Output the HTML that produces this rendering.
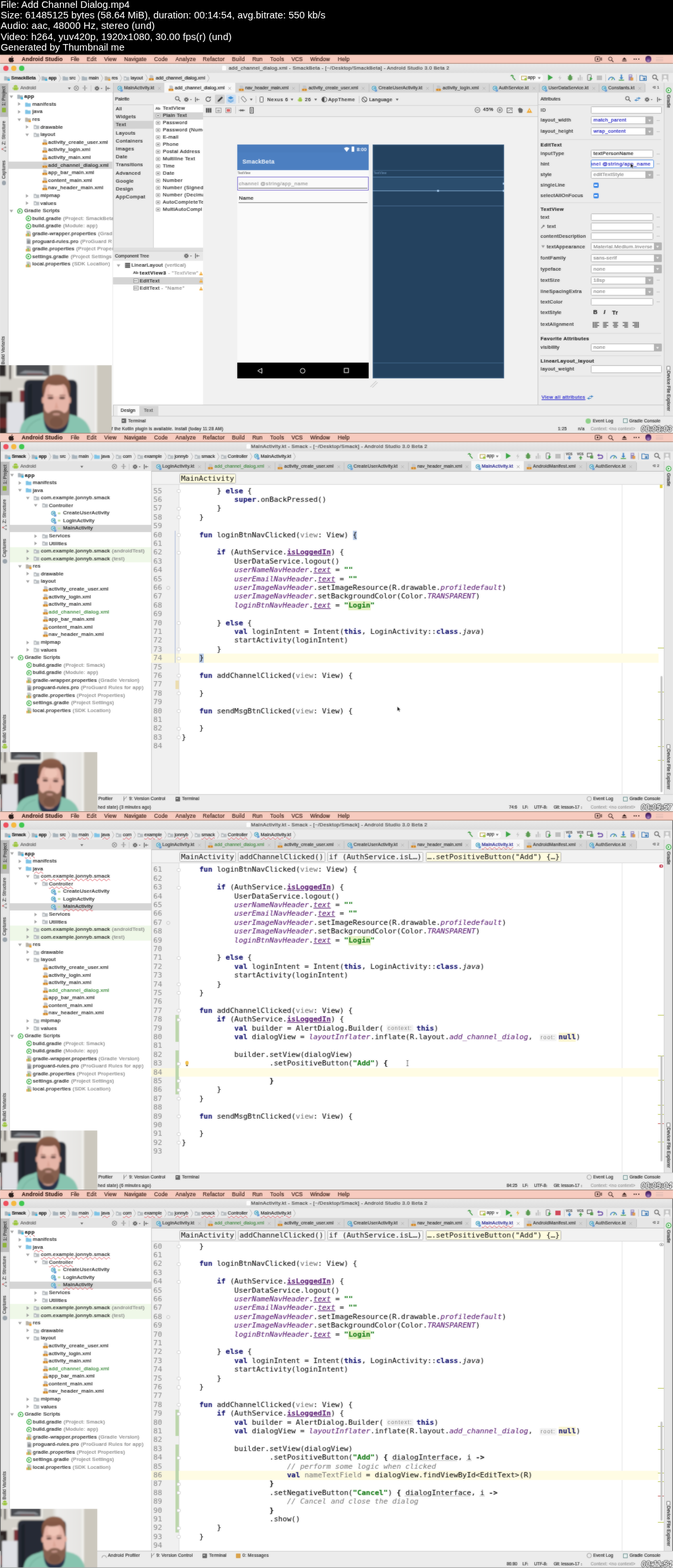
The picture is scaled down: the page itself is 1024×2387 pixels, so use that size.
<!DOCTYPE html>
<html lang="en"><head><meta charset="utf-8"><title>Add Channel Dialog.mp4 - thumbnails</title>
<style>
html,body{margin:0;padding:0;background:#000;}
#root{position:relative;width:1024px;height:2387px;overflow:hidden;background:#000;font-family:"Liberation Sans",sans-serif;}
#root div,#root span,#root svg{position:absolute;}
.t{white-space:pre;line-height:1.24;color:#262626;-webkit-text-stroke:0.22px;}
.hd,.hint{-webkit-text-stroke:0;}
.m{-webkit-text-stroke:0.1px;}
.m{font-family:"DejaVu Sans Mono","Liberation Mono",monospace;}
.c{font-size:11.09px;line-height:14px;height:14px;color:#101010;}
.ln{font-size:11.16px;line-height:14px;height:14px;color:#929292;}
.hint{font-size:8.2px;line-height:11px;height:11px;color:#7a7a7a;background:#f3f3f3;border-radius:2px;text-align:center;}
.ts{font-size:13px;line-height:13px;color:#fff;font-style:italic;letter-spacing:0.05px;-webkit-text-stroke:0;text-shadow:-0.7px -0.7px 0 #000,0.7px -0.7px 0 #000,-0.7px 0.7px 0 #000,0.7px 0.7px 0 #000,0 0.8px 0 #000,0 -0.8px 0 #000,0.8px 0 0 #000,-0.8px 0 0 #000;}
.hd{color:#fff;}
.fb{filter:url(#soft);}
.hdw{filter:blur(0.3px);}
</style></head>
<body><svg width="0" height="0" style="position:absolute"><defs><filter id="soft" x="0" y="0" width="100%" height="100%" color-interpolation-filters="sRGB"><feGaussianBlur in="SourceGraphic" stdDeviation="0.9" result="b"/><feComposite in="b" in2="SourceGraphic" operator="arithmetic" k1="0" k2="0.32" k3="0.68" k4="0"/></filter></defs></svg><div id="root">
<div class="hdw" style="left:0;top:0;width:1024px;height:83px;"><span class="t hd" style="left:1px;top:-2.08px;font-size:14.8px;color:#fff;letter-spacing:0.02px;">File: Add Channel Dialog.mp4</span><span class="t hd" style="left:1px;top:14.2px;font-size:14.8px;color:#fff;letter-spacing:0.03px;">Size: 61485125 bytes (58.64 MiB), duration: 00:14:54, avg.bitrate: 550 kb/s</span><span class="t hd" style="left:1px;top:30.48px;font-size:14.8px;color:#fff;letter-spacing:0.15px;">Audio: aac, 48000 Hz, stereo (und)</span><span class="t hd" style="left:1px;top:46.76px;font-size:14.8px;color:#fff;letter-spacing:0.09px;">Video: h264, yuv420p, 1920x1080, 30.00 fps(r) (und)</span><span class="t hd" style="left:1px;top:63.04px;font-size:14.8px;color:#fff;letter-spacing:0.05px;">Generated by Thumbnail me</span></div>
<div style="left:0;top:83px;width:1024px;height:576px;overflow:hidden;"><div class="fb" style="left:0;top:-83px;width:1024px;height:659px;"><div style="left:-6px;top:77px;width:1036px;height:588px;background:#ececec;"></div><div style="left:0px;top:83px;width:1024px;height:576px;background:#ececec;"></div><div style="left:0px;top:83px;width:1024px;height:14px;background:#f7cbbf;"></div><div style="left:0px;top:96.2px;width:1024px;height:1.1px;background:#a8806f;"></div><div style="left:0px;top:83px;width:1024px;height:0.8px;background:#8f7466;"></div><svg style="position:absolute;left:13px;top:84.6px" width="9" height="10" viewBox="0 0 18 20"><path fill="#2a1d1a" d="M12.2 0.3c0.1 1.2-0.4 2.3-1.1 3.1-0.8 0.9-1.9 1.5-3 1.4-0.1-1.1 0.4-2.3 1.1-3C10 0.9 11.200 0.400 12.2 0.3zM16 6.8c-1.300 0.800-2 2-2 3.400 0 1.700 1 3.100 2.500 3.700-0.400 1.200-1 2.300-1.700 3.300-0.900 1.300-1.800 2.500-3.200 2.500-1.300 0-1.700-0.800-3.300-0.800-1.500 0-2 0.800-3.300 0.800-1.300 0-2.300-1.200-3.200-2.500C0.100 14.600-0.600 10.800 0.900 8.300c1-1.700 2.600-2.700 4.300-2.700 1.400 0 2.500 0.900 3.400 0.900 0.900 0 2.200-1 3.900-0.900 1.300 0.100 2.600 0.600 3.500 1.200z"/></svg><span class="t" style="left:33px;top:85.05px;font-size:8.3px;color:#3a2019;font-weight:bold;letter-spacing:0.18px;">Android Studio</span><span class="t" style="left:107.5px;top:85.05px;font-size:8.3px;color:#3a2019;letter-spacing:-0.09px;">File</span><span class="t" style="left:132px;top:85.05px;font-size:8.3px;color:#3a2019;letter-spacing:0.17px;">Edit</span><span class="t" style="left:158.5px;top:85.05px;font-size:8.3px;color:#3a2019;letter-spacing:0.29px;">View</span><span class="t" style="left:189px;top:85.05px;font-size:8.3px;color:#3a2019;letter-spacing:0.16px;">Navigate</span><span class="t" style="left:234.5px;top:85.05px;font-size:8.3px;color:#3a2019;letter-spacing:0.29px;">Code</span><span class="t" style="left:267px;top:85.05px;font-size:8.3px;color:#3a2019;letter-spacing:0.21px;">Analyze</span><span class="t" style="left:308.5px;top:85.05px;font-size:8.3px;color:#3a2019;letter-spacing:0.27px;">Refactor</span><span class="t" style="left:353px;top:85.05px;font-size:8.3px;color:#3a2019;letter-spacing:0.21px;">Build</span><span class="t" style="left:384px;top:85.05px;font-size:8.3px;color:#3a2019;letter-spacing:0.09px;">Run</span><span class="t" style="left:411px;top:85.05px;font-size:8.3px;color:#3a2019;letter-spacing:0.42px;">Tools</span><span class="t" style="left:443.5px;top:85.05px;font-size:8.3px;color:#3a2019;letter-spacing:-0.02px;">VCS</span><span class="t" style="left:472px;top:85.05px;font-size:8.3px;color:#3a2019;letter-spacing:0.08px;">Window</span><span class="t" style="left:514px;top:85.05px;font-size:8.3px;color:#3a2019;letter-spacing:0.23px;">Help</span><svg style="position:absolute;left:904.5px;top:86px" width="11" height="8" viewBox="0 0 11 8"><rect x="0.5" y="0.6" width="7.4" height="6.600" rx="0.8" fill="none" stroke="#3a2420" stroke-width="0.9"/><circle cx="4.2" cy="3.900" r="1.4" fill="#3a2420"/><path d="M8.2 3.900L10.5 1.800V6Z" fill="none" stroke="#3a2420" stroke-width="0.8"/></svg><svg style="position:absolute;left:925px;top:85.7px" width="9" height="9" viewBox="0 0 9 9"><circle cx="3.600" cy="3.600" r="2.700" fill="none" stroke="#3a2420" stroke-width="1"/><path d="M5.600 5.600L8.400 8.400" stroke="#3a2420" stroke-width="1.2"/></svg><svg style="position:absolute;left:945.5px;top:86px" width="8" height="8" viewBox="0 0 8 8"><path d="M4 1.200L7.400 5H0.600Z M0.600 6H7.400V7.200H0.600Z" fill="#3a2420"/></svg><div style="left:963.6px;top:89.1px;width:2px;height:2px;background:#3a2420;border-radius:50%;"></div><div style="left:967.1px;top:89.1px;width:2px;height:2px;background:#3a2420;border-radius:50%;"></div><div style="left:970.6px;top:89.1px;width:2px;height:2px;background:#3a2420;border-radius:50%;"></div><div style="left:981.8px;top:85.4px;width:9.2px;height:9.2px;background:radial-gradient(circle at 50% 75%,#a78cc0 0,#5c2f7c 45%,#24102f 100%);border-radius:50%;"></div><div style="left:998px;top:87px;width:11px;height:1px;background:#dcbab2;"></div><div style="left:998px;top:89.5px;width:11px;height:1px;background:#dcbab2;"></div><div style="left:998px;top:92px;width:11px;height:1px;background:#dcbab2;"></div><div style="left:0px;top:97px;width:1024px;height:14px;background:linear-gradient(#ebebeb,#dcdcdc);"></div><div style="left:0px;top:110.5px;width:1024px;height:0.8px;background:#c4c4c4;"></div><div style="left:5.2px;top:100px;width:8px;height:8px;background:#ee4f5d;border-radius:50%;"></div><div style="left:17.2px;top:100px;width:8px;height:8px;background:#f6b83f;border-radius:50%;"></div><div style="left:29.2px;top:100px;width:8px;height:8px;background:#3fc84f;border-radius:50%;"></div><div style="left:338px;top:99.6px;width:5.6px;height:7.4px;background:#fdfdfd;border-radius:0.6px;box-shadow:0 0 0.6px #999;"></div><span class="t" style="left:348px;top:98.89px;font-size:7.6px;color:#4a4a4a;letter-spacing:0.34px;">add_channel_dialog.xml - SmackBeta - [~/Desktop/SmackBeta] - Android Studio 3.0 Beta 2</span><div style="left:0px;top:111.3px;width:1024px;height:15px;background:#ececec;"></div><svg style="position:absolute;left:6.4px;top:114.8px" width="9.2" height="8.6" viewBox="0 0 9.2 8.6"><path d="M0.3 1.2h3.4l0.9 1h4.1v5.300h-8.4z" fill="#a9b4bc"/><rect x="5.6" y="5" width="3.4" height="3.400" fill="#40b6e0"/></svg><span class="t" style="left:17px;top:114.54px;font-size:7.2px;color:#2e2e2e;font-weight:bold;letter-spacing:-0.15px;">SmackBeta</span><svg style="position:absolute;left:57.7px;top:113px" width="4" height="12" viewBox="0 0 4 12"><path d="M0.500 0.500l3 5.500-3 5.500" fill="none" stroke="#a8a8a8" stroke-width="0.700"/></svg><svg style="position:absolute;left:63.4px;top:114.8px" width="9.2" height="8.6" viewBox="0 0 9.2 8.6"><path d="M0.3 1.2h3.4l0.9 1h4.1v5.300h-8.4z" fill="#a9b4bc"/><rect x="5.6" y="5" width="3.4" height="3.400" fill="#40b6e0"/></svg><span class="t" style="left:74px;top:114.54px;font-size:7.2px;color:#2e2e2e;font-weight:bold;letter-spacing:-0.27px;">app</span><svg style="position:absolute;left:89.2px;top:113px" width="4" height="12" viewBox="0 0 4 12"><path d="M0.500 0.500l3 5.500-3 5.500" fill="none" stroke="#a8a8a8" stroke-width="0.700"/></svg><svg style="position:absolute;left:94.9px;top:114.8px" width="9.2" height="8.6" viewBox="0 0 9.2 8.6"><path d="M0.3 1.2h3.4l0.9 1h4.1v5.300h-8.4z" fill="#a9b4bc"/></svg><span class="t" style="left:105.5px;top:114.54px;font-size:7.2px;color:#2e2e2e;letter-spacing:-0.03px;">src</span><svg style="position:absolute;left:118.2px;top:113px" width="4" height="12" viewBox="0 0 4 12"><path d="M0.500 0.500l3 5.500-3 5.500" fill="none" stroke="#a8a8a8" stroke-width="0.700"/></svg><svg style="position:absolute;left:124.4px;top:114.8px" width="9.2" height="8.6" viewBox="0 0 9.2 8.6"><path d="M0.3 1.2h3.4l0.9 1h4.1v5.300h-8.4z" fill="#a9b4bc"/></svg><span class="t" style="left:135px;top:114.54px;font-size:7.2px;color:#2e2e2e;letter-spacing:-0.15px;">main</span><svg style="position:absolute;left:153.2px;top:113px" width="4" height="12" viewBox="0 0 4 12"><path d="M0.500 0.500l3 5.500-3 5.500" fill="none" stroke="#a8a8a8" stroke-width="0.700"/></svg><svg style="position:absolute;left:159.4px;top:114.8px" width="9.2" height="8.6" viewBox="0 0 9.2 8.6"><path d="M0.3 1.2h3.4l0.9 1h4.1v5.300h-8.4z" fill="#b9b3a8"/><rect x="5.6" y="5" width="3.4" height="3.400" fill="#e8a33d"/></svg><span class="t" style="left:170px;top:114.54px;font-size:7.2px;color:#2e2e2e;letter-spacing:-0.33px;">res</span><svg style="position:absolute;left:182.2px;top:113px" width="4" height="12" viewBox="0 0 4 12"><path d="M0.500 0.500l3 5.500-3 5.500" fill="none" stroke="#a8a8a8" stroke-width="0.700"/></svg><svg style="position:absolute;left:188.1px;top:114.8px" width="9.2" height="8.6" viewBox="0 0 9.2 8.6"><path d="M0.3 1.2h3.4l0.9 1h4.1v5.300h-8.4z" fill="#b7bcc0"/><rect x="1.4" y="3.6" width="2.6" height="2.4" fill="#eef0f1"/></svg><span class="t" style="left:198.7px;top:114.54px;font-size:7.2px;color:#2e2e2e;letter-spacing:-0.07px;">layout</span><svg style="position:absolute;left:220.7px;top:113px" width="4" height="12" viewBox="0 0 4 12"><path d="M0.500 0.500l3 5.500-3 5.500" fill="none" stroke="#a8a8a8" stroke-width="0.700"/></svg><svg style="position:absolute;left:226.4px;top:114.2px" width="8.8" height="9.2" viewBox="0 0 8.8 9.2"><path d="M1.800 0.300h3.800l1.800 1.800v3.400h-5.600z" fill="#c3c6cb"/><rect x="0.400" y="5" width="7.600" height="3.500" rx="0.500" fill="#e8a040"/><path d="M2.900 5.700l-1.200 1 1.200 1M5.500 5.700l1.200 1-1.200 1" stroke="#7a4a12" stroke-width="0.700" fill="none"/></svg><span class="t" style="left:237px;top:114.54px;font-size:7.2px;color:#2e2e2e;letter-spacing:-0.12px;">add_channel_dialog.xml</span><svg style="position:absolute;left:315.2px;top:113px" width="4" height="12" viewBox="0 0 4 12"><path d="M0.500 0.500l3 5.500-3 5.500" fill="none" stroke="#a8a8a8" stroke-width="0.700"/></svg><svg style="position:absolute;left:774.5px;top:113.1px" width="10" height="10" viewBox="0 0 10 10"><path d="M1 2.500l3-2 3 2.200-1.200 1.300-1.300-0.800z" fill="#4c9e4c"/><path d="M4.600 4l4.400 5" stroke="#4c9e4c" stroke-width="1.500"/></svg><div style="left:789.5px;top:112.5px;width:36.5px;height:11.2px;background:#fafafa;border-radius:2px;box-shadow:0 0 0.5px #aaa;"></div><svg style="position:absolute;left:792.5px;top:114.5px" width="9" height="8" viewBox="0 0 9 8"><rect x="0.500" y="1" width="7.500" height="5.500" fill="none" stroke="#b9a24a" stroke-width="1"/><rect x="5" y="4" width="3.500" height="3.500" fill="#9bc53d"/></svg><span class="t" style="left:803.1px;top:113.76px;font-size:7px;color:#333;letter-spacing:-0.06px;">app</span><svg style="position:absolute;left:818px;top:116.6px" width="5" height="4" viewBox="0 0 5 4"><path d="M0.300 0.500h4.400l-2.200 3z" fill="#777"/></svg><svg style="position:absolute;left:832.5px;top:113.1px" width="9" height="10" viewBox="0 0 9 10"><path d="M0.800 0.600v8.800l7.600-4.400z" fill="#3aa544"/></svg><svg style="position:absolute;left:849px;top:113.6px" width="6" height="9" viewBox="0 0 6 9"><path d="M3.500 0.300l-3 4.700h2.200l-0.700 3.700 3.300-5h-2.300z" fill="#c5c5c5"/></svg><svg style="position:absolute;left:862.5px;top:113.1px" width="9" height="10" viewBox="0 0 9 10"><ellipse cx="4.500" cy="5.800" rx="3" ry="3.600" fill="#5a9a50"/><circle cx="4.500" cy="2.200" r="1.700" fill="#5a9a50"/><path d="M0.500 4h8M0.500 7h8" stroke="#5a9a50" stroke-width="0.800"/></svg><svg style="position:absolute;left:877.5px;top:113.1px" width="9" height="10" viewBox="0 0 9 10"><rect x="1" y="5" width="2" height="4.500" fill="#c2c2c2"/><rect x="3.800" y="1" width="2" height="8.500" fill="#c2c2c2"/><rect x="6.500" y="4" width="2" height="5.500" fill="#d2d2d2"/></svg><svg style="position:absolute;left:892.5px;top:113.1px" width="9" height="10" viewBox="0 0 9 10"><rect x="1" y="0.600" width="5.500" height="8.800" rx="0.800" fill="none" stroke="#777" stroke-width="1"/><path d="M4.500 4v5.500l4.200-2.700z" fill="#3aa544"/></svg><div style="left:908.4px;top:114.5px;width:7.2px;height:7.2px;background:#bdbdbd;"></div><div style="left:921px;top:112.6px;width:0.8px;height:11px;background:#c9c9c9;"></div><div style="left:968px;top:112.6px;width:0.8px;height:11px;background:#c9c9c9;"></div><svg style="position:absolute;left:924.5px;top:113.6px" width="11" height="9" viewBox="0 0 11 9"><path d="M1 8a4.500 4.500 0 0 1 9 0" fill="none" stroke="#3b82c4" stroke-width="1.400"/><path d="M5.500 8l2.500-4" stroke="#4c9e4c" stroke-width="1.200"/></svg><svg style="position:absolute;left:940.5px;top:113.1px" width="9" height="10" viewBox="0 0 9 10"><path d="M3.500 0.500h2v4.500h2l-3 3-3-3h2z" fill="#3b82c4"/><rect x="0.500" y="8.300" width="8" height="1.400" fill="#4c9e4c"/></svg><svg style="position:absolute;left:954.5px;top:113.1px" width="9" height="10" viewBox="0 0 9 10"><rect x="1.500" y="0.500" width="5.500" height="9" fill="#9a8fc0"/><rect x="4.500" y="5" width="4" height="4.500" fill="#e09a4a"/><rect x="2.500" y="2" width="3.500" height="1" fill="#fff"/></svg><svg style="position:absolute;left:972.5px;top:113.6px" width="11" height="9" viewBox="0 0 11 9"><path d="M0.500 1h4l1 1.200h5v6.300h-10z" fill="none" stroke="#3b78b4" stroke-width="1.200"/><rect x="5.500" y="4.500" width="3.500" height="3" fill="#3b78b4"/></svg><svg style="position:absolute;left:992px;top:113.06px" width="10.08" height="10.08" viewBox="0 0 9.6 9.6"><circle cx="3.800" cy="3.800" r="2.800" fill="none" stroke="#666" stroke-width="1.100"/><path d="M5.900 5.900L9 9" stroke="#666" stroke-width="1.300"/></svg><svg style="position:absolute;left:1007px;top:112.6px" width="10" height="11" viewBox="0 0 10 11"><rect x="0" y="0" width="10" height="11" fill="#c6c6c6"/><circle cx="5" cy="4" r="2.300" fill="#f2f2f2"/><path d="M1 11a4 4 0 0 1 8 0z" fill="#f2f2f2"/></svg><div style="left:12px;top:126.3px;width:159.8px;height:14.8px;background:#e4e4e4;"></div><div style="left:12px;top:140.6px;width:159.8px;height:0.7px;background:#c8c8c8;"></div><svg style="position:absolute;left:18.5px;top:129.44px" width="9.5" height="9.12" viewBox="0 0 10 9.6"><path d="M1.800 3.600a3.200 3.200 0 0 1 6.400 0z" fill="#9bc53d"/><rect x="1.800" y="4.100" width="6.400" height="4.600" rx="0.700" fill="#9bc53d"/><rect x="0.300" y="4.100" width="1.100" height="3.600" rx="0.500" fill="#9bc53d"/><rect x="8.600" y="4.100" width="1.100" height="3.600" rx="0.500" fill="#9bc53d"/></svg><span class="t" style="left:31px;top:129.54px;font-size:7.2px;color:#6a6a6a;letter-spacing:-0.19px;">Android</span><svg style="position:absolute;left:103px;top:132.7px" width="5" height="4" viewBox="0 0 5 4"><path d="M0.300 0.300h4.400l-2.200 3z" fill="#666"/></svg><svg style="position:absolute;left:111.8px;top:129.8px" width="8.5" height="8.5" viewBox="0 0 8.5 8.5"><circle cx="4.200" cy="4.200" r="3.400" fill="none" stroke="#777" stroke-width="1"/><path d="M2.700 2.700l3 3M5.700 2.700l-3 3" stroke="#777" stroke-width="0.900"/></svg><svg style="position:absolute;left:125.3px;top:130px" width="8" height="8" viewBox="0 0 8 8"><path d="M4 0.500v7M0.500 4h7" stroke="#888" stroke-width="0.900"/><path d="M4 0l1.300 1.800h-2.600zM4 8l1.300-1.800h-2.600z" fill="#888"/></svg><div style="left:137.8px;top:129.5px;width:0.8px;height:9px;background:#c9c9c9;"></div><svg style="position:absolute;left:142.8px;top:129.5px" width="13" height="9" viewBox="0 0 13 9"><circle cx="4.500" cy="4.500" r="2.500" fill="none" stroke="#5a5a5a" stroke-width="1.800" stroke-dasharray="1.300 0.660"/><circle cx="4.500" cy="4.500" r="1.700" fill="none" stroke="#5a5a5a" stroke-width="1.200"/><path d="M10 4l1.500 1.600 1.500-1.600z" fill="#5a5a5a"/></svg><svg style="position:absolute;left:159.8px;top:129.5px" width="9" height="9" viewBox="0 0 9 9"><path d="M1.500 0.800v7.400" stroke="#5a5a5a" stroke-width="1.200"/><path d="M3 4.500h4.500M3 4.500l2-1.800M3 4.500l2 1.800" stroke="#5a5a5a" stroke-width="0.900" fill="none"/></svg><div style="left:171.8px;top:126.3px;width:838.2px;height:15px;background:#e6e6e6;"></div><div style="left:171.8px;top:126.3px;width:809.7px;height:15px;background:#d6d6d6;"></div><div style="left:171.8px;top:140.8px;width:838.2px;height:0.7px;background:#bdbdbd;"></div><div style="left:250.6px;top:127.5px;width:0.6px;height:12.5px;background:#c2c2c2;"></div><svg style="position:absolute;left:178.2px;top:129.9px" width="9.2" height="10" viewBox="0 0 9.2 10"><circle cx="4.2" cy="4.2" r="3.500" fill="#58a9c6"/><path d="M5.5 3.100a1.800 1.800 0 1 0 0 2.300" stroke="#fff" stroke-width="1" fill="none"/><path d="M5 6h3.600v3.400h-3.600z" fill="#5b8fd0"/><path d="M5 9.400l3.600-3.400h-3.600z" fill="#7fb3e0"/></svg><span class="t" style="left:188.7px;top:130.22px;font-size:6.9px;color:#3a3a3a;letter-spacing:0.18px;">MainActivity.kt</span><svg style="position:absolute;left:240px;top:132.3px" width="5" height="5" viewBox="0 0 5 5"><path d="M0.600 0.600l3.800 3.800M4.400 0.600l-3.800 3.800" stroke="#aaa" stroke-width="0.800"/></svg><div style="left:250px;top:126.3px;width:108px;height:15.2px;background:#f7f7f7;"></div><svg style="position:absolute;left:255.5px;top:129.7px" width="8.8" height="9.2" viewBox="0 0 8.8 9.2"><path d="M1.800 0.300h3.800l1.800 1.800v3.400h-5.600z" fill="#c3c6cb"/><rect x="0.400" y="5" width="7.600" height="3.500" rx="0.500" fill="#e8a040"/><path d="M2.900 5.700l-1.200 1 1.200 1M5.500 5.700l1.200 1-1.200 1" stroke="#7a4a12" stroke-width="0.700" fill="none"/></svg><span class="t" style="left:266px;top:130.22px;font-size:6.9px;color:#2a2a2a;letter-spacing:0.07px;">add_channel_dialog.xml</span><svg style="position:absolute;left:347px;top:132.3px" width="5" height="5" viewBox="0 0 5 5"><path d="M0.600 0.600l3.800 3.800M4.400 0.600l-3.800 3.800" stroke="#888" stroke-width="0.800"/></svg><div style="left:454.6px;top:127.5px;width:0.6px;height:12.5px;background:#c2c2c2;"></div><svg style="position:absolute;left:362.5px;top:129.7px" width="8.8" height="9.2" viewBox="0 0 8.8 9.2"><path d="M1.800 0.300h3.800l1.800 1.800v3.400h-5.600z" fill="#c3c6cb"/><rect x="0.400" y="5" width="7.600" height="3.500" rx="0.500" fill="#e8a040"/><path d="M2.900 5.700l-1.200 1 1.200 1M5.500 5.700l1.200 1-1.200 1" stroke="#7a4a12" stroke-width="0.700" fill="none"/></svg><span class="t" style="left:373px;top:130.22px;font-size:6.9px;color:#3a3a3a;letter-spacing:-0.1px;">nav_header_main.xml</span><svg style="position:absolute;left:444px;top:132.3px" width="5" height="5" viewBox="0 0 5 5"><path d="M0.600 0.600l3.800 3.800M4.400 0.600l-3.800 3.800" stroke="#aaa" stroke-width="0.800"/></svg><div style="left:560.6px;top:127.5px;width:0.6px;height:12.5px;background:#c2c2c2;"></div><svg style="position:absolute;left:458.9px;top:129.7px" width="8.8" height="9.2" viewBox="0 0 8.8 9.2"><path d="M1.800 0.300h3.800l1.800 1.800v3.400h-5.600z" fill="#c3c6cb"/><rect x="0.400" y="5" width="7.600" height="3.500" rx="0.500" fill="#e8a040"/><path d="M2.900 5.700l-1.200 1 1.200 1M5.500 5.700l1.200 1-1.200 1" stroke="#7a4a12" stroke-width="0.700" fill="none"/></svg><span class="t" style="left:469.4px;top:130.22px;font-size:6.9px;color:#3a3a3a;letter-spacing:0.08px;">activity_create_user.xml</span><svg style="position:absolute;left:550px;top:132.3px" width="5" height="5" viewBox="0 0 5 5"><path d="M0.600 0.600l3.800 3.800M4.400 0.600l-3.800 3.800" stroke="#aaa" stroke-width="0.800"/></svg><div style="left:658.6px;top:127.5px;width:0.6px;height:12.5px;background:#c2c2c2;"></div><svg style="position:absolute;left:565.4px;top:129.9px" width="9.2" height="10" viewBox="0 0 9.2 10"><circle cx="4.2" cy="4.2" r="3.500" fill="#58a9c6"/><path d="M5.5 3.100a1.800 1.800 0 1 0 0 2.300" stroke="#fff" stroke-width="1" fill="none"/><path d="M5 6h3.600v3.400h-3.600z" fill="#5b8fd0"/><path d="M5 9.400l3.600-3.400h-3.600z" fill="#7fb3e0"/></svg><span class="t" style="left:575.9px;top:130.22px;font-size:6.9px;color:#3a3a3a;letter-spacing:0.15px;">CreateUserActivity.kt</span><svg style="position:absolute;left:648px;top:132.3px" width="5" height="5" viewBox="0 0 5 5"><path d="M0.600 0.600l3.800 3.800M4.400 0.600l-3.800 3.800" stroke="#aaa" stroke-width="0.800"/></svg><div style="left:744.3px;top:127.5px;width:0.6px;height:12.5px;background:#c2c2c2;"></div><svg style="position:absolute;left:663px;top:129.7px" width="8.8" height="9.2" viewBox="0 0 8.8 9.2"><path d="M1.800 0.300h3.800l1.800 1.800v3.400h-5.600z" fill="#c3c6cb"/><rect x="0.400" y="5" width="7.600" height="3.500" rx="0.500" fill="#e8a040"/><path d="M2.900 5.700l-1.200 1 1.200 1M5.500 5.700l1.200 1-1.200 1" stroke="#7a4a12" stroke-width="0.700" fill="none"/></svg><span class="t" style="left:673.5px;top:130.22px;font-size:6.9px;color:#3a3a3a;letter-spacing:0.17px;">activity_login.xml</span><svg style="position:absolute;left:733.7px;top:132.3px" width="5" height="5" viewBox="0 0 5 5"><path d="M0.600 0.600l3.800 3.800M4.400 0.600l-3.800 3.800" stroke="#aaa" stroke-width="0.800"/></svg><div style="left:820.1px;top:127.5px;width:0.6px;height:12.5px;background:#c2c2c2;"></div><svg style="position:absolute;left:748.5px;top:129.9px" width="9.2" height="10" viewBox="0 0 9.2 10"><circle cx="4.2" cy="4.2" r="3.500" fill="#58a9c6"/><path d="M5.5 3.100a1.800 1.800 0 1 0 0 2.300" stroke="#fff" stroke-width="1" fill="none"/><path d="M5 6h3.600v3.400h-3.600z" fill="#5b8fd0"/><path d="M5 9.400l3.600-3.400h-3.600z" fill="#7fb3e0"/></svg><span class="t" style="left:759px;top:130.22px;font-size:6.9px;color:#3a3a3a;letter-spacing:0.07px;">AuthService.kt</span><svg style="position:absolute;left:809.5px;top:132.3px" width="5" height="5" viewBox="0 0 5 5"><path d="M0.600 0.600l3.800 3.800M4.400 0.600l-3.800 3.800" stroke="#aaa" stroke-width="0.800"/></svg><div style="left:911.1px;top:127.5px;width:0.6px;height:12.5px;background:#c2c2c2;"></div><svg style="position:absolute;left:824px;top:129.9px" width="9.2" height="10" viewBox="0 0 9.2 10"><circle cx="4.2" cy="4.2" r="3.500" fill="#58a9c6"/><path d="M5.5 3.100a1.800 1.800 0 1 0 0 2.300" stroke="#fff" stroke-width="1" fill="none"/><path d="M5 6h3.600v3.400h-3.600z" fill="#5b8fd0"/><path d="M5 9.400l3.600-3.400h-3.600z" fill="#7fb3e0"/></svg><span class="t" style="left:834.5px;top:130.22px;font-size:6.9px;color:#3a3a3a;letter-spacing:0.09px;">UserDataService.kt</span><svg style="position:absolute;left:900.5px;top:132.3px" width="5" height="5" viewBox="0 0 5 5"><path d="M0.600 0.600l3.800 3.800M4.400 0.600l-3.800 3.800" stroke="#aaa" stroke-width="0.800"/></svg><div style="left:981.1px;top:127.5px;width:0.6px;height:12.5px;background:#c2c2c2;"></div><svg style="position:absolute;left:915px;top:129.9px" width="9.2" height="10" viewBox="0 0 9.2 10"><circle cx="4.2" cy="4.2" r="3.500" fill="#58a9c6"/><path d="M5.5 3.100a1.800 1.800 0 1 0 0 2.300" stroke="#fff" stroke-width="1" fill="none"/><path d="M5 6h3.600v3.400h-3.600z" fill="#5b8fd0"/><path d="M5 9.400l3.600-3.400h-3.600z" fill="#7fb3e0"/></svg><span class="t" style="left:925.5px;top:130.22px;font-size:6.9px;color:#3a3a3a;letter-spacing:0.14px;">Constants.kt</span><svg style="position:absolute;left:970.5px;top:132.3px" width="5" height="5" viewBox="0 0 5 5"><path d="M0.600 0.600l3.800 3.800M4.400 0.600l-3.800 3.800" stroke="#aaa" stroke-width="0.800"/></svg><span class="t" style="left:992.5px;top:130.28px;font-size:6px;color:#555;">‣≡ 1</span><div style="left:0;top:0;width:171.800px;height:659px;overflow:hidden;"><div style="left:-0.8px;top:0;width:180px;height:10px;"><div style="left:12px;top:141px;width:159.8px;height:558px;background:#fff;"></div><svg style="position:absolute;left:14.6px;top:143.9px" width="6.6" height="6.6" viewBox="0 0 6.6 6.6"><path d="M0.600 1.500h5.400l-2.700 3.900z" fill="#a0a0a0"/></svg><svg style="position:absolute;left:27px;top:143px" width="9.2" height="8.6" viewBox="0 0 9.2 8.6"><path d="M0.3 1.2h3.4l0.9 1h4.1v5.300h-8.4z" fill="#a9b4bc"/><rect x="5.6" y="5" width="3.4" height="3.400" fill="#40b6e0"/></svg><span class="t" style="left:37.8px;top:142.3px;font-size:7.9px;color:#262626;font-weight:bold;letter-spacing:0.39px;">app</span><svg style="position:absolute;left:26.8px;top:155.49px" width="6.6" height="6.6" viewBox="0 0 6.6 6.6"><path d="M1.500 0.600v5.400l3.900-2.700z" fill="#a0a0a0"/></svg><svg style="position:absolute;left:39.2px;top:154.59px" width="9.2" height="8.6" viewBox="0 0 9.2 8.6"><path d="M0.3 1.2h3.4l0.9 1h4.1v5.300h-8.4z" fill="#7ec3e6"/></svg><span class="t" style="left:50px;top:153.89px;font-size:7.9px;color:#262626;letter-spacing:0.31px;">manifests</span><svg style="position:absolute;left:26.8px;top:167.08px" width="6.6" height="6.6" viewBox="0 0 6.6 6.6"><path d="M1.500 0.600v5.400l3.900-2.700z" fill="#a0a0a0"/></svg><svg style="position:absolute;left:39.2px;top:166.18px" width="9.2" height="8.6" viewBox="0 0 9.2 8.6"><path d="M0.3 1.2h3.4l0.9 1h4.1v5.300h-8.4z" fill="#7ec3e6"/></svg><span class="t" style="left:50px;top:165.48px;font-size:7.9px;color:#262626;letter-spacing:0.3px;">java</span><svg style="position:absolute;left:26.8px;top:178.67px" width="6.6" height="6.6" viewBox="0 0 6.6 6.6"><path d="M0.600 1.500h5.400l-2.700 3.900z" fill="#a0a0a0"/></svg><svg style="position:absolute;left:39.2px;top:177.77px" width="9.2" height="8.6" viewBox="0 0 9.2 8.6"><path d="M0.3 1.2h3.4l0.9 1h4.1v5.300h-8.4z" fill="#b9b3a8"/><rect x="5.6" y="5" width="3.4" height="3.400" fill="#e8a33d"/></svg><span class="t" style="left:50px;top:177.07px;font-size:7.9px;color:#262626;letter-spacing:0.3px;">res</span><svg style="position:absolute;left:39px;top:190.26px" width="6.6" height="6.6" viewBox="0 0 6.6 6.6"><path d="M1.500 0.600v5.400l3.900-2.700z" fill="#a0a0a0"/></svg><svg style="position:absolute;left:51.4px;top:189.36px" width="9.2" height="8.6" viewBox="0 0 9.2 8.6"><path d="M0.3 1.2h3.4l0.9 1h4.1v5.300h-8.4z" fill="#b7bcc0"/><rect x="1.4" y="3.6" width="2.6" height="2.4" fill="#eef0f1"/></svg><span class="t" style="left:62.2px;top:188.66px;font-size:7.9px;color:#262626;letter-spacing:0.33px;">drawable</span><svg style="position:absolute;left:39px;top:201.85px" width="6.6" height="6.6" viewBox="0 0 6.6 6.6"><path d="M0.600 1.500h5.400l-2.700 3.900z" fill="#a0a0a0"/></svg><svg style="position:absolute;left:51.4px;top:200.95px" width="9.2" height="8.6" viewBox="0 0 9.2 8.6"><path d="M0.3 1.2h3.4l0.9 1h4.1v5.300h-8.4z" fill="#b7bcc0"/><rect x="1.4" y="3.6" width="2.6" height="2.4" fill="#eef0f1"/></svg><span class="t" style="left:62.2px;top:200.25px;font-size:7.9px;color:#262626;letter-spacing:0.29px;">layout</span><svg style="position:absolute;left:64.5px;top:211.94px" width="8.8" height="9.2" viewBox="0 0 8.8 9.2"><path d="M1.800 0.300h3.800l1.800 1.800v3.400h-5.600z" fill="#c3c6cb"/><rect x="0.400" y="5" width="7.600" height="3.500" rx="0.500" fill="#e8a040"/><path d="M2.900 5.700l-1.200 1 1.200 1M5.500 5.700l1.200 1-1.200 1" stroke="#7a4a12" stroke-width="0.700" fill="none"/></svg><span class="t" style="left:74px;top:211.84px;font-size:7.9px;color:#262626;letter-spacing:0.29px;">activity_create_user.xml</span><svg style="position:absolute;left:64.5px;top:223.53px" width="8.8" height="9.2" viewBox="0 0 8.8 9.2"><path d="M1.800 0.300h3.800l1.800 1.800v3.400h-5.600z" fill="#c3c6cb"/><rect x="0.400" y="5" width="7.600" height="3.500" rx="0.500" fill="#e8a040"/><path d="M2.900 5.700l-1.200 1 1.200 1M5.500 5.700l1.200 1-1.200 1" stroke="#7a4a12" stroke-width="0.700" fill="none"/></svg><span class="t" style="left:74px;top:223.43px;font-size:7.9px;color:#262626;letter-spacing:0.27px;">activity_login.xml</span><svg style="position:absolute;left:64.5px;top:235.12px" width="8.8" height="9.2" viewBox="0 0 8.8 9.2"><path d="M1.800 0.300h3.800l1.800 1.800v3.400h-5.600z" fill="#c3c6cb"/><rect x="0.400" y="5" width="7.600" height="3.500" rx="0.500" fill="#e8a040"/><path d="M2.900 5.700l-1.200 1 1.200 1M5.500 5.700l1.200 1-1.200 1" stroke="#7a4a12" stroke-width="0.700" fill="none"/></svg><span class="t" style="left:74px;top:235.02px;font-size:7.9px;color:#262626;letter-spacing:0.29px;">activity_main.xml</span><div style="left:12px;top:245.72px;width:159.8px;height:11.59px;background:#d5d5d5;"></div><svg style="position:absolute;left:64.5px;top:246.71px" width="8.8" height="9.2" viewBox="0 0 8.8 9.2"><path d="M1.800 0.300h3.800l1.800 1.800v3.400h-5.600z" fill="#c3c6cb"/><rect x="0.400" y="5" width="7.600" height="3.500" rx="0.500" fill="#e8a040"/><path d="M2.900 5.700l-1.200 1 1.200 1M5.500 5.700l1.200 1-1.200 1" stroke="#7a4a12" stroke-width="0.700" fill="none"/></svg><span class="t" style="left:74px;top:246.61px;font-size:7.9px;color:#262626;letter-spacing:0.32px;">add_channel_dialog.xml</span><svg style="position:absolute;left:64.5px;top:258.3px" width="8.8" height="9.2" viewBox="0 0 8.8 9.2"><path d="M1.800 0.300h3.800l1.800 1.800v3.400h-5.600z" fill="#c3c6cb"/><rect x="0.400" y="5" width="7.600" height="3.500" rx="0.500" fill="#e8a040"/><path d="M2.900 5.700l-1.200 1 1.200 1M5.500 5.700l1.200 1-1.200 1" stroke="#7a4a12" stroke-width="0.700" fill="none"/></svg><span class="t" style="left:74px;top:258.2px;font-size:7.9px;color:#262626;letter-spacing:0.33px;">app_bar_main.xml</span><svg style="position:absolute;left:64.5px;top:269.89px" width="8.8" height="9.2" viewBox="0 0 8.8 9.2"><path d="M1.800 0.300h3.800l1.800 1.800v3.400h-5.600z" fill="#c3c6cb"/><rect x="0.400" y="5" width="7.600" height="3.500" rx="0.500" fill="#e8a040"/><path d="M2.900 5.700l-1.200 1 1.200 1M5.500 5.700l1.200 1-1.200 1" stroke="#7a4a12" stroke-width="0.700" fill="none"/></svg><span class="t" style="left:74px;top:269.79px;font-size:7.9px;color:#262626;letter-spacing:0.32px;">content_main.xml</span><svg style="position:absolute;left:64.5px;top:281.48px" width="8.8" height="9.2" viewBox="0 0 8.8 9.2"><path d="M1.800 0.300h3.800l1.800 1.800v3.400h-5.600z" fill="#c3c6cb"/><rect x="0.400" y="5" width="7.600" height="3.500" rx="0.500" fill="#e8a040"/><path d="M2.900 5.700l-1.200 1 1.200 1M5.500 5.700l1.200 1-1.200 1" stroke="#7a4a12" stroke-width="0.700" fill="none"/></svg><span class="t" style="left:74px;top:281.38px;font-size:7.9px;color:#262626;letter-spacing:0.34px;">nav_header_main.xml</span><svg style="position:absolute;left:39px;top:294.57px" width="6.6" height="6.6" viewBox="0 0 6.6 6.6"><path d="M1.500 0.600v5.400l3.900-2.700z" fill="#a0a0a0"/></svg><svg style="position:absolute;left:51.4px;top:293.67px" width="9.2" height="8.6" viewBox="0 0 9.2 8.6"><path d="M0.3 1.2h3.4l0.9 1h4.1v5.300h-8.4z" fill="#b7bcc0"/><rect x="1.4" y="3.6" width="2.6" height="2.4" fill="#eef0f1"/></svg><span class="t" style="left:62.2px;top:292.97px;font-size:7.9px;color:#262626;letter-spacing:0.39px;">mipmap</span><svg style="position:absolute;left:39px;top:306.16px" width="6.6" height="6.6" viewBox="0 0 6.6 6.6"><path d="M1.500 0.600v5.400l3.900-2.700z" fill="#a0a0a0"/></svg><svg style="position:absolute;left:51.4px;top:305.26px" width="9.2" height="8.6" viewBox="0 0 9.2 8.6"><path d="M0.3 1.2h3.4l0.9 1h4.1v5.300h-8.4z" fill="#b7bcc0"/><rect x="1.4" y="3.6" width="2.6" height="2.4" fill="#eef0f1"/></svg><span class="t" style="left:62.2px;top:304.56px;font-size:7.9px;color:#262626;letter-spacing:0.31px;">values</span><svg style="position:absolute;left:14.6px;top:317.75px" width="6.6" height="6.6" viewBox="0 0 6.6 6.6"><path d="M0.600 1.500h5.400l-2.700 3.900z" fill="#a0a0a0"/></svg><svg style="position:absolute;left:27px;top:316.65px" width="8.8" height="8.8" viewBox="0 0 8.8 8.8"><circle cx="4.4" cy="4.4" r="3.600" fill="#fff" stroke="#3fae49" stroke-width="1.300"/><path d="M3 2.600v3.600l3.200-1.800z" fill="#3fae49"/></svg><span class="t" style="left:37.8px;top:316.15px;font-size:7.9px;color:#262626;letter-spacing:0.29px;">Gradle Scripts</span><svg style="position:absolute;left:39.5px;top:328.24px" width="8.8" height="8.8" viewBox="0 0 8.8 8.8"><circle cx="4.4" cy="4.4" r="3.600" fill="#fff" stroke="#3fae49" stroke-width="1.300"/><path d="M3 2.600v3.600l3.200-1.800z" fill="#3fae49"/></svg><span class="t" style="left:50px;top:327.74px;font-size:7.9px;color:#262626;letter-spacing:0.28px;">build.gradle</span><span class="t" style="left:96.81px;top:327.74px;font-size:7.9px;color:#868686;letter-spacing:0.31px;">(Project: SmackBeta</span><svg style="position:absolute;left:39.5px;top:339.83px" width="8.8" height="8.8" viewBox="0 0 8.8 8.8"><circle cx="4.4" cy="4.4" r="3.600" fill="#fff" stroke="#3fae49" stroke-width="1.300"/><path d="M3 2.600v3.600l3.200-1.800z" fill="#3fae49"/></svg><span class="t" style="left:50px;top:339.33px;font-size:7.9px;color:#262626;letter-spacing:0.28px;">build.gradle</span><span class="t" style="left:96.81px;top:339.33px;font-size:7.9px;color:#868686;letter-spacing:0.31px;">(Module: app)</span><svg style="position:absolute;left:39.5px;top:351.22px" width="8.8" height="9.2" viewBox="0 0 8.8 9.2"><path d="M1.400 0.300h4.400l2 2v6.300h-6.400z" fill="#c5c8cc"/><rect x="0.300" y="5" width="2" height="3.800" fill="#e8a33d"/><rect x="2.800" y="3.600" width="2" height="5.200" fill="#8fb84e"/><rect x="5.300" y="5.600" width="2" height="3.200" fill="#e8a33d"/></svg><span class="t" style="left:50px;top:350.92px;font-size:7.9px;color:#262626;letter-spacing:0.3px;">gradle-wrapper.properties</span><span class="t" style="left:150.03px;top:350.92px;font-size:7.9px;color:#868686;letter-spacing:0.33px;">(Grad</span><svg style="position:absolute;left:39.5px;top:362.81px" width="8.8" height="9.2" viewBox="0 0 8.8 9.2"><path d="M1.400 0.300h4.400l2 2v6.300h-6.400z" fill="#b9bcc0"/><rect x="2.400" y="3.400" width="4.200" height="0.900" fill="#6d7074"/><rect x="2.400" y="5" width="4.200" height="0.900" fill="#6d7074"/><rect x="2.400" y="6.600" width="4.200" height="0.900" fill="#6d7074"/></svg><span class="t" style="left:50px;top:362.51px;font-size:7.9px;color:#262626;letter-spacing:0.3px;">proguard-rules.pro</span><span class="t" style="left:122.94px;top:362.51px;font-size:7.9px;color:#868686;letter-spacing:0.33px;">(ProGuard R</span><svg style="position:absolute;left:39.5px;top:374.4px" width="8.8" height="9.2" viewBox="0 0 8.8 9.2"><path d="M1.400 0.300h4.400l2 2v6.300h-6.400z" fill="#c5c8cc"/><rect x="0.300" y="5" width="2" height="3.800" fill="#e8a33d"/><rect x="2.800" y="3.600" width="2" height="5.200" fill="#8fb84e"/><rect x="5.300" y="5.600" width="2" height="3.200" fill="#e8a33d"/></svg><span class="t" style="left:50px;top:374.1px;font-size:7.9px;color:#262626;letter-spacing:0.29px;">gradle.properties</span><span class="t" style="left:116.76px;top:374.1px;font-size:7.9px;color:#868686;letter-spacing:0.29px;">(Project Proper</span><svg style="position:absolute;left:39.5px;top:386.19px" width="8.8" height="8.8" viewBox="0 0 8.8 8.8"><circle cx="4.4" cy="4.4" r="3.600" fill="#fff" stroke="#3fae49" stroke-width="1.300"/><path d="M3 2.600v3.600l3.200-1.800z" fill="#3fae49"/></svg><span class="t" style="left:50px;top:385.69px;font-size:7.9px;color:#262626;letter-spacing:0.28px;">settings.gradle</span><span class="t" style="left:108.21px;top:385.69px;font-size:7.9px;color:#868686;letter-spacing:0.28px;">(Project Settings</span><svg style="position:absolute;left:39.5px;top:397.58px" width="8.8" height="9.2" viewBox="0 0 8.8 9.2"><path d="M1.400 0.300h4.400l2 2v6.300h-6.400z" fill="#c5c8cc"/><rect x="0.300" y="5" width="2" height="3.800" fill="#e8a33d"/><rect x="2.800" y="3.600" width="2" height="5.200" fill="#8fb84e"/><rect x="5.300" y="5.600" width="2" height="3.200" fill="#e8a33d"/></svg><span class="t" style="left:50px;top:397.28px;font-size:7.9px;color:#262626;letter-spacing:0.28px;">local.properties</span><span class="t" style="left:110.58px;top:397.28px;font-size:7.9px;color:#868686;letter-spacing:0.31px;">(SDK Location)</span></div></div><div style="left:171.8px;top:141.3px;width:138.5px;height:557.7px;background:#ececec;"></div><div style="left:171.5px;top:126.3px;width:0.8px;height:573px;background:#c6c6c6;"></div><span class="t" style="left:175px;top:146.54px;font-size:7.2px;color:#2e2e2e;letter-spacing:-0.06px;">Palette</span><svg style="position:absolute;left:265.5px;top:146.44px" width="9.12" height="9.12" viewBox="0 0 9.6 9.6"><circle cx="3.800" cy="3.800" r="2.800" fill="none" stroke="#5a5a5a" stroke-width="1.100"/><path d="M5.900 5.900L9 9" stroke="#5a5a5a" stroke-width="1.300"/></svg><svg style="position:absolute;left:279px;top:146.5px" width="13" height="9" viewBox="0 0 13 9"><circle cx="4.500" cy="4.500" r="2.500" fill="none" stroke="#5a5a5a" stroke-width="1.800" stroke-dasharray="1.300 0.660"/><circle cx="4.500" cy="4.500" r="1.700" fill="none" stroke="#5a5a5a" stroke-width="1.200"/><path d="M10 4l1.500 1.600 1.500-1.600z" fill="#5a5a5a"/></svg><svg style="position:absolute;left:296px;top:146.5px" width="9" height="9" viewBox="0 0 9 9"><path d="M1.500 0.800v7.400" stroke="#5a5a5a" stroke-width="1.200"/><path d="M3 4.500h4.500M3 4.500l2-1.800M3 4.500l2 1.800" stroke="#5a5a5a" stroke-width="0.900" fill="none"/></svg><div style="left:171.8px;top:158.7px;width:138.5px;height:0.7px;background:#cfcfcf;"></div><div style="left:233.7px;top:159.4px;width:75px;height:217.5px;background:#fff;"></div><div style="left:233.3px;top:159.4px;width:0.7px;height:217.5px;background:#d2d2d2;"></div><div style="left:308.7px;top:159.4px;width:0.7px;height:456.3px;background:#cfcfcf;"></div><span class="t" style="left:176.3px;top:160.99px;font-size:7.6px;color:#262626;letter-spacing:0.35px;">All</span><span class="t" style="left:176.3px;top:173.2px;font-size:7.6px;color:#262626;letter-spacing:0.49px;">Widgets</span><div style="left:172.3px;top:184.02px;width:61px;height:12.2px;background:#d2d2d2;"></div><span class="t" style="left:176.3px;top:185.41px;font-size:7.6px;color:#262626;letter-spacing:0.44px;">Text</span><span class="t" style="left:176.3px;top:197.62px;font-size:7.6px;color:#262626;letter-spacing:0.48px;">Layouts</span><span class="t" style="left:176.3px;top:209.83px;font-size:7.6px;color:#262626;letter-spacing:0.46px;">Containers</span><span class="t" style="left:176.3px;top:222.04px;font-size:7.6px;color:#262626;letter-spacing:0.52px;">Images</span><span class="t" style="left:176.3px;top:234.25px;font-size:7.6px;color:#262626;letter-spacing:0.5px;">Date</span><span class="t" style="left:176.3px;top:246.46px;font-size:7.6px;color:#262626;letter-spacing:0.42px;">Transitions</span><span class="t" style="left:176.3px;top:258.67px;font-size:7.6px;color:#262626;letter-spacing:0.53px;">Advanced</span><span class="t" style="left:176.3px;top:270.88px;font-size:7.6px;color:#262626;letter-spacing:0.51px;">Google</span><span class="t" style="left:176.3px;top:283.09px;font-size:7.6px;color:#262626;letter-spacing:0.49px;">Design</span><span class="t" style="left:176.3px;top:295.3px;font-size:7.6px;color:#262626;letter-spacing:0.56px;">AppCompat</span><div style="left:0;top:0;width:308.700px;height:659px;overflow:hidden;"><span class="t" style="left:236.5px;top:161.53px;font-size:5.6px;color:#555;font-weight:bold;">Ab</span><span class="t" style="left:247.7px;top:160.29px;font-size:7.6px;color:#262626;letter-spacing:0.47px;">TextView</span><div style="left:234px;top:170.5px;width:75px;height:11px;background:#d4d4d4;"></div><div style="left:237px;top:172.7px;width:6.6px;height:6.6px;background:#f6f6f6;border:0.600px solid #adadad;box-sizing:border-box;border-radius:1px;"></div><div style="left:238.5px;top:175.4px;width:3.6px;height:1.4px;background:#8a8a8a;"></div><span class="t" style="left:247.7px;top:171.29px;font-size:7.6px;color:#262626;letter-spacing:0.41px;">Plain Text</span><div style="left:237px;top:183.7px;width:6.6px;height:6.6px;background:#f6f6f6;border:0.600px solid #adadad;box-sizing:border-box;border-radius:1px;"></div><div style="left:238.5px;top:186.4px;width:3.6px;height:1.4px;background:#8a8a8a;"></div><span class="t" style="left:247.7px;top:182.29px;font-size:7.6px;color:#262626;letter-spacing:0.52px;">Password</span><div style="left:237px;top:194.7px;width:6.6px;height:6.6px;background:#f6f6f6;border:0.600px solid #adadad;box-sizing:border-box;border-radius:1px;"></div><div style="left:238.5px;top:197.4px;width:3.6px;height:1.4px;background:#8a8a8a;"></div><span class="t" style="left:247.7px;top:193.29px;font-size:7.6px;color:#262626;letter-spacing:0.52px;">Password (Nume</span><div style="left:237px;top:205.7px;width:6.6px;height:6.6px;background:#f6f6f6;border:0.600px solid #adadad;box-sizing:border-box;border-radius:1px;"></div><div style="left:238.5px;top:208.4px;width:3.6px;height:1.4px;background:#8a8a8a;"></div><span class="t" style="left:247.7px;top:204.29px;font-size:7.6px;color:#262626;letter-spacing:0.45px;">E-mail</span><div style="left:237px;top:216.7px;width:6.6px;height:6.6px;background:#f6f6f6;border:0.600px solid #adadad;box-sizing:border-box;border-radius:1px;"></div><div style="left:238.5px;top:219.4px;width:3.6px;height:1.4px;background:#8a8a8a;"></div><span class="t" style="left:247.7px;top:215.29px;font-size:7.6px;color:#262626;letter-spacing:0.55px;">Phone</span><div style="left:237px;top:227.7px;width:6.6px;height:6.6px;background:#f6f6f6;border:0.600px solid #adadad;box-sizing:border-box;border-radius:1px;"></div><div style="left:238.5px;top:230.4px;width:3.6px;height:1.4px;background:#8a8a8a;"></div><span class="t" style="left:247.7px;top:226.29px;font-size:7.6px;color:#262626;letter-spacing:0.45px;">Postal Address</span><div style="left:237px;top:238.7px;width:6.6px;height:6.6px;background:#f6f6f6;border:0.600px solid #adadad;box-sizing:border-box;border-radius:1px;"></div><div style="left:238.5px;top:241.4px;width:3.6px;height:1.4px;background:#8a8a8a;"></div><span class="t" style="left:247.7px;top:237.29px;font-size:7.6px;color:#262626;letter-spacing:0.39px;">Multiline Text</span><div style="left:237px;top:249.7px;width:6.6px;height:6.6px;background:#f6f6f6;border:0.600px solid #adadad;box-sizing:border-box;border-radius:1px;"></div><div style="left:238.5px;top:252.4px;width:3.6px;height:1.4px;background:#8a8a8a;"></div><span class="t" style="left:247.7px;top:248.29px;font-size:7.6px;color:#262626;letter-spacing:0.52px;">Time</span><div style="left:237px;top:260.7px;width:6.6px;height:6.6px;background:#f6f6f6;border:0.600px solid #adadad;box-sizing:border-box;border-radius:1px;"></div><div style="left:238.5px;top:263.4px;width:3.6px;height:1.4px;background:#8a8a8a;"></div><span class="t" style="left:247.7px;top:259.29px;font-size:7.6px;color:#262626;letter-spacing:0.5px;">Date</span><div style="left:237px;top:271.7px;width:6.6px;height:6.6px;background:#f6f6f6;border:0.600px solid #adadad;box-sizing:border-box;border-radius:1px;"></div><div style="left:238.5px;top:274.4px;width:3.6px;height:1.4px;background:#8a8a8a;"></div><span class="t" style="left:247.7px;top:270.29px;font-size:7.6px;color:#262626;letter-spacing:0.56px;">Number</span><div style="left:237px;top:282.7px;width:6.6px;height:6.6px;background:#f6f6f6;border:0.600px solid #adadad;box-sizing:border-box;border-radius:1px;"></div><div style="left:238.5px;top:285.4px;width:3.6px;height:1.4px;background:#8a8a8a;"></div><span class="t" style="left:247.7px;top:281.29px;font-size:7.6px;color:#262626;letter-spacing:0.48px;">Number (Signed)</span><div style="left:237px;top:293.7px;width:6.6px;height:6.6px;background:#f6f6f6;border:0.600px solid #adadad;box-sizing:border-box;border-radius:1px;"></div><div style="left:238.5px;top:296.4px;width:3.6px;height:1.4px;background:#8a8a8a;"></div><span class="t" style="left:247.7px;top:292.29px;font-size:7.6px;color:#262626;letter-spacing:0.51px;">Number (Decima</span><div style="left:237px;top:304.7px;width:6.6px;height:6.6px;background:#f6f6f6;border:0.600px solid #adadad;box-sizing:border-box;border-radius:1px;"></div><div style="left:238.5px;top:307.4px;width:3.6px;height:1.4px;background:#8a8a8a;"></div><span class="t" style="left:247.7px;top:303.29px;font-size:7.6px;color:#262626;letter-spacing:0.5px;">AutoCompleteTe</span><div style="left:237px;top:315.7px;width:6.6px;height:6.6px;background:#f6f6f6;border:0.600px solid #adadad;box-sizing:border-box;border-radius:1px;"></div><div style="left:238.5px;top:318.4px;width:3.6px;height:1.4px;background:#8a8a8a;"></div><span class="t" style="left:247.7px;top:314.29px;font-size:7.6px;color:#262626;letter-spacing:0.48px;">MultiAutoCompl</span></div><div style="left:172.3px;top:377px;width:136.5px;height:5px;background:#dedede;"></div><div style="left:172.3px;top:382px;width:136.5px;height:16px;background:#e8e8e8;"></div><div style="left:172.3px;top:381.7px;width:136.5px;height:0.6px;background:#d2d2d2;"></div><span class="t" style="left:175px;top:385.52px;font-size:6.9px;color:#2e2e2e;letter-spacing:0.03px;">Component Tree</span><svg style="position:absolute;left:279px;top:385.3px" width="13" height="9" viewBox="0 0 13 9"><circle cx="4.500" cy="4.500" r="2.500" fill="none" stroke="#5a5a5a" stroke-width="1.800" stroke-dasharray="1.300 0.660"/><circle cx="4.500" cy="4.500" r="1.700" fill="none" stroke="#5a5a5a" stroke-width="1.200"/><path d="M10 4l1.500 1.600 1.500-1.600z" fill="#5a5a5a"/></svg><svg style="position:absolute;left:296px;top:385.3px" width="9" height="9" viewBox="0 0 9 9"><path d="M1.500 0.800v7.400" stroke="#5a5a5a" stroke-width="1.200"/><path d="M3 4.500h4.500M3 4.500l2-1.800M3 4.500l2 1.800" stroke="#5a5a5a" stroke-width="0.900" fill="none"/></svg><div style="left:172.3px;top:397.2px;width:136.5px;height:218.5px;background:#fff;"></div><div style="left:172.3px;top:421.5px;width:136.5px;height:11.6px;background:#d4d4d4;"></div><svg style="position:absolute;left:177px;top:400.7px" width="6.6" height="6.6" viewBox="0 0 6.6 6.6"><path d="M0.600 1.500h5.400l-2.700 3.900z" fill="#a0a0a0"/></svg><svg style="position:absolute;left:189.5px;top:400px" width="8.5" height="8" viewBox="0 0 8.5 8"><rect x="0.300" y="0.300" width="7.900" height="7.400" fill="#4a4a4a"/><path d="M0.300 2.700h8M0.300 5.200h8" stroke="#e8e8e8" stroke-width="0.700"/></svg><span class="t" style="left:200px;top:399.29px;font-size:7.6px;color:#262626;letter-spacing:0.34px;">LinearLayout</span><span class="t" style="left:251px;top:399.29px;font-size:7.6px;color:#868686;letter-spacing:0.29px;">(vertical)</span><span class="t" style="left:202.5px;top:411.98px;font-size:6px;color:#444;font-weight:bold;">Ab</span><span class="t" style="left:212.5px;top:410.99px;font-size:7.6px;color:#262626;font-weight:bold;letter-spacing:0.62px;">textView3</span><span class="t" style="left:256px;top:410.99px;font-size:7.6px;color:#9a9a9a;letter-spacing:0.47px;">- "TextView"</span><div style="left:202.5px;top:423.7px;width:8px;height:7.2px;background:#f0f0f0;border:0.600px solid #9a9a9a;box-sizing:border-box;"></div><div style="left:204px;top:426.7px;width:5px;height:1.4px;background:#777;"></div><span class="t" style="left:212.5px;top:422.59px;font-size:7.6px;color:#262626;letter-spacing:0.43px;">EditText</span><div style="left:202.5px;top:435.1px;width:8px;height:7.2px;background:#f0f0f0;border:0.600px solid #9a9a9a;box-sizing:border-box;"></div><div style="left:204px;top:438.1px;width:5px;height:1.4px;background:#777;"></div><span class="t" style="left:212.5px;top:433.99px;font-size:7.6px;color:#262626;letter-spacing:0.43px;">EditText</span><span class="t" style="left:245.5px;top:433.99px;font-size:7.6px;color:#868686;letter-spacing:0.65px;">- "Name"</span><svg style="position:absolute;left:303.2px;top:412.5px" width="5.8" height="6.2" viewBox="0 0 5.8 6.2"><path d="M2.900 0.300l2.800 5.600h-5.600z" fill="#f0a732"/><path d="M2.900 2.300v2" stroke="#fff" stroke-width="0.700"/></svg><svg style="position:absolute;left:303.2px;top:424.1px" width="5.8" height="6.2" viewBox="0 0 5.8 6.2"><path d="M2.900 0.300l2.800 5.600h-5.600z" fill="#f0a732"/><path d="M2.900 2.300v2" stroke="#fff" stroke-width="0.700"/></svg><svg style="position:absolute;left:303.2px;top:435.5px" width="5.8" height="6.2" viewBox="0 0 5.8 6.2"><path d="M2.900 0.300l2.800 5.600h-5.600z" fill="#f0a732"/><path d="M2.900 2.300v2" stroke="#fff" stroke-width="0.700"/></svg><div style="left:172.3px;top:615.7px;width:852px;height:0.7px;background:#c9c9c9;"></div><div style="left:178.5px;top:617.8px;width:33px;height:15.6px;background:#fafafa;"></div><div style="left:211.5px;top:617.8px;width:29px;height:15.6px;background:#d4d4d4;"></div><span class="t" style="left:183.6px;top:621.02px;font-size:6.9px;color:#222;letter-spacing:0.15px;">Design</span><span class="t" style="left:219px;top:621.02px;font-size:6.9px;color:#555;letter-spacing:0.34px;">Text</span><div style="left:309.4px;top:141.3px;width:508.9px;height:474.4px;background:#f1f1f1;"></div><div style="left:309.4px;top:141.3px;width:508.9px;height:36.2px;background:#ececec;"></div><div style="left:309.4px;top:159.6px;width:508.9px;height:0.6px;background:#d4d4d4;"></div><div style="left:309.4px;top:177.3px;width:508.9px;height:0.7px;background:#cdcdcd;"></div><svg style="position:absolute;left:312px;top:146.4px" width="10" height="10" viewBox="0 0 10 10"><path d="M8.200 5a3.400 3.400 0 1 1-1.200-2.600" fill="none" stroke="#555" stroke-width="1.200"/><path d="M8.800 0.600v3h-3z" fill="#555"/></svg><div style="left:326.5px;top:144.4px;width:15.5px;height:14px;background:#d0d0d0;border-radius:1.500px;"></div><svg style="position:absolute;left:329.5px;top:146.4px" width="10" height="10" viewBox="0 0 10 10"><path d="M1 9l0.800-2.600 5.500-5.500 1.800 1.800-5.500 5.500z" fill="#333"/></svg><div style="left:343.5px;top:144.4px;width:15px;height:14px;background:#cfe0f2;border-radius:1.500px;"></div><svg style="position:absolute;left:345.5px;top:146.4px" width="10" height="10" viewBox="0 0 10 10"><path d="M5 0.500l4.500 2.500-4.500 2.500-4.500-2.500z" fill="#3d8fd6"/><path d="M0.500 5.500l4.500 2.500 4.500-2.500M0.500 7.500l4.500 2.200 4.500-2.200" fill="none" stroke="#3d8fd6" stroke-width="0.900"/></svg><div style="left:362.5px;top:145.9px;width:0.8px;height:11px;background:#c9c9c9;"></div><svg style="position:absolute;left:366px;top:146.4px" width="10" height="10" viewBox="0 0 10 10"><rect x="2.800" y="0.800" width="4.400" height="8.400" rx="1" transform="rotate(-40 5 5)" fill="none" stroke="#666" stroke-width="0.900"/></svg><svg style="position:absolute;left:379.5px;top:150.2px" width="4.6" height="3.6" viewBox="0 0 4.6 3.6"><path d="M0.200 0.300h4.200l-2.100 3z" fill="#555"/></svg><div style="left:388.5px;top:145.9px;width:0.8px;height:11px;background:#c9c9c9;"></div><svg style="position:absolute;left:395px;top:146.9px" width="6" height="9" viewBox="0 0 6 9"><rect x="0.500" y="0.500" width="5" height="8" rx="0.800" fill="none" stroke="#555" stroke-width="0.900"/></svg><span class="t" style="left:406.4px;top:146.81px;font-size:7.4px;color:#222;letter-spacing:0.78px;">Nexus 6</span><svg style="position:absolute;left:441.5px;top:150.2px" width="4.6" height="3.6" viewBox="0 0 4.6 3.6"><path d="M0.200 0.300h4.200l-2.100 3z" fill="#555"/></svg><svg style="position:absolute;left:452.5px;top:148.3px" width="7.5" height="7.2" viewBox="0 0 10 9.6"><path d="M1.800 3.600a3.200 3.200 0 0 1 6.400 0z" fill="#9bc53d"/><rect x="1.800" y="4.100" width="6.400" height="4.600" rx="0.700" fill="#9bc53d"/><rect x="0.300" y="4.100" width="1.100" height="3.600" rx="0.500" fill="#9bc53d"/><rect x="8.600" y="4.100" width="1.100" height="3.600" rx="0.500" fill="#9bc53d"/></svg><span class="t" style="left:464px;top:146.81px;font-size:7.4px;color:#222;letter-spacing:0.63px;">26</span><svg style="position:absolute;left:478px;top:150.2px" width="4.6" height="3.6" viewBox="0 0 4.6 3.6"><path d="M0.200 0.300h4.200l-2.100 3z" fill="#555"/></svg><svg style="position:absolute;left:488.5px;top:146.9px" width="9" height="9" viewBox="0 0 9 9"><circle cx="4.500" cy="4.500" r="3.800" fill="none" stroke="#444" stroke-width="0.900"/><path d="M4.500 0.700a3.800 3.800 0 0 0 0 7.600z" fill="#444"/></svg><span class="t" style="left:499.5px;top:146.81px;font-size:7.4px;color:#222;letter-spacing:0.6px;">AppTheme</span><div style="left:545.5px;top:145.9px;width:0.8px;height:11px;background:#c9c9c9;"></div><svg style="position:absolute;left:549.5px;top:146.9px" width="9" height="9" viewBox="0 0 9 9"><circle cx="4.500" cy="4.500" r="3.800" fill="none" stroke="#444" stroke-width="1"/><path d="M2 3c2 0 2 2 3 3s2 0 3 1" fill="none" stroke="#444" stroke-width="1"/></svg><span class="t" style="left:561.7px;top:146.81px;font-size:7.4px;color:#222;letter-spacing:0.32px;">Language</span><svg style="position:absolute;left:602px;top:150.2px" width="4.6" height="3.6" viewBox="0 0 4.6 3.6"><path d="M0.200 0.300h4.200l-2.100 3z" fill="#555"/></svg><svg style="position:absolute;left:312.5px;top:163.6px" width="9" height="8" viewBox="0 0 9 8"><rect x="0.500" y="0.500" width="2" height="7" fill="#333"/><rect x="3.500" y="0.500" width="2" height="7" fill="#333"/><rect x="6.500" y="0.500" width="2" height="7" fill="#333"/></svg><svg style="position:absolute;left:327.5px;top:163.6px" width="9" height="8" viewBox="0 0 9 8"><rect x="0.500" y="0.500" width="8" height="7" fill="none" stroke="#888" stroke-width="0.800"/><rect x="2.500" y="3" width="4" height="3" fill="#aaa"/></svg><svg style="position:absolute;left:342.5px;top:163.6px" width="9" height="8" viewBox="0 0 9 8"><rect x="0.500" y="0.500" width="8" height="7" fill="none" stroke="#888" stroke-width="0.800"/><rect x="2" y="2" width="5" height="4" fill="#d66"/></svg><div style="left:358px;top:162.1px;width:0.8px;height:11px;background:#c9c9c9;"></div><svg style="position:absolute;left:362.5px;top:163.6px" width="10" height="8" viewBox="0 0 10 8"><path d="M0.500 4h3.200M9.500 4h-3.200" stroke="#333" stroke-width="1"/><path d="M3.200 2l2 2-2 2zM6.800 2l-2 2 2 2z" fill="#333"/></svg><svg style="position:absolute;left:378.5px;top:162.6px" width="8" height="10" viewBox="0 0 8 10"><rect x="1.500" y="0.800" width="5" height="8.400" fill="none" stroke="#333" stroke-width="0.900"/><path d="M4 2.200v5.600" stroke="#333" stroke-width="0.900"/></svg><svg style="position:absolute;left:721.5px;top:163.1px" width="9" height="9" viewBox="0 0 9 9"><circle cx="4.500" cy="4.500" r="3.800" fill="none" stroke="#555" stroke-width="0.900"/><path d="M2.500 4.500h4" stroke="#555" stroke-width="0.900"/></svg><span class="t" style="left:735px;top:163.14px;font-size:7.2px;color:#222;letter-spacing:0.53px;">45%</span><svg style="position:absolute;left:755.5px;top:163.1px" width="9" height="9" viewBox="0 0 9 9"><circle cx="4.500" cy="4.500" r="3.800" fill="none" stroke="#555" stroke-width="0.900"/><path d="M2.500 4.500h4M4.500 2.500v4" stroke="#555" stroke-width="0.900"/></svg><svg style="position:absolute;left:770.5px;top:163.6px" width="9.5" height="8" viewBox="0 0 9.5 8"><rect x="0.500" y="0.500" width="8.500" height="7" fill="none" stroke="#555" stroke-width="0.900"/><path d="M2.500 5.500l2-2.500M5.500 2.500l1.500 0v1.500" stroke="#555" stroke-width="0.800" fill="none"/></svg><svg style="position:absolute;left:786.5px;top:163.1px" width="9" height="9" viewBox="0 0 9 9"><path d="M1.500 4.500v-2.500h1.400v-1h1.400v0.500h1.400v0.500h1.400v1h1.200v3l-1 2.700h-4.500z" fill="#666"/></svg><svg style="position:absolute;left:801px;top:163.6px" width="9" height="8" viewBox="0 0 9 8"><path d="M4.500 0.300l4.300 7.400h-8.600z" fill="#f0a732"/><path d="M4.500 3v2.500" stroke="#fff" stroke-width="0.900"/></svg><div style="left:361px;top:220.3px;width:199.7px;height:355.5px;background:#fafafa;"></div><div style="left:361px;top:220.3px;width:199.7px;height:39.1px;background:#4c7fc1;"></div><div style="left:361px;top:220.3px;width:199.7px;height:12px;background:#4a7cbd;"></div><span class="t" style="left:369px;top:240.87px;font-size:8.6px;color:#fff;letter-spacing:0.56px;">SmackBeta</span><svg style="position:absolute;left:522.5px;top:223.5px" width="9" height="7.5" viewBox="0 0 9 7.5"><path d="M0.300 1.800a6.500 6.500 0 0 1 8.400 0l-4.200 5.400z" fill="#fff"/></svg><div style="left:534.5px;top:223.2px;width:4.6px;height:7.8px;background:#fff;border-radius:0.600px;"></div><span class="t" style="left:543px;top:223.86px;font-size:7px;color:#fff;letter-spacing:0.34px;">8:00</span><span class="t" style="left:361.5px;top:261.32px;font-size:4.8px;color:#8a8a8a;letter-spacing:0.05px;">TextView</span><div style="left:361px;top:268.7px;width:199.7px;height:21.3px;background:transparent;border:0.900px solid #7d6fd0;box-sizing:border-box;"></div><span class="t" style="left:363.5px;top:275.29px;font-size:7.6px;color:#9a9a9a;letter-spacing:0.52px;">channel @string/app_name</span><div style="left:363px;top:286px;width:195.5px;height:0.8px;background:#6a6a6a;"></div><span class="t" style="left:363.5px;top:296.94px;font-size:8px;color:#222;letter-spacing:0.29px;">Name</span><div style="left:363px;top:308.2px;width:195.5px;height:0.8px;background:#777;"></div><div style="left:361px;top:552.4px;width:199.7px;height:23.4px;background:#000;"></div><svg style="position:absolute;left:390.5px;top:559.5px" width="9" height="9" viewBox="0 0 9 9"><path d="M7.500 0.800v7.400l-6.500-3.700z" fill="none" stroke="#fff" stroke-width="1"/></svg><svg style="position:absolute;left:456px;top:559.5px" width="9" height="9" viewBox="0 0 9 9"><circle cx="4.500" cy="4.500" r="3.600" fill="none" stroke="#fff" stroke-width="1"/></svg><svg style="position:absolute;left:522.5px;top:560px" width="8" height="8" viewBox="0 0 8 8"><rect x="0.800" y="0.800" width="6.400" height="6.400" fill="none" stroke="#fff" stroke-width="1"/></svg><div style="left:567px;top:220.3px;width:199.8px;height:355.5px;background:#24425f;"></div><div style="left:567px;top:220.3px;width:199.8px;height:355.5px;background:transparent;border:0.600px solid #3d6186;box-sizing:border-box;"></div><div style="left:567px;top:259.4px;width:199.8px;height:0.7px;background:#3f6388;"></div><div style="left:567px;top:268.7px;width:199.8px;height:0.7px;background:#5b84ad;"></div><div style="left:567px;top:290px;width:199.8px;height:0.7px;background:#7fa6cc;"></div><div style="left:567px;top:312.6px;width:199.8px;height:0.7px;background:#46698d;"></div><div style="left:567px;top:552.4px;width:199.8px;height:0.7px;background:#3f6388;"></div><div style="left:567px;top:268.7px;width:199.8px;height:21.3px;background:rgba(80,130,180,0.18);"></div><div style="left:665px;top:288.6px;width:3px;height:3px;background:#9fc3e6;"></div><div style="left:764.5px;top:288.6px;width:2.5px;height:3px;background:#9fc3e6;"></div><div style="left:764.5px;top:277.5px;width:2.5px;height:3px;background:#9fc3e6;"></div><span class="t" style="left:568.5px;top:261.32px;font-size:4.8px;color:#5b7fa3;letter-spacing:0.05px;">TextView</span><svg style="position:absolute;left:562.5px;top:579px" width="12" height="12" viewBox="0 0 12 12"><path d="M0.500 10l9-9M3.500 11l8-8" stroke="#9a9a9a" stroke-width="0.700"/></svg><div style="left:818.6px;top:141.3px;width:191.4px;height:474.4px;background:#ececec;"></div><div style="left:818.2px;top:141.3px;width:0.8px;height:474.4px;background:#c9c9c9;"></div><span class="t" style="left:822.4px;top:146.72px;font-size:6.9px;color:#2e2e2e;letter-spacing:0.12px;">Attributes</span><svg style="position:absolute;left:950.5px;top:146.44px" width="9.12" height="9.12" viewBox="0 0 9.6 9.6"><circle cx="3.800" cy="3.800" r="2.800" fill="none" stroke="#5a5a5a" stroke-width="1.100"/><path d="M5.900 5.900L9 9" stroke="#5a5a5a" stroke-width="1.300"/></svg><svg style="position:absolute;left:965px;top:147px" width="10" height="8" viewBox="0 0 10 8"><path d="M0.500 5.500h6M9.500 2.500h-6" stroke="#3b82c4" stroke-width="1"/><path d="M6.500 0.500l3 2-3 2zM3.500 3.500l-3 2 3 2z" fill="#3b82c4"/></svg><svg style="position:absolute;left:980px;top:146.5px" width="13" height="9" viewBox="0 0 13 9"><circle cx="4.500" cy="4.500" r="2.500" fill="none" stroke="#5a5a5a" stroke-width="1.800" stroke-dasharray="1.300 0.660"/><circle cx="4.500" cy="4.500" r="1.700" fill="none" stroke="#5a5a5a" stroke-width="1.200"/><path d="M10 4l1.500 1.600 1.500-1.600z" fill="#5a5a5a"/></svg><svg style="position:absolute;left:998.5px;top:146.5px" width="9" height="9" viewBox="0 0 9 9"><path d="M1.500 0.800v7.400" stroke="#5a5a5a" stroke-width="1.200"/><path d="M3 4.500h4.500M3 4.500l2-1.800M3 4.500l2 1.800" stroke="#5a5a5a" stroke-width="0.900" fill="none"/></svg><div style="left:818.6px;top:158.7px;width:191.4px;height:0.7px;background:#cfcfcf;"></div><span class="t" style="left:822.6px;top:162.75px;font-size:7.5px;color:#2a2a2a;letter-spacing:0.42px;">ID</span><div style="left:899px;top:161.7px;width:107.8px;height:11.4px;background:#fff;border:0.700px solid #b4b4b4;box-sizing:border-box;border-radius:1.500px;"></div><span class="t" style="left:822.6px;top:178.25px;font-size:7.5px;color:#2a2a2a;letter-spacing:0.39px;">layout_width</span><div style="left:899px;top:176.8px;width:95.4px;height:12.2px;background:#fff;border:0.700px solid #b4b4b4;box-sizing:border-box;border-radius:1.500px;"></div><div style="left:982.1px;top:176.8px;width:12.3px;height:12.2px;background:#b2b2b2;border-radius:0 1.500px 1.500px 0;"></div><svg style="position:absolute;left:985.9px;top:181.6px" width="5" height="3.6" viewBox="0 0 5 3.6"><path d="M0.300 0.300h4.400l-2.200 3z" fill="#f2f2f2"/></svg><span class="t" style="left:903px;top:178.19px;font-size:7.6px;color:#1c1cc0;letter-spacing:0.31px;">match_parent</span><div style="left:998.5px;top:182.6px;width:5px;height:0.6px;background:#c4c4c4;"></div><span class="t" style="left:822.6px;top:195.35px;font-size:7.5px;color:#2a2a2a;letter-spacing:0.39px;">layout_height</span><div style="left:899px;top:193.9px;width:95.4px;height:12.2px;background:#fff;border:0.700px solid #b4b4b4;box-sizing:border-box;border-radius:1.500px;"></div><div style="left:982.1px;top:193.9px;width:12.3px;height:12.2px;background:#b2b2b2;border-radius:0 1.500px 1.500px 0;"></div><svg style="position:absolute;left:985.9px;top:198.7px" width="5" height="3.6" viewBox="0 0 5 3.6"><path d="M0.300 0.300h4.400l-2.200 3z" fill="#f2f2f2"/></svg><span class="t" style="left:903px;top:195.29px;font-size:7.6px;color:#1c1cc0;letter-spacing:0.3px;">wrap_content</span><div style="left:998.5px;top:199.7px;width:5px;height:0.6px;background:#c4c4c4;"></div><div style="left:822px;top:212.2px;width:184px;height:0.6px;background:#d9d9d9;"></div><span class="t" style="left:822.6px;top:216.15px;font-size:7.5px;color:#2a2a2a;font-weight:bold;letter-spacing:0.41px;">EditText</span><span class="t" style="left:822.6px;top:229.35px;font-size:7.5px;color:#2a2a2a;letter-spacing:0.41px;">inputType</span><div style="left:899px;top:228.3px;width:95.4px;height:11.4px;background:#fff;border:0.700px solid #b4b4b4;box-sizing:border-box;border-radius:1.500px;"></div><span class="t" style="left:903px;top:229.29px;font-size:7.6px;color:#222;letter-spacing:0.32px;">textPersonName</span><div style="left:998.5px;top:233.7px;width:5px;height:0.6px;background:#c4c4c4;"></div><span class="t" style="left:822.6px;top:244.95px;font-size:7.5px;color:#2a2a2a;letter-spacing:0.34px;">hint</span><div style="left:898.5px;top:243.4px;width:96.4px;height:12.4px;background:#fff;border:1.100px solid #5b95e6;box-sizing:border-box;border-radius:1.800px;"></div><div style="left:900px;top:244px;width:93.4px;height:11px;overflow:hidden;"><span class="t" style="left:-16.5px;top:0.89px;font-size:7.6px;color:#1c1cc0;letter-spacing:0.58px;">channel @string/app_name</span></div><div style="left:998.5px;top:249.3px;width:5px;height:0.6px;background:#c4c4c4;"></div><svg style="position:absolute;left:958.5px;top:247.5px" width="6" height="9" viewBox="0 0 6 9"><path d="M0.500 0.500v7l1.800-1.600 1.200 2.600 1-0.500-1.200-2.500h2.300z" fill="#111" stroke="#fff" stroke-width="0.400"/></svg><span class="t" style="left:822.6px;top:261.15px;font-size:7.5px;color:#2a2a2a;letter-spacing:0.35px;">style</span><div style="left:899px;top:259.7px;width:95.4px;height:12.2px;background:#fff;border:0.700px solid #b4b4b4;box-sizing:border-box;border-radius:1.500px;"></div><div style="left:982.1px;top:259.7px;width:12.3px;height:12.2px;background:#b2b2b2;border-radius:0 1.500px 1.500px 0;"></div><svg style="position:absolute;left:985.9px;top:264.5px" width="5" height="3.6" viewBox="0 0 5 3.6"><path d="M0.300 0.300h4.400l-2.200 3z" fill="#f2f2f2"/></svg><span class="t" style="left:903px;top:261.09px;font-size:7.6px;color:#8a8a8a;letter-spacing:0.26px;">editTextStyle</span><div style="left:998.5px;top:265.5px;width:5px;height:0.6px;background:#c4c4c4;"></div><span class="t" style="left:822.6px;top:277.35px;font-size:7.5px;color:#2a2a2a;letter-spacing:0.38px;">singleLine</span><div style="left:902.7px;top:277.8px;width:8.4px;height:8.4px;background:#3f8ae8;border-radius:2px;"></div><div style="left:904.4px;top:281.3px;width:5px;height:1.4px;background:#fff;"></div><span class="t" style="left:822.6px;top:293.35px;font-size:7.5px;color:#2a2a2a;letter-spacing:0.41px;">selectAllOnFocus</span><div style="left:902.7px;top:293.8px;width:8.4px;height:8.4px;background:#3f8ae8;border-radius:2px;"></div><div style="left:904.4px;top:297.3px;width:5px;height:1.4px;background:#fff;"></div><div style="left:822px;top:308.2px;width:184px;height:0.6px;background:#d9d9d9;"></div><span class="t" style="left:822.6px;top:313.55px;font-size:7.5px;color:#2a2a2a;font-weight:bold;letter-spacing:0.45px;">TextView</span><span class="t" style="left:822.6px;top:325.75px;font-size:7.5px;color:#2a2a2a;letter-spacing:0.34px;">text</span><div style="left:899px;top:324.7px;width:95.4px;height:11.4px;background:#fff;border:0.700px solid #b4b4b4;box-sizing:border-box;border-radius:1.500px;"></div><div style="left:998.5px;top:330.1px;width:5px;height:0.6px;background:#c4c4c4;"></div><svg style="position:absolute;left:823px;top:341.5px" width="6" height="6" viewBox="0 0 6 6"><path d="M0.500 5.500l3-3" stroke="#777" stroke-width="1.100"/><circle cx="4.200" cy="1.800" r="1.500" fill="#777"/></svg><span class="t" style="left:832.5px;top:340.35px;font-size:7.5px;color:#2a2a2a;letter-spacing:0.34px;">text</span><div style="left:899px;top:339.3px;width:95.4px;height:11.4px;background:#fff;border:0.700px solid #b4b4b4;box-sizing:border-box;border-radius:1.500px;"></div><div style="left:998.5px;top:344.7px;width:5px;height:0.6px;background:#c4c4c4;"></div><span class="t" style="left:822.6px;top:354.75px;font-size:7.5px;color:#2a2a2a;letter-spacing:0.39px;">contentDescription</span><div style="left:899px;top:353.7px;width:95.4px;height:11.4px;background:#fff;border:0.700px solid #b4b4b4;box-sizing:border-box;border-radius:1.500px;"></div><div style="left:998.5px;top:359.1px;width:5px;height:0.6px;background:#c4c4c4;"></div><svg style="position:absolute;left:823px;top:372.3px" width="6.6" height="6.6" viewBox="0 0 6.6 6.6"><path d="M0.600 1.500h5.400l-2.700 3.900z" fill="#9a9a9a"/></svg><span class="t" style="left:832px;top:370.75px;font-size:7.5px;color:#2a2a2a;letter-spacing:0.43px;">textAppearance</span><div style="left:899px;top:369.3px;width:107.8px;height:12.2px;background:#fff;border:0.700px solid #b4b4b4;box-sizing:border-box;border-radius:1.500px;"></div><div style="left:994.5px;top:369.3px;width:12.3px;height:12.2px;background:#b2b2b2;border-radius:0 1.500px 1.500px 0;"></div><svg style="position:absolute;left:998.3px;top:374.1px" width="5" height="3.6" viewBox="0 0 5 3.6"><path d="M0.300 0.300h4.400l-2.200 3z" fill="#f2f2f2"/></svg><span class="t" style="left:903px;top:370.69px;font-size:7.6px;color:#8a8a8a;letter-spacing:0.29px;">Material.Medium.Inverse</span><span class="t" style="left:822.6px;top:387.95px;font-size:7.5px;color:#2a2a2a;letter-spacing:0.39px;">fontFamily</span><div style="left:899px;top:386.5px;width:107.8px;height:12.2px;background:#fff;border:0.700px solid #b4b4b4;box-sizing:border-box;border-radius:1.500px;"></div><div style="left:994.5px;top:386.5px;width:12.3px;height:12.2px;background:#b2b2b2;border-radius:0 1.500px 1.500px 0;"></div><svg style="position:absolute;left:998.3px;top:391.3px" width="5" height="3.6" viewBox="0 0 5 3.6"><path d="M0.300 0.300h4.400l-2.200 3z" fill="#f2f2f2"/></svg><span class="t" style="left:903px;top:387.89px;font-size:7.6px;color:#8a8a8a;letter-spacing:0.26px;">sans-serif</span><span class="t" style="left:822.6px;top:404.85px;font-size:7.5px;color:#2a2a2a;letter-spacing:0.4px;">typeface</span><div style="left:899px;top:403.4px;width:107.8px;height:12.2px;background:#fff;border:0.700px solid #b4b4b4;box-sizing:border-box;border-radius:1.500px;"></div><div style="left:994.5px;top:403.4px;width:12.3px;height:12.2px;background:#b2b2b2;border-radius:0 1.500px 1.500px 0;"></div><svg style="position:absolute;left:998.3px;top:408.2px" width="5" height="3.6" viewBox="0 0 5 3.6"><path d="M0.300 0.300h4.400l-2.200 3z" fill="#f2f2f2"/></svg><span class="t" style="left:903px;top:404.79px;font-size:7.6px;color:#8a8a8a;letter-spacing:0.33px;">none</span><span class="t" style="left:822.6px;top:422.05px;font-size:7.5px;color:#2a2a2a;letter-spacing:0.38px;">textSize</span><div style="left:899px;top:420.6px;width:95.4px;height:12.2px;background:#fff;border:0.700px solid #b4b4b4;box-sizing:border-box;border-radius:1.500px;"></div><div style="left:982.1px;top:420.6px;width:12.3px;height:12.2px;background:#b2b2b2;border-radius:0 1.500px 1.500px 0;"></div><svg style="position:absolute;left:985.9px;top:425.4px" width="5" height="3.6" viewBox="0 0 5 3.6"><path d="M0.300 0.300h4.400l-2.200 3z" fill="#f2f2f2"/></svg><span class="t" style="left:903px;top:421.99px;font-size:7.6px;color:#8a8a8a;letter-spacing:0.33px;">18sp</span><div style="left:998.5px;top:426.4px;width:5px;height:0.6px;background:#c4c4c4;"></div><span class="t" style="left:822.6px;top:439.15px;font-size:7.5px;color:#2a2a2a;letter-spacing:0.4px;">lineSpacingExtra</span><div style="left:899px;top:437.7px;width:95.4px;height:12.2px;background:#fff;border:0.700px solid #b4b4b4;box-sizing:border-box;border-radius:1.500px;"></div><div style="left:982.1px;top:437.7px;width:12.3px;height:12.2px;background:#b2b2b2;border-radius:0 1.500px 1.500px 0;"></div><svg style="position:absolute;left:985.9px;top:442.5px" width="5" height="3.6" viewBox="0 0 5 3.6"><path d="M0.300 0.300h4.400l-2.200 3z" fill="#f2f2f2"/></svg><span class="t" style="left:903px;top:439.09px;font-size:7.6px;color:#8a8a8a;letter-spacing:0.33px;">none</span><div style="left:998.5px;top:443.5px;width:5px;height:0.6px;background:#c4c4c4;"></div><span class="t" style="left:822.6px;top:454.65px;font-size:7.5px;color:#2a2a2a;letter-spacing:0.38px;">textColor</span><div style="left:899px;top:453.6px;width:95.4px;height:11.4px;background:#fff;border:0.700px solid #b4b4b4;box-sizing:border-box;border-radius:1.500px;"></div><div style="left:998.5px;top:459px;width:5px;height:0.6px;background:#c4c4c4;"></div><span class="t" style="left:822.6px;top:471.15px;font-size:7.5px;color:#2a2a2a;letter-spacing:0.36px;">textStyle</span><span class="t" style="left:902.5px;top:470.22px;font-size:9px;color:#222;font-weight:bold;">B</span><span class="t" style="left:918.5px;top:470.22px;font-size:9px;color:#222;font-weight:bold;font-style:italic;">I</span><span class="t" style="left:931.5px;top:470.53px;font-size:8.5px;color:#222;font-weight:bold;letter-spacing:0.48px;">Tr</span><span class="t" style="left:822.6px;top:489.35px;font-size:7.5px;color:#2a2a2a;letter-spacing:0.4px;">textAlignment</span><svg style="position:absolute;left:901.5px;top:489.5px" width="10" height="9" viewBox="0 0 10 9"><rect x="1.5" y="0.5" width="8" height="1.100" fill="#333"/><rect x="1.5" y="2.8" width="5.5" height="1.100" fill="#333"/><rect x="1.5" y="5.1" width="8" height="1.100" fill="#333"/><rect x="1.5" y="7.4" width="5.5" height="1.100" fill="#333"/><rect x="0" y="0" width="0.900" height="9" fill="#333"/></svg><svg style="position:absolute;left:916.6px;top:489.5px" width="10" height="9" viewBox="0 0 10 9"><rect x="0.5" y="0.5" width="8" height="1.100" fill="#333"/><rect x="0.5" y="2.8" width="5.5" height="1.100" fill="#333"/><rect x="0.5" y="5.1" width="8" height="1.100" fill="#333"/><rect x="0.5" y="7.4" width="5.5" height="1.100" fill="#333"/></svg><svg style="position:absolute;left:931.7px;top:489.5px" width="10" height="9" viewBox="0 0 10 9"><rect x="0.5" y="0.5" width="8" height="1.100" fill="#333"/><rect x="1.75" y="2.8" width="5.5" height="1.100" fill="#333"/><rect x="0.5" y="5.1" width="8" height="1.100" fill="#333"/><rect x="1.75" y="7.4" width="5.5" height="1.100" fill="#333"/></svg><svg style="position:absolute;left:946.8px;top:489.5px" width="10" height="9" viewBox="0 0 10 9"><rect x="0.5" y="0.5" width="8" height="1.100" fill="#333"/><rect x="3" y="2.8" width="5.5" height="1.100" fill="#333"/><rect x="0.5" y="5.1" width="8" height="1.100" fill="#333"/><rect x="3" y="7.4" width="5.5" height="1.100" fill="#333"/></svg><svg style="position:absolute;left:961.9px;top:489.5px" width="10" height="9" viewBox="0 0 10 9"><rect x="0.5" y="0.5" width="8" height="1.100" fill="#333"/><rect x="3" y="2.8" width="5.5" height="1.100" fill="#333"/><rect x="0.5" y="5.1" width="8" height="1.100" fill="#333"/><rect x="3" y="7.4" width="5.5" height="1.100" fill="#333"/><rect x="8.900" y="0" width="0.900" height="9" fill="#333"/></svg><div style="left:822px;top:506.7px;width:184px;height:0.6px;background:#d9d9d9;"></div><span class="t" style="left:822.6px;top:510.95px;font-size:7.5px;color:#2a2a2a;font-weight:bold;letter-spacing:0.4px;">Favorite Attributes</span><span class="t" style="left:822.6px;top:524.35px;font-size:7.5px;color:#2a2a2a;letter-spacing:0.29px;">visibility</span><div style="left:899px;top:522.9px;width:107.8px;height:12.2px;background:#fff;border:0.700px solid #b4b4b4;box-sizing:border-box;border-radius:1.500px;"></div><div style="left:994.5px;top:522.9px;width:12.3px;height:12.2px;background:#b2b2b2;border-radius:0 1.500px 1.500px 0;"></div><svg style="position:absolute;left:998.3px;top:527.7px" width="5" height="3.6" viewBox="0 0 5 3.6"><path d="M0.300 0.300h4.400l-2.200 3z" fill="#f2f2f2"/></svg><span class="t" style="left:903px;top:524.29px;font-size:7.6px;color:#8a8a8a;letter-spacing:0.33px;">none</span><div style="left:822px;top:540.6px;width:184px;height:0.6px;background:#d9d9d9;"></div><span class="t" style="left:822.6px;top:544.95px;font-size:7.5px;color:#2a2a2a;font-weight:bold;letter-spacing:0.44px;">LinearLayout_layout</span><span class="t" style="left:822.6px;top:557.35px;font-size:7.5px;color:#2a2a2a;letter-spacing:0.4px;">layout_weight</span><div style="left:899px;top:556.3px;width:107.8px;height:11.4px;background:#fff;border:0.700px solid #b4b4b4;box-sizing:border-box;border-radius:1.500px;"></div><div style="left:822px;top:572.3px;width:184px;height:0.6px;background:#d9d9d9;"></div><span class="t" style="left:824px;top:599.87px;font-size:7.3px;color:#2a2ad0;letter-spacing:0.51px;text-decoration:underline;">View all attributes</span><svg style="position:absolute;left:893px;top:600.5px" width="10" height="8" viewBox="0 0 10 8"><path d="M0.500 5.500h6M9.500 2.500h-6" stroke="#3b82c4" stroke-width="0.900"/><path d="M6.500 0.500l3 2-3 2zM3.500 3.500l-3 2 3 2z" fill="#3b82c4"/></svg><div style="left:0px;top:126px;width:12.4px;height:533px;background:#e6e6e6;"></div><div style="left:11.8px;top:126px;width:0.7px;height:533px;background:#cfcfcf;"></div><div style="left:0px;top:126.5px;width:11.8px;height:51px;background:#bcbcbc;"></div><span class="t" style="left:-10.85px;top:142.18px;width:33.5px;height:8.43px;font-size:6.8px;line-height:8.43px;color:#333;transform:rotate(-90deg);text-align:center;letter-spacing:0.08px;">1: Project</span><div style="left:2.9px;top:164px;width:6px;height:6.5px;background:#8db33a;border-radius:1px;"></div><span class="t" style="left:-14.35px;top:198.18px;width:40.5px;height:8.43px;font-size:6.8px;line-height:8.43px;color:#444;transform:rotate(-90deg);text-align:center;letter-spacing:0.08px;">Z: Structure</span><svg style="position:absolute;left:1.9px;top:222.5px" width="8" height="8" viewBox="0 0 8 8"><path d="M1 4l5-3M1 4l5 3" stroke="#888" stroke-width="0.900"/><circle cx="1.500" cy="4" r="1.200" fill="#d66"/><circle cx="6.200" cy="1.200" r="1.200" fill="#888"/><circle cx="6.200" cy="6.800" r="1.200" fill="#888"/></svg><span class="t" style="left:-10.1px;top:253.98px;width:32px;height:8.43px;font-size:6.8px;line-height:8.43px;color:#444;transform:rotate(-90deg);text-align:center;letter-spacing:0.05px;">Captures</span><div style="left:2.5px;top:275px;width:6.8px;height:6.8px;background:#9aa3ab;border-radius:50%;"></div><span class="t" style="left:-17.6px;top:528.78px;width:47px;height:8.43px;font-size:6.8px;line-height:8.43px;color:#444;transform:rotate(-90deg);text-align:center;letter-spacing:0.11px;">Build Variants</span><svg style="position:absolute;left:1.6px;top:556.42px" width="8.5" height="8.16" viewBox="0 0 10 9.6"><path d="M1.800 3.600a3.200 3.200 0 0 1 6.400 0z" fill="#9bc53d"/><rect x="1.800" y="4.100" width="6.400" height="4.600" rx="0.700" fill="#9bc53d"/><rect x="0.300" y="4.100" width="1.100" height="3.600" rx="0.500" fill="#9bc53d"/><rect x="8.600" y="4.100" width="1.100" height="3.600" rx="0.500" fill="#9bc53d"/></svg><div style="left:1009.8px;top:126px;width:14.2px;height:533px;background:#e6e6e6;"></div><div style="left:1009.6px;top:126px;width:0.7px;height:520px;background:#cfcfcf;"></div><svg style="position:absolute;left:1012.8px;top:133.1px" width="8.8" height="8.8" viewBox="0 0 8.8 8.8"><circle cx="4.4" cy="4.4" r="3.600" fill="#fff" stroke="#3fae49" stroke-width="1.300"/><path d="M3 2.600v3.600l3.200-1.800z" fill="#3fae49"/></svg><span class="t" style="left:1005.2px;top:150.28px;width:24px;height:8.43px;font-size:6.8px;line-height:8.43px;color:#333;transform:rotate(90deg);text-align:center;letter-spacing:-0.07px;">Gradle</span><div style="left:1013.8px;top:556.5px;width:6px;height:7px;background:#f4f4f4;border:0.700px solid #888;box-sizing:border-box;border-radius:1px;"></div><span class="t" style="left:984.45px;top:591.08px;width:65.5px;height:8.43px;font-size:6.8px;line-height:8.43px;color:#333;transform:rotate(90deg);text-align:center;letter-spacing:0.03px;">Device File Explorer</span><div style="left:0px;top:633.4px;width:1024px;height:25.6px;background:#ececec;"></div><div style="left:0px;top:633.4px;width:1024px;height:0.7px;background:#cfcfcf;"></div><div style="left:184.5px;top:637.4px;width:7.5px;height:7px;background:#6b6b6b;border-radius:0.800px;"></div><div style="left:186px;top:639.9px;width:3px;height:1.2px;background:#eee;"></div><span class="t" style="left:195px;top:636.81px;font-size:6.6px;color:#333;letter-spacing:0.26px;">Terminal</span><div style="left:890.5px;top:636.9px;width:8px;height:8px;background:#8fd08a;border-radius:50%;"></div><span class="t" style="left:902px;top:636.81px;font-size:6.6px;color:#333;letter-spacing:0.14px;">Event Log</span><div style="left:947.5px;top:637.4px;width:7px;height:7px;background:#e8f0ee;border:0.800px solid #7a9a9a;box-sizing:border-box;"></div><span class="t" style="left:957.5px;top:636.81px;font-size:6.6px;color:#333;letter-spacing:0.12px;">Gradle Console</span><span class="t" style="left:169.8px;top:649.03px;font-size:6.4px;color:#333;letter-spacing:0.3px;">f the Kotlin plugin is available. Install (today 11:28 AM)</span><span class="t" style="left:849px;top:649.03px;font-size:6.4px;color:#333;letter-spacing:0.29px;">1:25</span><span class="t" style="left:879.6px;top:649.03px;font-size:6.4px;color:#333;letter-spacing:0.37px;">n/a</span><span class="t" style="left:898.7px;top:649.03px;font-size:6.4px;color:#9a9a9a;letter-spacing:0.26px;">Context: &lt;no context&gt;</span><div style="left:172px;top:633.4px;width:852px;height:0.7px;background:#cfcfcf;"></div><svg style="position:absolute;left:0px;top:556px" width="170.3" height="103.5" viewBox="0 0 148 90" preserveAspectRatio="none"><defs><filter id="wb0" x="-10%" y="-10%" width="120%" height="120%"><feGaussianBlur stdDeviation="0.9"/></filter><linearGradient id="wd0" x1="0" x2="1" y1="0" y2="0"><stop offset="0" stop-color="#d6d3cc"/><stop offset="0.14" stop-color="#ececeb"/><stop offset="1" stop-color="#e5e4e1"/></linearGradient><linearGradient id="wh0" x1="0" x2="0" y1="0" y2="1"><stop offset="0" stop-color="#8e604b"/><stop offset="1" stop-color="#6e4838"/></linearGradient></defs><rect x="0" y="0" width="148" height="90" fill="#d4d1ca"/><g filter="url(#wb0)"><g transform="translate(7.1 3.3) scale(0.95)"><rect x="-12" y="-8" width="100" height="110" fill="#d5d2cb"/><rect x="79" y="-8" width="49" height="110" fill="url(#wd0)"/><rect x="127" y="-8" width="40" height="110" fill="#ccc8be"/><rect x="124.500" y="-8" width="3" height="110" fill="#f3f2ef"/><rect x="11.500" y="-8" width="53" height="22.500" fill="#efede8"/><rect x="15" y="-8" width="46.500" height="19.500" fill="#4a4c4f"/><path d="M19 8l8-4 26 1 6 4z" fill="#8d9196"/><rect x="30" y="8" width="22" height="1.500" fill="#7a4a4a"/><rect x="5.500" y="-8" width="2.200" height="24" fill="#3a3532"/><rect x="-12" y="-8" width="12.500" height="20" fill="#2e2c2b"/><rect x="-12" y="33" width="21.500" height="70" fill="#2a2423"/><rect x="-12" y="40" width="16" height="10" fill="#4a4745"/><rect x="-12" y="70" width="16" height="14" fill="#6b2a2c"/><rect x="17.500" y="28.500" width="11.500" height="3" fill="#eee8e2"/><rect x="20.500" y="31.500" width="6.500" height="17" fill="#7a3038"/><rect x="2" y="48" width="26.500" height="55" rx="2" fill="#dfe0e5"/><path d="M26 102V25q0-8 8-8h58q8 0 8 8V102z" fill="#282c35"/><path d="M31 102V30q0-7 6-8v80z" fill="#1f222a"/></g><g transform="rotate(0 74.5 52.3) translate(74.5 12.3) scale(0.96 1) translate(-74.5 -12.3)"><path d="M23.5 95c1-20 8-26 26-30l10-4h24l10 4c18 4 26 10 30 30z" fill="#88c4b0"/><path d="M30.5 95c4-14 10-20 22-24" fill="none" stroke="#79b3a0" stroke-width="1.500"/><path d="M56.5 60c0 24 6 31 18 31s18-7 18-31z" fill="#263049"/><path d="M61 58c0 20 5 25 13.500 25s13.500-5 13.500-25z" fill="#d9a797"/><ellipse cx="56.5" cy="46.3" rx="2.200" ry="4.500" fill="#dba594"/><ellipse cx="92.5" cy="46.3" rx="2.200" ry="4.500" fill="#dba594"/><path d="M57 38.3c0-16 8-22 17.500-22s17.500 6 17.500 22v14c0 16-8 24-17.500 24s-17.500-8-17.500-24z" fill="#e6b5a8"/><ellipse cx="74.5" cy="33.3" rx="10" ry="8" fill="#efc4b6"/><path d="M57 52.3c1 8 3 10 7 11c3-3 7-4 10.500-4s7.500 1 10.500 4c4-1 6-3 7-11l0.500 10c0 16-8 22-18 22s-18-6-18-22z" fill="#86604f"/><ellipse cx="74.5" cy="75.3" rx="9" ry="7" fill="#7a5544"/><ellipse cx="74.5" cy="64.8" rx="5" ry="1.600" fill="#c4958a"/><path d="M74.5 48.3l-2.500 9h5.500z" fill="#dca595"/><ellipse cx="66.5" cy="43.3" rx="4.200" ry="1.600" fill="#5e4038"/><ellipse cx="82.5" cy="43.3" rx="4.200" ry="1.600" fill="#5e4038"/><path d="M62 39.8h8M79 39.8h8" stroke="#8a6252" stroke-width="1.200"/><path d="M56.5 43.3c-2-10-2-20 4-26 5-6 22-7 28-1 6 6 6 16 4 27l-2.500-9c-1-5-3-8-6-9-6 2-14 2-20 0-3 1-4 4-5 9z" fill="url(#wh0)"/></g></g></svg><svg style="position:absolute;left:964px;top:643.8px" width="60" height="16" viewBox="0 0 60 16"><text x="58.500" y="13.300" text-anchor="end" font-family="Liberation Sans, sans-serif" font-size="12.200" font-style="italic" font-weight="bold" fill="#fff" stroke="#000" stroke-width="1.200" stroke-linejoin="round" paint-order="stroke" letter-spacing="-0.150">00:03:03</text></svg></div></div>
<div style="left:0;top:659px;width:1024px;height:576px;overflow:hidden;"><div class="fb" style="left:0;top:-659px;width:1024px;height:1235px;"><div style="left:-6px;top:653px;width:1036px;height:588px;background:#ececec;"></div><div class="fr" style="left:0;top:0;width:1024px;height:1235px;overflow:hidden;"><div style="left:0px;top:659px;width:1024px;height:576px;background:#ececec;"></div><div style="left:0px;top:659px;width:1024px;height:14px;background:#f7cbbf;"></div><div style="left:0px;top:672.2px;width:1024px;height:1.1px;background:#a8806f;"></div><div style="left:0px;top:659px;width:1024px;height:0.8px;background:#8f7466;"></div><svg style="position:absolute;left:13px;top:660.6px" width="9" height="10" viewBox="0 0 18 20"><path fill="#2a1d1a" d="M12.2 0.3c0.1 1.2-0.4 2.3-1.1 3.1-0.8 0.9-1.9 1.5-3 1.4-0.1-1.1 0.4-2.3 1.1-3C10 0.9 11.200 0.400 12.2 0.3zM16 6.8c-1.300 0.800-2 2-2 3.400 0 1.700 1 3.100 2.500 3.700-0.400 1.200-1 2.300-1.700 3.300-0.900 1.300-1.800 2.500-3.200 2.500-1.300 0-1.700-0.800-3.300-0.800-1.500 0-2 0.800-3.300 0.800-1.300 0-2.300-1.200-3.200-2.500C0.100 14.600-0.600 10.800 0.900 8.300c1-1.700 2.600-2.700 4.300-2.700 1.400 0 2.500 0.900 3.400 0.900 0.900 0 2.200-1 3.900-0.900 1.300 0.100 2.600 0.600 3.500 1.200z"/></svg><span class="t" style="left:33px;top:661.05px;font-size:8.3px;color:#3a2019;font-weight:bold;letter-spacing:0.18px;">Android Studio</span><span class="t" style="left:107.5px;top:661.05px;font-size:8.3px;color:#3a2019;letter-spacing:-0.09px;">File</span><span class="t" style="left:132px;top:661.05px;font-size:8.3px;color:#3a2019;letter-spacing:0.17px;">Edit</span><span class="t" style="left:158.5px;top:661.05px;font-size:8.3px;color:#3a2019;letter-spacing:0.29px;">View</span><span class="t" style="left:189px;top:661.05px;font-size:8.3px;color:#3a2019;letter-spacing:0.16px;">Navigate</span><span class="t" style="left:234.5px;top:661.05px;font-size:8.3px;color:#3a2019;letter-spacing:0.29px;">Code</span><span class="t" style="left:267px;top:661.05px;font-size:8.3px;color:#3a2019;letter-spacing:0.21px;">Analyze</span><span class="t" style="left:308.5px;top:661.05px;font-size:8.3px;color:#3a2019;letter-spacing:0.27px;">Refactor</span><span class="t" style="left:353px;top:661.05px;font-size:8.3px;color:#3a2019;letter-spacing:0.21px;">Build</span><span class="t" style="left:384px;top:661.05px;font-size:8.3px;color:#3a2019;letter-spacing:0.09px;">Run</span><span class="t" style="left:411px;top:661.05px;font-size:8.3px;color:#3a2019;letter-spacing:0.42px;">Tools</span><span class="t" style="left:443.5px;top:661.05px;font-size:8.3px;color:#3a2019;letter-spacing:-0.02px;">VCS</span><span class="t" style="left:472px;top:661.05px;font-size:8.3px;color:#3a2019;letter-spacing:0.08px;">Window</span><span class="t" style="left:514px;top:661.05px;font-size:8.3px;color:#3a2019;letter-spacing:0.23px;">Help</span><svg style="position:absolute;left:904.5px;top:662px" width="11" height="8" viewBox="0 0 11 8"><rect x="0.5" y="0.6" width="7.4" height="6.600" rx="0.8" fill="none" stroke="#3a2420" stroke-width="0.9"/><circle cx="4.2" cy="3.900" r="1.4" fill="#3a2420"/><path d="M8.2 3.900L10.5 1.800V6Z" fill="none" stroke="#3a2420" stroke-width="0.8"/></svg><svg style="position:absolute;left:925px;top:661.7px" width="9" height="9" viewBox="0 0 9 9"><circle cx="3.600" cy="3.600" r="2.700" fill="none" stroke="#3a2420" stroke-width="1"/><path d="M5.600 5.600L8.400 8.400" stroke="#3a2420" stroke-width="1.2"/></svg><svg style="position:absolute;left:945.5px;top:662px" width="8" height="8" viewBox="0 0 8 8"><path d="M4 1.200L7.400 5H0.600Z M0.600 6H7.400V7.200H0.600Z" fill="#3a2420"/></svg><div style="left:963.6px;top:665.1px;width:2px;height:2px;background:#3a2420;border-radius:50%;"></div><div style="left:967.1px;top:665.1px;width:2px;height:2px;background:#3a2420;border-radius:50%;"></div><div style="left:970.6px;top:665.1px;width:2px;height:2px;background:#3a2420;border-radius:50%;"></div><div style="left:981.8px;top:661.4px;width:9.2px;height:9.2px;background:radial-gradient(circle at 50% 75%,#a78cc0 0,#5c2f7c 45%,#24102f 100%);border-radius:50%;"></div><div style="left:998px;top:663px;width:11px;height:1px;background:#dcbab2;"></div><div style="left:998px;top:665.5px;width:11px;height:1px;background:#dcbab2;"></div><div style="left:998px;top:668px;width:11px;height:1px;background:#dcbab2;"></div><div style="left:0px;top:673px;width:1024px;height:14px;background:linear-gradient(#ebebeb,#dcdcdc);"></div><div style="left:0px;top:686.5px;width:1024px;height:0.8px;background:#c4c4c4;"></div><div style="left:5.2px;top:676px;width:8px;height:8px;background:#ee4f5d;border-radius:50%;"></div><div style="left:17.2px;top:676px;width:8px;height:8px;background:#f6b83f;border-radius:50%;"></div><div style="left:29.2px;top:676px;width:8px;height:8px;background:#3fc84f;border-radius:50%;"></div><div style="left:375px;top:675.6px;width:5.6px;height:7.4px;background:#fdfdfd;border-radius:0.6px;box-shadow:0 0 0.6px #999;"></div><span class="t" style="left:382px;top:674.89px;font-size:7.6px;color:#4a4a4a;letter-spacing:0.38px;">MainActivity.kt - Smack - [~/Desktop/Smack] - Android Studio 3.0 Beta 2</span><div style="left:0px;top:687.3px;width:1024px;height:15px;background:#ececec;"></div><svg style="position:absolute;left:7.4px;top:690.8px" width="9.2" height="8.6" viewBox="0 0 9.2 8.6"><path d="M0.3 1.2h3.4l0.9 1h4.1v5.300h-8.4z" fill="#a9b4bc"/><rect x="5.6" y="5" width="3.4" height="3.400" fill="#40b6e0"/></svg><span class="t" style="left:18px;top:690.54px;font-size:7.2px;color:#2e2e2e;font-weight:bold;letter-spacing:-0.44px;">Smack</span><svg style="position:absolute;left:42.2px;top:689px" width="4" height="12" viewBox="0 0 4 12"><path d="M0.500 0.500l3 5.500-3 5.500" fill="none" stroke="#a8a8a8" stroke-width="0.700"/></svg><svg style="position:absolute;left:48.4px;top:690.8px" width="9.2" height="8.6" viewBox="0 0 9.2 8.6"><path d="M0.3 1.2h3.4l0.9 1h4.1v5.300h-8.4z" fill="#a9b4bc"/><rect x="5.6" y="5" width="3.4" height="3.400" fill="#40b6e0"/></svg><span class="t" style="left:59px;top:690.54px;font-size:7.2px;color:#2e2e2e;font-weight:bold;letter-spacing:-0.27px;">app</span><svg style="position:absolute;left:74.2px;top:689px" width="4" height="12" viewBox="0 0 4 12"><path d="M0.500 0.500l3 5.500-3 5.500" fill="none" stroke="#a8a8a8" stroke-width="0.700"/></svg><svg style="position:absolute;left:80.4px;top:690.8px" width="9.2" height="8.6" viewBox="0 0 9.2 8.6"><path d="M0.3 1.2h3.4l0.9 1h4.1v5.300h-8.4z" fill="#a9b4bc"/></svg><span class="t" style="left:91px;top:690.54px;font-size:7.2px;color:#2e2e2e;letter-spacing:-0.2px;">src</span><svg style="position:absolute;left:103.2px;top:689px" width="4" height="12" viewBox="0 0 4 12"><path d="M0.500 0.500l3 5.500-3 5.500" fill="none" stroke="#a8a8a8" stroke-width="0.700"/></svg><svg style="position:absolute;left:108.9px;top:690.8px" width="9.2" height="8.6" viewBox="0 0 9.2 8.6"><path d="M0.3 1.2h3.4l0.9 1h4.1v5.300h-8.4z" fill="#a9b4bc"/></svg><span class="t" style="left:119.5px;top:690.54px;font-size:7.2px;color:#2e2e2e;letter-spacing:-0.03px;">main</span><svg style="position:absolute;left:138.2px;top:689px" width="4" height="12" viewBox="0 0 4 12"><path d="M0.500 0.500l3 5.500-3 5.500" fill="none" stroke="#a8a8a8" stroke-width="0.700"/></svg><svg style="position:absolute;left:143.4px;top:690.8px" width="9.2" height="8.6" viewBox="0 0 9.2 8.6"><path d="M0.3 1.2h3.4l0.9 1h4.1v5.300h-8.4z" fill="#7ec3e6"/></svg><span class="t" style="left:154px;top:690.54px;font-size:7.2px;color:#2e2e2e;letter-spacing:-0.05px;">java</span><svg style="position:absolute;left:170.2px;top:689px" width="4" height="12" viewBox="0 0 4 12"><path d="M0.500 0.500l3 5.500-3 5.500" fill="none" stroke="#a8a8a8" stroke-width="0.700"/></svg><svg style="position:absolute;left:176.4px;top:690.8px" width="9.2" height="8.6" viewBox="0 0 9.2 8.6"><path d="M0.3 1.2h3.4l0.9 1h4.1v5.300h-8.4z" fill="#b7bcc0"/><rect x="1.4" y="3.6" width="2.6" height="2.4" fill="#eef0f1"/></svg><span class="t" style="left:187px;top:690.54px;font-size:7.2px;color:#2e2e2e;letter-spacing:-0.2px;">com</span><svg style="position:absolute;left:203.2px;top:689px" width="4" height="12" viewBox="0 0 4 12"><path d="M0.500 0.500l3 5.500-3 5.500" fill="none" stroke="#a8a8a8" stroke-width="0.700"/></svg><svg style="position:absolute;left:208.9px;top:690.8px" width="9.2" height="8.6" viewBox="0 0 9.2 8.6"><path d="M0.3 1.2h3.4l0.9 1h4.1v5.300h-8.4z" fill="#b7bcc0"/><rect x="1.4" y="3.6" width="2.6" height="2.4" fill="#eef0f1"/></svg><span class="t" style="left:219.5px;top:690.54px;font-size:7.2px;color:#2e2e2e;letter-spacing:-0.03px;">example</span><svg style="position:absolute;left:249.7px;top:689px" width="4" height="12" viewBox="0 0 4 12"><path d="M0.500 0.500l3 5.500-3 5.500" fill="none" stroke="#a8a8a8" stroke-width="0.700"/></svg><svg style="position:absolute;left:254.8px;top:690.8px" width="9.2" height="8.6" viewBox="0 0 9.2 8.6"><path d="M0.3 1.2h3.4l0.9 1h4.1v5.300h-8.4z" fill="#b7bcc0"/><rect x="1.4" y="3.6" width="2.6" height="2.4" fill="#eef0f1"/></svg><span class="t" style="left:265.4px;top:690.54px;font-size:7.2px;color:#2e2e2e;letter-spacing:-0.02px;">jonnyb</span><svg style="position:absolute;left:289.7px;top:689px" width="4" height="12" viewBox="0 0 4 12"><path d="M0.500 0.500l3 5.500-3 5.500" fill="none" stroke="#a8a8a8" stroke-width="0.700"/></svg><svg style="position:absolute;left:295.8px;top:690.8px" width="9.2" height="8.6" viewBox="0 0 9.2 8.6"><path d="M0.3 1.2h3.4l0.9 1h4.1v5.300h-8.4z" fill="#b7bcc0"/><rect x="1.4" y="3.6" width="2.6" height="2.4" fill="#eef0f1"/></svg><span class="t" style="left:306.4px;top:690.54px;font-size:7.2px;color:#2e2e2e;letter-spacing:-0.04px;">smack</span><svg style="position:absolute;left:330.2px;top:689px" width="4" height="12" viewBox="0 0 4 12"><path d="M0.500 0.500l3 5.500-3 5.500" fill="none" stroke="#a8a8a8" stroke-width="0.700"/></svg><svg style="position:absolute;left:336px;top:690.8px" width="9.2" height="8.6" viewBox="0 0 9.2 8.6"><path d="M0.3 1.2h3.4l0.9 1h4.1v5.300h-8.4z" fill="#b7bcc0"/><rect x="1.4" y="3.6" width="2.6" height="2.4" fill="#eef0f1"/></svg><span class="t" style="left:346.6px;top:690.54px;font-size:7.2px;color:#2e2e2e;letter-spacing:-0.11px;">Controller</span><svg style="position:absolute;left:379.9px;top:689px" width="4" height="12" viewBox="0 0 4 12"><path d="M0.500 0.500l3 5.500-3 5.500" fill="none" stroke="#a8a8a8" stroke-width="0.700"/></svg><svg style="position:absolute;left:385.8px;top:690.4px" width="9.2" height="10" viewBox="0 0 9.2 10"><circle cx="4.2" cy="4.2" r="3.500" fill="#58a9c6"/><path d="M5.5 3.100a1.800 1.800 0 1 0 0 2.300" stroke="#fff" stroke-width="1" fill="none"/><path d="M5 6h3.600v3.400h-3.600z" fill="#5b8fd0"/><path d="M5 9.400l3.600-3.400h-3.600z" fill="#7fb3e0"/></svg><span class="t" style="left:396.4px;top:690.54px;font-size:7.2px;color:#2e2e2e;letter-spacing:0.08px;">MainActivity.kt</span><svg style="position:absolute;left:446.2px;top:689px" width="4" height="12" viewBox="0 0 4 12"><path d="M0.500 0.500l3 5.500-3 5.500" fill="none" stroke="#a8a8a8" stroke-width="0.700"/></svg><svg style="position:absolute;left:710px;top:689.1px" width="10" height="10" viewBox="0 0 10 10"><path d="M1 2.500l3-2 3 2.200-1.200 1.300-1.300-0.800z" fill="#4c9e4c"/><path d="M4.600 4l4.400 5" stroke="#4c9e4c" stroke-width="1.500"/></svg><div style="left:727px;top:688.5px;width:35px;height:11.2px;background:#fafafa;border-radius:2px;box-shadow:0 0 0.5px #aaa;"></div><svg style="position:absolute;left:730px;top:690.5px" width="9" height="8" viewBox="0 0 9 8"><rect x="0.500" y="1" width="7.500" height="5.500" fill="none" stroke="#b9a24a" stroke-width="1"/><rect x="5" y="4" width="3.500" height="3.500" fill="#9bc53d"/></svg><span class="t" style="left:740.6px;top:689.76px;font-size:7px;color:#333;letter-spacing:-0.06px;">app</span><svg style="position:absolute;left:754px;top:692.6px" width="5" height="4" viewBox="0 0 5 4"><path d="M0.300 0.500h4.400l-2.200 3z" fill="#777"/></svg><svg style="position:absolute;left:768.5px;top:689.1px" width="9" height="10" viewBox="0 0 9 10"><path d="M0.800 0.600v8.800l7.600-4.400z" fill="#3aa544"/></svg><svg style="position:absolute;left:785px;top:689.6px" width="6" height="9" viewBox="0 0 6 9"><path d="M3.500 0.300l-3 4.700h2.200l-0.700 3.700 3.300-5h-2.300z" fill="#c5c5c5"/></svg><svg style="position:absolute;left:798.5px;top:689.1px" width="9" height="10" viewBox="0 0 9 10"><ellipse cx="4.500" cy="5.800" rx="3" ry="3.600" fill="#5a9a50"/><circle cx="4.500" cy="2.200" r="1.700" fill="#5a9a50"/><path d="M0.500 4h8M0.500 7h8" stroke="#5a9a50" stroke-width="0.800"/></svg><svg style="position:absolute;left:813.5px;top:689.1px" width="9" height="10" viewBox="0 0 9 10"><rect x="1" y="5" width="2" height="4.500" fill="#c2c2c2"/><rect x="3.800" y="1" width="2" height="8.500" fill="#c2c2c2"/><rect x="6.500" y="4" width="2" height="5.500" fill="#d2d2d2"/></svg><svg style="position:absolute;left:829.5px;top:689.1px" width="9" height="10" viewBox="0 0 9 10"><rect x="1" y="0.600" width="5.500" height="8.800" rx="0.800" fill="none" stroke="#777" stroke-width="1"/><path d="M4.500 4v5.500l4.200-2.700z" fill="#3aa544"/></svg><div style="left:845.4px;top:690.5px;width:7.2px;height:7.2px;background:#bdbdbd;"></div><div style="left:858px;top:688.6px;width:0.8px;height:11px;background:#c9c9c9;"></div><div style="left:923px;top:688.6px;width:0.8px;height:11px;background:#c9c9c9;"></div><div style="left:971px;top:688.6px;width:0.8px;height:11px;background:#c9c9c9;"></div><span class="t" style="left:861px;top:688.65px;font-size:4.6px;color:#555;font-weight:bold;letter-spacing:0.18px;">VCS</span><svg style="position:absolute;left:862.5px;top:693.6px" width="7" height="6" viewBox="0 0 7 6"><path d="M2.500 0h2v2.500h2l-3 3.200-3-3.200h2z" fill="#3b82c4"/></svg><span class="t" style="left:878px;top:688.65px;font-size:4.6px;color:#555;font-weight:bold;letter-spacing:0.18px;">VCS</span><svg style="position:absolute;left:879.5px;top:693.6px" width="7" height="6" viewBox="0 0 7 6"><path d="M2.500 5.700h2v-2.500h2l-3-3.200-3 3.200h2z" fill="#4c9e4c"/></svg><svg style="position:absolute;left:893px;top:689.1px" width="10" height="10" viewBox="0 0 10 10"><rect x="0.600" y="1" width="7" height="5.500" fill="none" stroke="#555" stroke-width="1"/><rect x="5" y="4.500" width="4.500" height="4.500" fill="#5a9a50"/></svg><svg style="position:absolute;left:908px;top:689.6px" width="10" height="9" viewBox="0 0 10 9"><path d="M2.500 3h4a2.400 2.400 0 0 1 0 4.800h-4.500" fill="none" stroke="#6a4aa6" stroke-width="1.500"/><path d="M3.500 0.500l-3 2.500 3 2.500z" fill="#6a4aa6"/></svg><svg style="position:absolute;left:927.5px;top:689.6px" width="11" height="9" viewBox="0 0 11 9"><path d="M1 8a4.500 4.500 0 0 1 9 0" fill="none" stroke="#3b82c4" stroke-width="1.400"/><path d="M5.500 8l2.500-4" stroke="#4c9e4c" stroke-width="1.200"/></svg><svg style="position:absolute;left:943.5px;top:689.1px" width="9" height="10" viewBox="0 0 9 10"><path d="M3.500 0.500h2v4.500h2l-3 3-3-3h2z" fill="#3b82c4"/><rect x="0.500" y="8.300" width="8" height="1.400" fill="#4c9e4c"/></svg><svg style="position:absolute;left:957.5px;top:689.1px" width="9" height="10" viewBox="0 0 9 10"><rect x="1.500" y="0.500" width="5.500" height="9" fill="#9a8fc0"/><rect x="4.500" y="5" width="4" height="4.500" fill="#e09a4a"/><rect x="2.500" y="2" width="3.500" height="1" fill="#fff"/></svg><svg style="position:absolute;left:975.5px;top:689.6px" width="11" height="9" viewBox="0 0 11 9"><path d="M0.500 1h4l1 1.200h5v6.300h-10z" fill="none" stroke="#3b78b4" stroke-width="1.200"/><rect x="5.500" y="4.500" width="3.500" height="3" fill="#3b78b4"/></svg><svg style="position:absolute;left:995px;top:689.06px" width="10.08" height="10.08" viewBox="0 0 9.6 9.6"><circle cx="3.800" cy="3.800" r="2.800" fill="none" stroke="#666" stroke-width="1.100"/><path d="M5.900 5.900L9 9" stroke="#666" stroke-width="1.300"/></svg><svg style="position:absolute;left:1010px;top:688.6px" width="10" height="11" viewBox="0 0 10 11"><rect x="0" y="0" width="10" height="11" fill="#c6c6c6"/><circle cx="5" cy="4" r="2.300" fill="#f2f2f2"/><path d="M1 11a4 4 0 0 1 8 0z" fill="#f2f2f2"/></svg><div style="left:14.3px;top:702.3px;width:215.7px;height:14.8px;background:#e4e4e4;"></div><div style="left:14.3px;top:716.6px;width:215.7px;height:0.7px;background:#c8c8c8;"></div><svg style="position:absolute;left:18.5px;top:705.44px" width="9.5" height="9.12" viewBox="0 0 10 9.6"><path d="M1.800 3.600a3.200 3.200 0 0 1 6.400 0z" fill="#9bc53d"/><rect x="1.800" y="4.100" width="6.400" height="4.600" rx="0.700" fill="#9bc53d"/><rect x="0.300" y="4.100" width="1.100" height="3.600" rx="0.500" fill="#9bc53d"/><rect x="8.600" y="4.100" width="1.100" height="3.600" rx="0.500" fill="#9bc53d"/></svg><span class="t" style="left:31px;top:705.54px;font-size:7.2px;color:#6a6a6a;letter-spacing:-0.19px;">Android</span><svg style="position:absolute;left:121.5px;top:708.7px" width="5" height="4" viewBox="0 0 5 4"><path d="M0.300 0.300h4.400l-2.200 3z" fill="#666"/></svg><svg style="position:absolute;left:170px;top:705.8px" width="8.5" height="8.5" viewBox="0 0 8.5 8.5"><circle cx="4.200" cy="4.200" r="3.400" fill="none" stroke="#777" stroke-width="1"/><path d="M2.700 2.700l3 3M5.700 2.700l-3 3" stroke="#777" stroke-width="0.900"/></svg><svg style="position:absolute;left:183.5px;top:706px" width="8" height="8" viewBox="0 0 8 8"><path d="M4 0.500v7M0.500 4h7" stroke="#888" stroke-width="0.900"/><path d="M4 0l1.300 1.800h-2.600zM4 8l1.300-1.800h-2.600z" fill="#888"/></svg><div style="left:196px;top:705.5px;width:0.8px;height:9px;background:#c9c9c9;"></div><svg style="position:absolute;left:201px;top:705.5px" width="13" height="9" viewBox="0 0 13 9"><circle cx="4.500" cy="4.500" r="2.500" fill="none" stroke="#5a5a5a" stroke-width="1.800" stroke-dasharray="1.300 0.660"/><circle cx="4.500" cy="4.500" r="1.700" fill="none" stroke="#5a5a5a" stroke-width="1.200"/><path d="M10 4l1.500 1.600 1.500-1.600z" fill="#5a5a5a"/></svg><svg style="position:absolute;left:218px;top:705.5px" width="9" height="9" viewBox="0 0 9 9"><path d="M1.500 0.800v7.400" stroke="#5a5a5a" stroke-width="1.200"/><path d="M3 4.500h4.500M3 4.500l2-1.800M3 4.500l2 1.800" stroke="#5a5a5a" stroke-width="0.900" fill="none"/></svg><div style="left:230px;top:702.3px;width:780px;height:15px;background:#e6e6e6;"></div><div style="left:230px;top:702.3px;width:738px;height:15px;background:#d6d6d6;"></div><div style="left:230px;top:716.8px;width:780px;height:0.7px;background:#bdbdbd;"></div><div style="left:311.6px;top:703.5px;width:0.6px;height:12.5px;background:#c2c2c2;"></div><svg style="position:absolute;left:236.5px;top:705.9px" width="9.2" height="10" viewBox="0 0 9.2 10"><circle cx="4.2" cy="4.2" r="3.500" fill="#58a9c6"/><path d="M5.5 3.100a1.800 1.800 0 1 0 0 2.300" stroke="#fff" stroke-width="1" fill="none"/><path d="M5 6h3.600v3.400h-3.600z" fill="#5b8fd0"/><path d="M5 9.400l3.600-3.400h-3.600z" fill="#7fb3e0"/></svg><span class="t" style="left:247px;top:706.22px;font-size:6.9px;color:#3a3a3a;letter-spacing:0.22px;">LoginActivity.kt</span><svg style="position:absolute;left:301px;top:708.3px" width="5" height="5" viewBox="0 0 5 5"><path d="M0.600 0.600l3.800 3.800M4.400 0.600l-3.800 3.800" stroke="#aaa" stroke-width="0.800"/></svg><div style="left:417.6px;top:703.5px;width:0.6px;height:12.5px;background:#c2c2c2;"></div><svg style="position:absolute;left:316px;top:705.7px" width="8.8" height="9.2" viewBox="0 0 8.8 9.2"><path d="M1.800 0.300h3.800l1.800 1.800v3.400h-5.600z" fill="#c3c6cb"/><rect x="0.400" y="5" width="7.600" height="3.500" rx="0.500" fill="#e8a040"/><path d="M2.900 5.700l-1.200 1 1.200 1M5.500 5.700l1.200 1-1.200 1" stroke="#7a4a12" stroke-width="0.700" fill="none"/></svg><span class="t" style="left:326.5px;top:706.22px;font-size:6.9px;color:#4f8f4f;letter-spacing:0.05px;">add_channel_dialog.xml</span><svg style="position:absolute;left:407px;top:708.3px" width="5" height="5" viewBox="0 0 5 5"><path d="M0.600 0.600l3.800 3.800M4.400 0.600l-3.800 3.800" stroke="#aaa" stroke-width="0.800"/></svg><div style="left:523.1px;top:703.5px;width:0.6px;height:12.5px;background:#c2c2c2;"></div><svg style="position:absolute;left:422px;top:705.7px" width="8.8" height="9.2" viewBox="0 0 8.8 9.2"><path d="M1.800 0.300h3.800l1.800 1.800v3.400h-5.600z" fill="#c3c6cb"/><rect x="0.400" y="5" width="7.600" height="3.500" rx="0.500" fill="#e8a040"/><path d="M2.900 5.700l-1.200 1 1.200 1M5.500 5.700l1.200 1-1.200 1" stroke="#7a4a12" stroke-width="0.700" fill="none"/></svg><span class="t" style="left:432.5px;top:706.22px;font-size:6.9px;color:#3a3a3a;letter-spacing:0.06px;">activity_create_user.xml</span><svg style="position:absolute;left:512.5px;top:708.3px" width="5" height="5" viewBox="0 0 5 5"><path d="M0.600 0.600l3.800 3.800M4.400 0.600l-3.800 3.800" stroke="#aaa" stroke-width="0.800"/></svg><div style="left:620.6px;top:703.5px;width:0.6px;height:12.5px;background:#c2c2c2;"></div><svg style="position:absolute;left:527.5px;top:705.9px" width="9.2" height="10" viewBox="0 0 9.2 10"><circle cx="4.2" cy="4.2" r="3.500" fill="#58a9c6"/><path d="M5.5 3.100a1.800 1.800 0 1 0 0 2.300" stroke="#fff" stroke-width="1" fill="none"/><path d="M5 6h3.600v3.400h-3.600z" fill="#5b8fd0"/><path d="M5 9.400l3.600-3.400h-3.600z" fill="#7fb3e0"/></svg><span class="t" style="left:538px;top:706.22px;font-size:6.9px;color:#3a3a3a;letter-spacing:0.15px;">CreateUserActivity.kt</span><svg style="position:absolute;left:610px;top:708.3px" width="5" height="5" viewBox="0 0 5 5"><path d="M0.600 0.600l3.800 3.800M4.400 0.600l-3.800 3.800" stroke="#aaa" stroke-width="0.800"/></svg><div style="left:718.6px;top:703.5px;width:0.6px;height:12.5px;background:#c2c2c2;"></div><svg style="position:absolute;left:624.5px;top:705.7px" width="8.8" height="9.2" viewBox="0 0 8.8 9.2"><path d="M1.800 0.300h3.800l1.800 1.800v3.400h-5.600z" fill="#c3c6cb"/><rect x="0.400" y="5" width="7.600" height="3.500" rx="0.500" fill="#e8a040"/><path d="M2.900 5.700l-1.200 1 1.200 1M5.500 5.700l1.200 1-1.200 1" stroke="#7a4a12" stroke-width="0.700" fill="none"/></svg><span class="t" style="left:635px;top:706.22px;font-size:6.9px;color:#3a3a3a;letter-spacing:0.01px;">nav_header_main.xml</span><svg style="position:absolute;left:708px;top:708.3px" width="5" height="5" viewBox="0 0 5 5"><path d="M0.600 0.600l3.800 3.800M4.400 0.600l-3.800 3.800" stroke="#aaa" stroke-width="0.800"/></svg><div style="left:717px;top:702.3px;width:80px;height:15.2px;background:#f7f7f7;"></div><svg style="position:absolute;left:722.5px;top:705.9px" width="9.2" height="10" viewBox="0 0 9.2 10"><circle cx="4.2" cy="4.2" r="3.500" fill="#58a9c6"/><path d="M5.5 3.100a1.800 1.800 0 1 0 0 2.300" stroke="#fff" stroke-width="1" fill="none"/><path d="M5 6h3.600v3.400h-3.600z" fill="#5b8fd0"/><path d="M5 9.400l3.600-3.400h-3.600z" fill="#7fb3e0"/></svg><span class="t" style="left:733px;top:706.22px;font-size:6.9px;color:#1d1d8a;letter-spacing:0.29px;">MainActivity.kt</span><svg style="position:absolute;left:786px;top:708.3px" width="5" height="5" viewBox="0 0 5 5"><path d="M0.600 0.600l3.800 3.800M4.400 0.600l-3.800 3.800" stroke="#888" stroke-width="0.800"/></svg><div style="left:891.6px;top:703.5px;width:0.6px;height:12.5px;background:#c2c2c2;"></div><svg style="position:absolute;left:800.5px;top:705.7px" width="8.8" height="9.2" viewBox="0 0 8.8 9.2"><path d="M1.800 0.300h3.800l1.800 1.800v3.400h-5.600z" fill="#c3c6cb"/><rect x="0.400" y="5" width="7.600" height="3.500" rx="0.500" fill="#e8a040"/><path d="M2.900 5.700l-1.200 1 1.200 1M5.500 5.700l1.200 1-1.200 1" stroke="#7a4a12" stroke-width="0.700" fill="none"/></svg><span class="t" style="left:811px;top:706.22px;font-size:6.9px;color:#3a3a3a;letter-spacing:0.13px;">AndroidManifest.xml</span><svg style="position:absolute;left:881px;top:708.3px" width="5" height="5" viewBox="0 0 5 5"><path d="M0.600 0.600l3.800 3.800M4.400 0.600l-3.800 3.800" stroke="#aaa" stroke-width="0.800"/></svg><div style="left:967.6px;top:703.5px;width:0.6px;height:12.5px;background:#c2c2c2;"></div><svg style="position:absolute;left:895.5px;top:705.9px" width="9.2" height="10" viewBox="0 0 9.2 10"><circle cx="4.2" cy="4.2" r="3.500" fill="#58a9c6"/><path d="M5.5 3.100a1.800 1.800 0 1 0 0 2.300" stroke="#fff" stroke-width="1" fill="none"/><path d="M5 6h3.600v3.400h-3.600z" fill="#5b8fd0"/><path d="M5 9.400l3.600-3.400h-3.600z" fill="#7fb3e0"/></svg><span class="t" style="left:906px;top:706.22px;font-size:6.9px;color:#3a3a3a;letter-spacing:0.11px;">AuthService.kt</span><svg style="position:absolute;left:957px;top:708.3px" width="5" height="5" viewBox="0 0 5 5"><path d="M0.600 0.600l3.800 3.800M4.400 0.600l-3.800 3.800" stroke="#aaa" stroke-width="0.800"/></svg><span class="t" style="left:992.5px;top:706.28px;font-size:6px;color:#555;">‣≡ 2</span><div style="left:14px;top:717px;width:216px;height:491px;background:#fff;"></div><svg style="position:absolute;left:14.6px;top:720.1px" width="6.6" height="6.6" viewBox="0 0 6.6 6.6"><path d="M0.600 1.500h5.400l-2.700 3.900z" fill="#a0a0a0"/></svg><svg style="position:absolute;left:27px;top:719.2px" width="9.2" height="8.6" viewBox="0 0 9.2 8.6"><path d="M0.3 1.2h3.4l0.9 1h4.1v5.300h-8.4z" fill="#a9b4bc"/><rect x="5.6" y="5" width="3.4" height="3.400" fill="#40b6e0"/></svg><span class="t" style="left:37.8px;top:718.5px;font-size:7.9px;color:#262626;font-weight:bold;letter-spacing:0.39px;">app</span><svg style="position:absolute;left:26.8px;top:731.67px" width="6.6" height="6.6" viewBox="0 0 6.6 6.6"><path d="M1.500 0.600v5.400l3.900-2.700z" fill="#a0a0a0"/></svg><svg style="position:absolute;left:39.2px;top:730.76px" width="9.2" height="8.6" viewBox="0 0 9.2 8.6"><path d="M0.3 1.2h3.4l0.9 1h4.1v5.300h-8.4z" fill="#7ec3e6"/></svg><span class="t" style="left:50px;top:730.07px;font-size:7.9px;color:#262626;letter-spacing:0.31px;">manifests</span><svg style="position:absolute;left:26.8px;top:743.23px" width="6.6" height="6.6" viewBox="0 0 6.6 6.6"><path d="M0.600 1.500h5.400l-2.700 3.900z" fill="#a0a0a0"/></svg><svg style="position:absolute;left:39.2px;top:742.33px" width="9.2" height="8.6" viewBox="0 0 9.2 8.6"><path d="M0.3 1.2h3.4l0.9 1h4.1v5.300h-8.4z" fill="#7ec3e6"/></svg><span class="t" style="left:50px;top:741.63px;font-size:7.9px;color:#262626;letter-spacing:0.3px;">java</span><svg style="position:absolute;left:39px;top:754.8px" width="6.6" height="6.6" viewBox="0 0 6.6 6.6"><path d="M0.600 1.500h5.400l-2.700 3.900z" fill="#a0a0a0"/></svg><svg style="position:absolute;left:51.4px;top:753.89px" width="9.2" height="8.6" viewBox="0 0 9.2 8.6"><path d="M0.3 1.2h3.4l0.9 1h4.1v5.300h-8.4z" fill="#b7bcc0"/><rect x="1.4" y="3.6" width="2.6" height="2.4" fill="#eef0f1"/></svg><span class="t" style="left:62.2px;top:753.2px;font-size:7.9px;color:#262626;letter-spacing:0.33px;">com.example.jonnyb.smack</span><svg style="position:absolute;left:51.2px;top:766.36px" width="6.6" height="6.6" viewBox="0 0 6.6 6.6"><path d="M0.600 1.500h5.400l-2.700 3.900z" fill="#a0a0a0"/></svg><svg style="position:absolute;left:63.6px;top:765.46px" width="9.2" height="8.6" viewBox="0 0 9.2 8.6"><path d="M0.3 1.2h3.4l0.9 1h4.1v5.300h-8.4z" fill="#b7bcc0"/><rect x="1.4" y="3.6" width="2.6" height="2.4" fill="#eef0f1"/></svg><span class="t" style="left:74.4px;top:764.76px;font-size:7.9px;color:#262626;letter-spacing:0.28px;">Controller</span><svg style="position:absolute;left:76.5px;top:776.62px" width="9.2" height="10" viewBox="0 0 9.2 10"><circle cx="4.2" cy="4.2" r="3.500" fill="#58a9c6"/><path d="M5.5 3.100a1.800 1.800 0 1 0 0 2.300" stroke="#fff" stroke-width="1" fill="none"/><path d="M5 6h3.600v3.400h-3.600z" fill="#5b8fd0"/><path d="M5 9.400l3.600-3.400h-3.600z" fill="#7fb3e0"/></svg><div style="left:88px;top:779.93px;width:3.6px;height:3px;background:#c4dca8;border-radius:1px;"></div><span class="t" style="left:96px;top:776.33px;font-size:7.9px;color:#262626;letter-spacing:0.3px;">CreateUserActivity</span><svg style="position:absolute;left:76.5px;top:788.19px" width="9.2" height="10" viewBox="0 0 9.2 10"><circle cx="4.2" cy="4.2" r="3.500" fill="#58a9c6"/><path d="M5.5 3.100a1.800 1.800 0 1 0 0 2.300" stroke="#fff" stroke-width="1" fill="none"/><path d="M5 6h3.600v3.400h-3.600z" fill="#5b8fd0"/><path d="M5 9.400l3.600-3.400h-3.600z" fill="#7fb3e0"/></svg><div style="left:88px;top:791.49px;width:3.6px;height:3px;background:#c4dca8;border-radius:1px;"></div><span class="t" style="left:96px;top:787.89px;font-size:7.9px;color:#262626;letter-spacing:0.28px;">LoginActivity</span><div style="left:14px;top:798.57px;width:216px;height:11.56px;background:#d5d5d5;"></div><svg style="position:absolute;left:76.5px;top:799.75px" width="9.2" height="10" viewBox="0 0 9.2 10"><circle cx="4.2" cy="4.2" r="3.500" fill="#58a9c6"/><path d="M5.5 3.100a1.800 1.800 0 1 0 0 2.300" stroke="#fff" stroke-width="1" fill="none"/><path d="M5 6h3.600v3.400h-3.600z" fill="#5b8fd0"/><path d="M5 9.400l3.600-3.400h-3.600z" fill="#7fb3e0"/></svg><div style="left:88px;top:803.06px;width:3.6px;height:3px;background:#c4dca8;border-radius:1px;"></div><span class="t" style="left:96px;top:799.46px;font-size:7.9px;color:#262626;letter-spacing:0.29px;">MainActivity</span><svg style="position:absolute;left:51.2px;top:812.62px" width="6.6" height="6.6" viewBox="0 0 6.6 6.6"><path d="M1.500 0.600v5.400l3.900-2.700z" fill="#a0a0a0"/></svg><svg style="position:absolute;left:63.6px;top:811.72px" width="9.2" height="8.6" viewBox="0 0 9.2 8.6"><path d="M0.3 1.2h3.4l0.9 1h4.1v5.300h-8.4z" fill="#b7bcc0"/><rect x="1.4" y="3.6" width="2.6" height="2.4" fill="#eef0f1"/></svg><span class="t" style="left:74.4px;top:811.02px;font-size:7.9px;color:#262626;letter-spacing:0.31px;">Services</span><svg style="position:absolute;left:51.2px;top:824.19px" width="6.6" height="6.6" viewBox="0 0 6.6 6.6"><path d="M1.500 0.600v5.400l3.900-2.700z" fill="#a0a0a0"/></svg><svg style="position:absolute;left:63.6px;top:823.28px" width="9.2" height="8.6" viewBox="0 0 9.2 8.6"><path d="M0.3 1.2h3.4l0.9 1h4.1v5.300h-8.4z" fill="#b7bcc0"/><rect x="1.4" y="3.6" width="2.6" height="2.4" fill="#eef0f1"/></svg><span class="t" style="left:74.4px;top:822.59px;font-size:7.9px;color:#262626;letter-spacing:0.23px;">Utilities</span><div style="left:14px;top:833.27px;width:216px;height:11.56px;background:#eff8e8;"></div><svg style="position:absolute;left:39px;top:835.75px" width="6.6" height="6.6" viewBox="0 0 6.6 6.6"><path d="M1.500 0.600v5.400l3.900-2.700z" fill="#a0a0a0"/></svg><svg style="position:absolute;left:51.4px;top:834.85px" width="9.2" height="8.6" viewBox="0 0 9.2 8.6"><path d="M0.3 1.2h3.4l0.9 1h4.1v5.300h-8.4z" fill="#b7bcc0"/><rect x="1.4" y="3.6" width="2.6" height="2.4" fill="#eef0f1"/></svg><span class="t" style="left:62.2px;top:834.15px;font-size:7.9px;color:#262626;letter-spacing:0.33px;">com.example.jonnyb.smack</span><span class="t" style="left:170.29px;top:834.15px;font-size:7.9px;color:#868686;letter-spacing:0.29px;">(androidTest)</span><div style="left:14px;top:844.83px;width:216px;height:11.56px;background:#eff8e8;"></div><svg style="position:absolute;left:39px;top:847.32px" width="6.6" height="6.6" viewBox="0 0 6.6 6.6"><path d="M1.500 0.600v5.400l3.900-2.700z" fill="#a0a0a0"/></svg><svg style="position:absolute;left:51.4px;top:846.41px" width="9.2" height="8.6" viewBox="0 0 9.2 8.6"><path d="M0.3 1.2h3.4l0.9 1h4.1v5.300h-8.4z" fill="#b7bcc0"/><rect x="1.4" y="3.6" width="2.6" height="2.4" fill="#eef0f1"/></svg><span class="t" style="left:62.2px;top:845.72px;font-size:7.9px;color:#262626;letter-spacing:0.33px;">com.example.jonnyb.smack</span><span class="t" style="left:170.29px;top:845.72px;font-size:7.9px;color:#868686;letter-spacing:0.25px;">(test)</span><svg style="position:absolute;left:26.8px;top:858.88px" width="6.6" height="6.6" viewBox="0 0 6.6 6.6"><path d="M0.600 1.500h5.400l-2.700 3.900z" fill="#a0a0a0"/></svg><svg style="position:absolute;left:39.2px;top:857.98px" width="9.2" height="8.6" viewBox="0 0 9.2 8.6"><path d="M0.3 1.2h3.4l0.9 1h4.1v5.300h-8.4z" fill="#b9b3a8"/><rect x="5.6" y="5" width="3.4" height="3.400" fill="#e8a33d"/></svg><span class="t" style="left:50px;top:857.28px;font-size:7.9px;color:#262626;letter-spacing:0.3px;">res</span><svg style="position:absolute;left:39px;top:870.45px" width="6.6" height="6.6" viewBox="0 0 6.6 6.6"><path d="M1.500 0.600v5.400l3.900-2.700z" fill="#a0a0a0"/></svg><svg style="position:absolute;left:51.4px;top:869.54px" width="9.2" height="8.6" viewBox="0 0 9.2 8.6"><path d="M0.3 1.2h3.4l0.9 1h4.1v5.300h-8.4z" fill="#b7bcc0"/><rect x="1.4" y="3.6" width="2.6" height="2.4" fill="#eef0f1"/></svg><span class="t" style="left:62.2px;top:868.85px;font-size:7.9px;color:#262626;letter-spacing:0.33px;">drawable</span><svg style="position:absolute;left:39px;top:882.01px" width="6.6" height="6.6" viewBox="0 0 6.6 6.6"><path d="M0.600 1.500h5.400l-2.700 3.900z" fill="#a0a0a0"/></svg><svg style="position:absolute;left:51.4px;top:881.11px" width="9.2" height="8.6" viewBox="0 0 9.2 8.6"><path d="M0.3 1.2h3.4l0.9 1h4.1v5.300h-8.4z" fill="#b7bcc0"/><rect x="1.4" y="3.6" width="2.6" height="2.4" fill="#eef0f1"/></svg><span class="t" style="left:62.2px;top:880.41px;font-size:7.9px;color:#262626;letter-spacing:0.29px;">layout</span><svg style="position:absolute;left:64.5px;top:892.08px" width="8.8" height="9.2" viewBox="0 0 8.8 9.2"><path d="M1.800 0.300h3.800l1.800 1.800v3.400h-5.600z" fill="#c3c6cb"/><rect x="0.400" y="5" width="7.600" height="3.500" rx="0.500" fill="#e8a040"/><path d="M2.900 5.700l-1.200 1 1.200 1M5.500 5.700l1.200 1-1.200 1" stroke="#7a4a12" stroke-width="0.700" fill="none"/></svg><span class="t" style="left:74px;top:891.98px;font-size:7.9px;color:#262626;letter-spacing:0.29px;">activity_create_user.xml</span><svg style="position:absolute;left:64.5px;top:903.64px" width="8.8" height="9.2" viewBox="0 0 8.8 9.2"><path d="M1.800 0.300h3.800l1.800 1.800v3.400h-5.600z" fill="#c3c6cb"/><rect x="0.400" y="5" width="7.600" height="3.500" rx="0.500" fill="#e8a040"/><path d="M2.900 5.700l-1.200 1 1.200 1M5.500 5.700l1.200 1-1.200 1" stroke="#7a4a12" stroke-width="0.700" fill="none"/></svg><span class="t" style="left:74px;top:903.54px;font-size:7.9px;color:#262626;letter-spacing:0.27px;">activity_login.xml</span><svg style="position:absolute;left:64.5px;top:915.21px" width="8.8" height="9.2" viewBox="0 0 8.8 9.2"><path d="M1.800 0.300h3.800l1.800 1.800v3.400h-5.600z" fill="#c3c6cb"/><rect x="0.400" y="5" width="7.600" height="3.500" rx="0.500" fill="#e8a040"/><path d="M2.900 5.700l-1.200 1 1.200 1M5.500 5.700l1.200 1-1.200 1" stroke="#7a4a12" stroke-width="0.700" fill="none"/></svg><span class="t" style="left:74px;top:915.11px;font-size:7.9px;color:#262626;letter-spacing:0.29px;">activity_main.xml</span><svg style="position:absolute;left:64.5px;top:926.77px" width="8.8" height="9.2" viewBox="0 0 8.8 9.2"><path d="M1.800 0.300h3.800l1.800 1.800v3.400h-5.600z" fill="#c3c6cb"/><rect x="0.400" y="5" width="7.600" height="3.500" rx="0.500" fill="#e8a040"/><path d="M2.900 5.700l-1.200 1 1.200 1M5.500 5.700l1.200 1-1.200 1" stroke="#7a4a12" stroke-width="0.700" fill="none"/></svg><span class="t" style="left:74px;top:926.67px;font-size:7.9px;color:#3d8a3d;letter-spacing:0.32px;">add_channel_dialog.xml</span><svg style="position:absolute;left:64.5px;top:938.34px" width="8.8" height="9.2" viewBox="0 0 8.8 9.2"><path d="M1.800 0.300h3.800l1.800 1.800v3.400h-5.600z" fill="#c3c6cb"/><rect x="0.400" y="5" width="7.600" height="3.500" rx="0.500" fill="#e8a040"/><path d="M2.900 5.700l-1.200 1 1.200 1M5.500 5.700l1.200 1-1.200 1" stroke="#7a4a12" stroke-width="0.700" fill="none"/></svg><span class="t" style="left:74px;top:938.24px;font-size:7.9px;color:#262626;letter-spacing:0.33px;">app_bar_main.xml</span><svg style="position:absolute;left:64.5px;top:949.9px" width="8.8" height="9.2" viewBox="0 0 8.8 9.2"><path d="M1.800 0.300h3.800l1.800 1.800v3.400h-5.600z" fill="#c3c6cb"/><rect x="0.400" y="5" width="7.600" height="3.500" rx="0.500" fill="#e8a040"/><path d="M2.900 5.700l-1.200 1 1.200 1M5.500 5.700l1.200 1-1.200 1" stroke="#7a4a12" stroke-width="0.700" fill="none"/></svg><span class="t" style="left:74px;top:949.8px;font-size:7.9px;color:#262626;letter-spacing:0.32px;">content_main.xml</span><svg style="position:absolute;left:64.5px;top:961.47px" width="8.8" height="9.2" viewBox="0 0 8.8 9.2"><path d="M1.800 0.300h3.800l1.800 1.800v3.400h-5.600z" fill="#c3c6cb"/><rect x="0.400" y="5" width="7.600" height="3.500" rx="0.500" fill="#e8a040"/><path d="M2.900 5.700l-1.200 1 1.200 1M5.500 5.700l1.200 1-1.200 1" stroke="#7a4a12" stroke-width="0.700" fill="none"/></svg><span class="t" style="left:74px;top:961.37px;font-size:7.9px;color:#262626;letter-spacing:0.34px;">nav_header_main.xml</span><svg style="position:absolute;left:39px;top:974.53px" width="6.6" height="6.6" viewBox="0 0 6.6 6.6"><path d="M1.500 0.600v5.400l3.900-2.700z" fill="#a0a0a0"/></svg><svg style="position:absolute;left:51.4px;top:973.63px" width="9.2" height="8.6" viewBox="0 0 9.2 8.6"><path d="M0.3 1.2h3.4l0.9 1h4.1v5.300h-8.4z" fill="#b7bcc0"/><rect x="1.4" y="3.6" width="2.6" height="2.4" fill="#eef0f1"/></svg><span class="t" style="left:62.2px;top:972.93px;font-size:7.9px;color:#262626;letter-spacing:0.39px;">mipmap</span><svg style="position:absolute;left:39px;top:986.1px" width="6.6" height="6.6" viewBox="0 0 6.6 6.6"><path d="M1.500 0.600v5.400l3.900-2.700z" fill="#a0a0a0"/></svg><svg style="position:absolute;left:51.4px;top:985.19px" width="9.2" height="8.6" viewBox="0 0 9.2 8.6"><path d="M0.3 1.2h3.4l0.9 1h4.1v5.300h-8.4z" fill="#b7bcc0"/><rect x="1.4" y="3.6" width="2.6" height="2.4" fill="#eef0f1"/></svg><span class="t" style="left:62.2px;top:984.5px;font-size:7.9px;color:#262626;letter-spacing:0.31px;">values</span><svg style="position:absolute;left:14.6px;top:997.66px" width="6.6" height="6.6" viewBox="0 0 6.6 6.6"><path d="M0.600 1.500h5.400l-2.700 3.900z" fill="#a0a0a0"/></svg><svg style="position:absolute;left:27px;top:996.56px" width="8.8" height="8.8" viewBox="0 0 8.8 8.8"><circle cx="4.4" cy="4.4" r="3.600" fill="#fff" stroke="#3fae49" stroke-width="1.300"/><path d="M3 2.600v3.600l3.200-1.800z" fill="#3fae49"/></svg><span class="t" style="left:37.8px;top:996.06px;font-size:7.9px;color:#262626;letter-spacing:0.29px;">Gradle Scripts</span><svg style="position:absolute;left:39.5px;top:1008.12px" width="8.8" height="8.8" viewBox="0 0 8.8 8.8"><circle cx="4.4" cy="4.4" r="3.600" fill="#fff" stroke="#3fae49" stroke-width="1.300"/><path d="M3 2.600v3.600l3.200-1.800z" fill="#3fae49"/></svg><span class="t" style="left:50px;top:1007.63px;font-size:7.9px;color:#262626;letter-spacing:0.28px;">build.gradle</span><span class="t" style="left:96.81px;top:1007.63px;font-size:7.9px;color:#868686;letter-spacing:0.3px;">(Project: Smack)</span><svg style="position:absolute;left:39.5px;top:1019.69px" width="8.8" height="8.8" viewBox="0 0 8.8 8.8"><circle cx="4.4" cy="4.4" r="3.600" fill="#fff" stroke="#3fae49" stroke-width="1.300"/><path d="M3 2.600v3.600l3.200-1.800z" fill="#3fae49"/></svg><span class="t" style="left:50px;top:1019.19px;font-size:7.9px;color:#262626;letter-spacing:0.28px;">build.gradle</span><span class="t" style="left:96.81px;top:1019.19px;font-size:7.9px;color:#868686;letter-spacing:0.31px;">(Module: app)</span><svg style="position:absolute;left:39.5px;top:1031.06px" width="8.8" height="9.2" viewBox="0 0 8.8 9.2"><path d="M1.400 0.300h4.400l2 2v6.300h-6.400z" fill="#c5c8cc"/><rect x="0.300" y="5" width="2" height="3.800" fill="#e8a33d"/><rect x="2.800" y="3.600" width="2" height="5.200" fill="#8fb84e"/><rect x="5.300" y="5.600" width="2" height="3.200" fill="#e8a33d"/></svg><span class="t" style="left:50px;top:1030.76px;font-size:7.9px;color:#262626;letter-spacing:0.3px;">gradle-wrapper.properties</span><span class="t" style="left:150.03px;top:1030.76px;font-size:7.9px;color:#868686;letter-spacing:0.3px;">(Gradle Version)</span><svg style="position:absolute;left:39.5px;top:1042.62px" width="8.8" height="9.2" viewBox="0 0 8.8 9.2"><path d="M1.400 0.300h4.400l2 2v6.300h-6.400z" fill="#b9bcc0"/><rect x="2.400" y="3.400" width="4.200" height="0.900" fill="#6d7074"/><rect x="2.400" y="5" width="4.200" height="0.900" fill="#6d7074"/><rect x="2.400" y="6.600" width="4.200" height="0.900" fill="#6d7074"/></svg><span class="t" style="left:50px;top:1042.32px;font-size:7.9px;color:#262626;letter-spacing:0.3px;">proguard-rules.pro</span><span class="t" style="left:122.94px;top:1042.32px;font-size:7.9px;color:#868686;letter-spacing:0.3px;">(ProGuard Rules for app)</span><svg style="position:absolute;left:39.5px;top:1054.18px" width="8.8" height="9.2" viewBox="0 0 8.8 9.2"><path d="M1.400 0.300h4.400l2 2v6.300h-6.400z" fill="#c5c8cc"/><rect x="0.300" y="5" width="2" height="3.800" fill="#e8a33d"/><rect x="2.800" y="3.600" width="2" height="5.200" fill="#8fb84e"/><rect x="5.300" y="5.600" width="2" height="3.200" fill="#e8a33d"/></svg><span class="t" style="left:50px;top:1053.89px;font-size:7.9px;color:#262626;letter-spacing:0.29px;">gradle.properties</span><span class="t" style="left:116.76px;top:1053.89px;font-size:7.9px;color:#868686;letter-spacing:0.28px;">(Project Properties)</span><svg style="position:absolute;left:39.5px;top:1065.95px" width="8.8" height="8.8" viewBox="0 0 8.8 8.8"><circle cx="4.4" cy="4.4" r="3.600" fill="#fff" stroke="#3fae49" stroke-width="1.300"/><path d="M3 2.600v3.600l3.200-1.800z" fill="#3fae49"/></svg><span class="t" style="left:50px;top:1065.45px;font-size:7.9px;color:#262626;letter-spacing:0.28px;">settings.gradle</span><span class="t" style="left:108.21px;top:1065.45px;font-size:7.9px;color:#868686;letter-spacing:0.28px;">(Project Settings)</span><svg style="position:absolute;left:39.5px;top:1077.32px" width="8.8" height="9.2" viewBox="0 0 8.8 9.2"><path d="M1.400 0.300h4.400l2 2v6.300h-6.400z" fill="#c5c8cc"/><rect x="0.300" y="5" width="2" height="3.800" fill="#e8a33d"/><rect x="2.800" y="3.600" width="2" height="5.200" fill="#8fb84e"/><rect x="5.300" y="5.600" width="2" height="3.200" fill="#e8a33d"/></svg><span class="t" style="left:50px;top:1077.02px;font-size:7.9px;color:#262626;letter-spacing:0.28px;">local.properties</span><span class="t" style="left:110.58px;top:1077.02px;font-size:7.9px;color:#868686;letter-spacing:0.31px;">(SDK Location)</span><div style="left:230px;top:717.5px;width:780px;height:491px;background:#fff;"></div><div style="left:230px;top:717.5px;width:780px;height:19.5px;background:#f2f2f2;"></div><div style="left:230px;top:736.8px;width:780px;height:0.6px;background:#d9d9d9;"></div><div style="left:273.2px;top:721.2px;width:85.44px;height:14.6px;background:#fffce0;border:0.8px solid #b4b4b4;box-sizing:border-box;border-radius:1.5px;"></div><span class="t m c" style="left:275.6px;top:721.5px;color:#1a1a1a;font-size:11.16px;">MainActivity</span><div style="left:230px;top:737.5px;width:42.3px;height:471px;background:#f0f0f0;"></div><div style="left:230px;top:717.5px;width:0.8px;height:491px;background:#c9c9c9;"></div><div style="left:272px;top:737.5px;width:0.6px;height:471px;background:#dedede;"></div><div style="left:946px;top:737.5px;width:0.6px;height:471px;background:#e4e4e4;"></div><div style="left:230px;top:995.4px;width:772px;height:13.4px;background:#fffce4;"></div><div style="left:230px;top:995.4px;width:42px;height:13.4px;background:#f9f6dc;"></div><div style="left:267px;top:1035.6px;width:5.4px;height:13.4px;background:#ecdcae;"></div><div style="left:266px;top:807.8px;width:0.8px;height:201px;background:#aab8da;"></div><span class="t m ln" style="left:233.200px;top:740.5px;">55</span><span class="t m c" style="left:329.9px;top:740.5px;">} </span><span class="t m c" style="left:343.25px;top:740.5px;color:#141470;font-weight:bold;">else</span><span class="t m c" style="left:376.62px;top:740.5px;">{</span><span class="t m ln" style="left:233.200px;top:753.9px;">56</span><span class="t m c" style="left:356.6px;top:753.9px;color:#141470;font-weight:bold;">super</span><span class="t m c" style="left:389.98px;top:753.9px;">.onBackPressed()</span><span class="t m ln" style="left:233.200px;top:767.3px;">57</span><span class="t m c" style="left:329.9px;top:767.3px;">}</span><span class="t m ln" style="left:233.200px;top:780.7px;">58</span><span class="t m c" style="left:303.2px;top:780.7px;">}</span><span class="t m ln" style="left:233.200px;top:794.1px;">59</span><span class="t m ln" style="left:233.200px;top:807.5px;">60</span><span class="t m c" style="left:303.2px;top:807.5px;color:#141470;font-weight:bold;">fun</span><span class="t m c" style="left:329.9px;top:807.5px;">loginBtnNavClicked(</span><span class="t m c" style="left:456.72px;top:807.5px;color:#787878;">view</span><span class="t m c" style="left:483.42px;top:807.5px;">: View) </span><span class="t m c" style="left:536.82px;top:807.5px;background:#b9cbe8;">{</span><span class="t m ln" style="left:233.200px;top:820.9px;">61</span><span class="t m ln" style="left:233.200px;top:834.3px;">62</span><span class="t m c" style="left:329.9px;top:834.3px;color:#141470;font-weight:bold;">if</span><span class="t m c" style="left:349.93px;top:834.3px;">(AuthService.</span><span class="t m c" style="left:436.7px;top:834.3px;color:#5e2276;font-weight:bold;text-decoration:underline;">isLoggedIn</span><span class="t m c" style="left:503.45px;top:834.3px;">) {</span><span class="t m ln" style="left:233.200px;top:847.7px;">63</span><span class="t m c" style="left:356.6px;top:847.7px;">UserDataService.logout()</span><span class="t m ln" style="left:233.200px;top:861.1px;">64</span><span class="t m c" style="left:356.6px;top:861.1px;color:#5e2276;font-style:italic;">userNameNavHeader</span><span class="t m c" style="left:470.08px;top:861.1px;">.</span><span class="t m c" style="left:476.75px;top:861.1px;color:#5e2276;font-style:italic;text-decoration:underline;">text</span><span class="t m c" style="left:510.13px;top:861.1px;">= </span><span class="t m c" style="left:523.48px;top:861.1px;color:#167a16;font-weight:bold;">""</span><span class="t m ln" style="left:233.200px;top:874.5px;">65</span><span class="t m c" style="left:356.6px;top:874.5px;color:#5e2276;font-style:italic;">userEmailNavHeader</span><span class="t m c" style="left:476.75px;top:874.5px;">.</span><span class="t m c" style="left:483.43px;top:874.5px;color:#5e2276;font-style:italic;text-decoration:underline;">text</span><span class="t m c" style="left:516.8px;top:874.5px;">= </span><span class="t m c" style="left:530.15px;top:874.5px;color:#167a16;font-weight:bold;">""</span><span class="t m ln" style="left:233.200px;top:887.9px;">66</span><span class="t m c" style="left:356.6px;top:887.9px;color:#5e2276;font-style:italic;">userImageNavHeader</span><span class="t m c" style="left:476.75px;top:887.9px;">.setImageResource(R.drawable.</span><span class="t m c" style="left:670.33px;top:887.9px;color:#5e2276;font-style:italic;">profiledefault</span><span class="t m c" style="left:763.78px;top:887.9px;">)</span><span class="t m ln" style="left:233.200px;top:901.3px;">67</span><span class="t m c" style="left:356.6px;top:901.3px;color:#5e2276;font-style:italic;">userImageNavHeader</span><span class="t m c" style="left:476.75px;top:901.3px;">.setBackgroundColor(Color.</span><span class="t m c" style="left:650.3px;top:901.3px;color:#5e2276;font-style:italic;">TRANSPARENT</span><span class="t m c" style="left:723.72px;top:901.3px;">)</span><span class="t m ln" style="left:233.200px;top:914.7px;">68</span><span class="t m c" style="left:356.6px;top:914.7px;color:#5e2276;font-style:italic;">loginBtnNavHeader</span><span class="t m c" style="left:470.08px;top:914.7px;">.</span><span class="t m c" style="left:476.75px;top:914.7px;color:#5e2276;font-style:italic;text-decoration:underline;">text</span><span class="t m c" style="left:510.13px;top:914.7px;">= </span><span class="t m c" style="left:523.48px;top:914.7px;color:#167a16;font-weight:bold;">"</span><span class="t m c" style="left:530.15px;top:914.7px;background:#e6f2c4;color:#167a16;font-weight:bold;">Login</span><span class="t m c" style="left:563.52px;top:914.7px;color:#167a16;font-weight:bold;">"</span><span class="t m ln" style="left:233.200px;top:928.1px;">69</span><span class="t m ln" style="left:233.200px;top:941.5px;">70</span><span class="t m c" style="left:329.9px;top:941.5px;">} </span><span class="t m c" style="left:343.25px;top:941.5px;color:#141470;font-weight:bold;">else</span><span class="t m c" style="left:376.62px;top:941.5px;">{</span><span class="t m ln" style="left:233.200px;top:954.9px;">71</span><span class="t m c" style="left:356.6px;top:954.9px;color:#141470;font-weight:bold;">val</span><span class="t m c" style="left:383.3px;top:954.9px;">loginIntent = Intent(</span><span class="t m c" style="left:523.48px;top:954.9px;color:#141470;font-weight:bold;">this</span><span class="t m c" style="left:550.18px;top:954.9px;">, LoginActivity::</span><span class="t m c" style="left:663.65px;top:954.9px;color:#141470;font-weight:bold;">class</span><span class="t m c" style="left:697.03px;top:954.9px;">.</span><span class="t m c" style="left:703.7px;top:954.9px;font-style:italic;">java</span><span class="t m c" style="left:730.4px;top:954.9px;">)</span><span class="t m ln" style="left:233.200px;top:968.3px;">72</span><span class="t m c" style="left:356.6px;top:968.3px;">startActivity(loginIntent)</span><span class="t m ln" style="left:233.200px;top:981.7px;">73</span><span class="t m c" style="left:329.9px;top:981.7px;">}</span><span class="t m ln" style="left:233.200px;top:995.1px;">74</span><span class="t m c" style="left:303.2px;top:995.1px;background:#b9cbe8;">}</span><span class="t m ln" style="left:233.200px;top:1008.5px;">75</span><span class="t m ln" style="left:233.200px;top:1021.9px;">76</span><span class="t m c" style="left:303.2px;top:1021.9px;color:#141470;font-weight:bold;">fun</span><span class="t m c" style="left:329.9px;top:1021.9px;">addChannelClicked(</span><span class="t m c" style="left:450.05px;top:1021.9px;color:#787878;">view</span><span class="t m c" style="left:476.75px;top:1021.9px;">: View) {</span><span class="t m ln" style="left:233.200px;top:1035.3px;">77</span><span class="t m ln" style="left:233.200px;top:1048.7px;">78</span><span class="t m c" style="left:303.2px;top:1048.7px;">}</span><span class="t m ln" style="left:233.200px;top:1062.1px;">79</span><span class="t m ln" style="left:233.200px;top:1075.5px;">80</span><span class="t m c" style="left:303.2px;top:1075.5px;color:#141470;font-weight:bold;">fun</span><span class="t m c" style="left:329.9px;top:1075.5px;">sendMsgBtnClicked(</span><span class="t m c" style="left:450.05px;top:1075.5px;color:#787878;">view</span><span class="t m c" style="left:476.75px;top:1075.5px;">: View) {</span><span class="t m ln" style="left:233.200px;top:1088.9px;">81</span><span class="t m ln" style="left:233.200px;top:1102.3px;">82</span><span class="t m c" style="left:303.2px;top:1102.3px;">}</span><span class="t m ln" style="left:233.200px;top:1115.7px;">83</span><span class="t m c" style="left:276.5px;top:1115.7px;">}</span><span class="t m ln" style="left:233.200px;top:1129.1px;">84</span><div style="left:269.4px;top:744.9px;width:5.2px;height:5.2px;background:#fff;border:0.600px solid #d2d2d2;box-sizing:border-box;border-radius:1.500px;"></div><div style="left:269.4px;top:771.7px;width:5.2px;height:5.2px;background:#fff;border:0.600px solid #d2d2d2;box-sizing:border-box;border-radius:1.500px;"></div><div style="left:269.4px;top:785.1px;width:5.2px;height:5.2px;background:#fff;border:0.600px solid #d2d2d2;box-sizing:border-box;border-radius:1.500px;"></div><div style="left:269.4px;top:811.9px;width:5.2px;height:5.2px;background:#fff;border:0.600px solid #d2d2d2;box-sizing:border-box;border-radius:1.500px;"></div><div style="left:269.4px;top:838.7px;width:5.2px;height:5.2px;background:#fff;border:0.600px solid #d2d2d2;box-sizing:border-box;border-radius:1.500px;"></div><div style="left:269.4px;top:945.9px;width:5.2px;height:5.2px;background:#fff;border:0.600px solid #d2d2d2;box-sizing:border-box;border-radius:1.500px;"></div><div style="left:269.4px;top:986.1px;width:5.2px;height:5.2px;background:#fff;border:0.600px solid #d2d2d2;box-sizing:border-box;border-radius:1.500px;"></div><div style="left:269.4px;top:999.5px;width:5.2px;height:5.2px;background:#fff;border:0.600px solid #d2d2d2;box-sizing:border-box;border-radius:1.500px;"></div><div style="left:269.4px;top:1026.3px;width:5.2px;height:5.2px;background:#fff;border:0.600px solid #d2d2d2;box-sizing:border-box;border-radius:1.500px;"></div><div style="left:269.4px;top:1053.1px;width:5.2px;height:5.2px;background:#fff;border:0.600px solid #d2d2d2;box-sizing:border-box;border-radius:1.500px;"></div><div style="left:269.4px;top:1079.9px;width:5.2px;height:5.2px;background:#fff;border:0.600px solid #d2d2d2;box-sizing:border-box;border-radius:1.500px;"></div><div style="left:269.4px;top:1106.7px;width:5.2px;height:5.2px;background:#fff;border:0.600px solid #d2d2d2;box-sizing:border-box;border-radius:1.500px;"></div><div style="left:269.4px;top:1120.1px;width:5.2px;height:5.2px;background:#fff;border:0.600px solid #d2d2d2;box-sizing:border-box;border-radius:1.500px;"></div><div style="left:253px;top:891.9px;width:6px;height:6px;background:#f4f4f4;border:0.800px solid #c9c9c9;box-sizing:border-box;border-radius:50%;"></div><div style="left:1003.5px;top:738px;width:4.8px;height:4.8px;background:#e2cf3a;"></div><div style="left:1001px;top:986px;width:8.5px;height:1px;background:#b7c24a;"></div><div style="left:1001px;top:1053.4px;width:8.5px;height:1px;background:#b7c24a;"></div><div style="left:1001px;top:1095px;width:8.5px;height:1px;background:#b7c24a;"></div><div style="left:1001px;top:1136px;width:8.5px;height:1px;background:#b7c24a;"></div><div style="left:1001px;top:1157px;width:8.5px;height:1px;background:#b7c24a;"></div><div style="left:1004.5px;top:1029px;width:3.6px;height:177px;background:#c4c4c4;border-radius:2px;"></div><svg style="position:absolute;left:603.5px;top:1074.5px" width="6" height="9" viewBox="0 0 6 9"><path d="M0.500 0.500v7l1.800-1.600 1.200 2.600 1-0.500-1.200-2.500h2.300z" fill="#111" stroke="#fff" stroke-width="0.400"/></svg><div style="left:0px;top:702px;width:14.2px;height:533px;background:#e6e6e6;"></div><div style="left:13.6px;top:702px;width:0.7px;height:533px;background:#cfcfcf;"></div><div style="left:0px;top:702.5px;width:13.6px;height:51px;background:#bcbcbc;"></div><span class="t" style="left:-9.35px;top:718.18px;width:33.5px;height:8.43px;font-size:6.8px;line-height:8.43px;color:#333;transform:rotate(-90deg);text-align:center;letter-spacing:0.08px;">1: Project</span><div style="left:4.4px;top:740px;width:6px;height:6.5px;background:#8db33a;border-radius:1px;"></div><span class="t" style="left:-12.85px;top:774.18px;width:40.5px;height:8.43px;font-size:6.8px;line-height:8.43px;color:#444;transform:rotate(-90deg);text-align:center;letter-spacing:0.08px;">Z: Structure</span><svg style="position:absolute;left:3.4px;top:798.5px" width="8" height="8" viewBox="0 0 8 8"><path d="M1 4l5-3M1 4l5 3" stroke="#888" stroke-width="0.900"/><circle cx="1.500" cy="4" r="1.200" fill="#d66"/><circle cx="6.200" cy="1.200" r="1.200" fill="#888"/><circle cx="6.200" cy="6.800" r="1.200" fill="#888"/></svg><span class="t" style="left:-8.6px;top:829.98px;width:32px;height:8.43px;font-size:6.8px;line-height:8.43px;color:#444;transform:rotate(-90deg);text-align:center;letter-spacing:0.05px;">Captures</span><div style="left:4px;top:851px;width:6.8px;height:6.8px;background:#9aa3ab;border-radius:50%;"></div><span class="t" style="left:-16.1px;top:1104.78px;width:47px;height:8.43px;font-size:6.8px;line-height:8.43px;color:#444;transform:rotate(-90deg);text-align:center;letter-spacing:0.11px;">Build Variants</span><svg style="position:absolute;left:3.1px;top:1132.42px" width="8.5" height="8.16" viewBox="0 0 10 9.6"><path d="M1.800 3.600a3.200 3.200 0 0 1 6.400 0z" fill="#9bc53d"/><rect x="1.800" y="4.100" width="6.400" height="4.600" rx="0.700" fill="#9bc53d"/><rect x="0.300" y="4.100" width="1.100" height="3.600" rx="0.500" fill="#9bc53d"/><rect x="8.600" y="4.100" width="1.100" height="3.600" rx="0.500" fill="#9bc53d"/></svg><div style="left:0px;top:673px;width:1.2px;height:562px;background:#3c3c3c;"></div><div style="left:1009.8px;top:702px;width:14.2px;height:533px;background:#e6e6e6;"></div><div style="left:1009.6px;top:702px;width:0.7px;height:520px;background:#cfcfcf;"></div><svg style="position:absolute;left:1012.8px;top:709.1px" width="8.8" height="8.8" viewBox="0 0 8.8 8.8"><circle cx="4.4" cy="4.4" r="3.600" fill="#fff" stroke="#3fae49" stroke-width="1.300"/><path d="M3 2.600v3.600l3.200-1.800z" fill="#3fae49"/></svg><span class="t" style="left:1005.2px;top:726.28px;width:24px;height:8.43px;font-size:6.8px;line-height:8.43px;color:#333;transform:rotate(90deg);text-align:center;letter-spacing:-0.07px;">Gradle</span><div style="left:1013.8px;top:1132.5px;width:6px;height:7px;background:#f4f4f4;border:0.700px solid #888;box-sizing:border-box;border-radius:1px;"></div><span class="t" style="left:984.45px;top:1167.08px;width:65.5px;height:8.43px;font-size:6.8px;line-height:8.43px;color:#333;transform:rotate(90deg);text-align:center;letter-spacing:0.03px;">Device File Explorer</span><div style="left:0px;top:1208.5px;width:1024px;height:26.5px;background:#ececec;"></div><div style="left:0px;top:1208.5px;width:1024px;height:0.7px;background:#cfcfcf;"></div><span class="t" style="left:149.4px;top:1211.91px;font-size:6.6px;color:#333;letter-spacing:0.14px;">Profiler</span><svg style="position:absolute;left:186.9px;top:1212px" width="7" height="8" viewBox="0 0 7 8"><path d="M1.500 0.500v7M5.500 0.500c0 3-4 3-4 5" fill="none" stroke="#777" stroke-width="0.900"/></svg><span class="t" style="left:196.4px;top:1211.91px;font-size:6.6px;color:#333;letter-spacing:0.16px;">9: Version Control</span><div style="left:266.5px;top:1212.5px;width:7.5px;height:7px;background:#6b6b6b;border-radius:0.800px;"></div><div style="left:268px;top:1215px;width:3px;height:1.2px;background:#eee;"></div><span class="t" style="left:277px;top:1211.91px;font-size:6.6px;color:#333;letter-spacing:0.17px;">Terminal</span><svg style="position:absolute;left:891.5px;top:1212px" width="9" height="9" viewBox="0 0 9 9"><circle cx="4.500" cy="4" r="3.400" fill="none" stroke="#999" stroke-width="0.900"/></svg><span class="t" style="left:902.5px;top:1211.91px;font-size:6.6px;color:#333;letter-spacing:0.09px;">Event Log</span><div style="left:948px;top:1212.5px;width:7px;height:7px;background:#e8f0ee;border:0.800px solid #7a9a9a;box-sizing:border-box;"></div><span class="t" style="left:958px;top:1211.91px;font-size:6.6px;color:#333;letter-spacing:0.08px;">Gradle Console</span><span class="t" style="left:149px;top:1224.53px;font-size:6.4px;color:#333;letter-spacing:0.24px;">hed state) (3 minutes ago)</span><span class="t" style="left:774.4px;top:1224.53px;font-size:6.4px;color:#333;">74:6</span><span class="t" style="left:795px;top:1224.53px;font-size:6.4px;color:#333;">LF∶</span><span class="t" style="left:812.7px;top:1224.53px;font-size:6.4px;color:#333;">UTF-8∶</span><span class="t" style="left:842.4px;top:1224.53px;font-size:6.4px;color:#333;">Git: lesson-17 ∶</span><span class="t" style="left:898.7px;top:1224.53px;font-size:6.4px;color:#9a9a9a;letter-spacing:0.26px;">Context: &lt;no context&gt;</span><svg style="position:absolute;left:1px;top:1144.5px" width="147" height="91" viewBox="0 0 148 90" preserveAspectRatio="none"><defs><filter id="wb1" x="-10%" y="-10%" width="120%" height="120%"><feGaussianBlur stdDeviation="0.9"/></filter><linearGradient id="wd1" x1="0" x2="1" y1="0" y2="0"><stop offset="0" stop-color="#d6d3cc"/><stop offset="0.14" stop-color="#ececeb"/><stop offset="1" stop-color="#e5e4e1"/></linearGradient><linearGradient id="wh1" x1="0" x2="0" y1="0" y2="1"><stop offset="0" stop-color="#8e604b"/><stop offset="1" stop-color="#6e4838"/></linearGradient></defs><rect x="0" y="0" width="148" height="90" fill="#d4d1ca"/><g filter="url(#wb1)"><g transform="translate(0 0) scale(1)"><rect x="-12" y="-8" width="100" height="110" fill="#d5d2cb"/><rect x="79" y="-8" width="49" height="110" fill="url(#wd1)"/><rect x="127" y="-8" width="40" height="110" fill="#ccc8be"/><rect x="124.500" y="-8" width="3" height="110" fill="#f3f2ef"/><rect x="11.500" y="-8" width="53" height="22.500" fill="#efede8"/><rect x="15" y="-8" width="46.500" height="19.500" fill="#4a4c4f"/><path d="M19 8l8-4 26 1 6 4z" fill="#8d9196"/><rect x="30" y="8" width="22" height="1.500" fill="#7a4a4a"/><rect x="5.500" y="-8" width="2.200" height="24" fill="#3a3532"/><rect x="-12" y="-8" width="12.500" height="20" fill="#2e2c2b"/><rect x="-12" y="33" width="21.500" height="70" fill="#2a2423"/><rect x="-12" y="40" width="16" height="10" fill="#4a4745"/><rect x="-12" y="70" width="16" height="14" fill="#6b2a2c"/><rect x="17.500" y="28.500" width="11.500" height="3" fill="#eee8e2"/><rect x="20.500" y="31.500" width="6.500" height="17" fill="#7a3038"/><rect x="2" y="48" width="26.500" height="55" rx="2" fill="#dfe0e5"/><path d="M26 102V25q0-8 8-8h58q8 0 8 8V102z" fill="#282c35"/><path d="M31 102V30q0-7 6-8v80z" fill="#1f222a"/></g><g transform="rotate(3 76 49.6) translate(76 9.6) scale(0.99 1.03) translate(-76 -9.6)"><path d="M25 95c1-20 8-26 26-30l10-4h24l10 4c18 4 26 10 30 30z" fill="#88c4b0"/><path d="M32 95c4-14 10-20 22-24" fill="none" stroke="#79b3a0" stroke-width="1.500"/><path d="M58 60c0 24 6 31 18 31s18-7 18-31z" fill="#263049"/><path d="M62.5 58c0 20 5 25 13.500 25s13.500-5 13.500-25z" fill="#d9a797"/><ellipse cx="58" cy="43.6" rx="2.200" ry="4.500" fill="#dba594"/><ellipse cx="94" cy="43.6" rx="2.200" ry="4.500" fill="#dba594"/><path d="M58.5 35.6c0-16 8-22 17.500-22s17.500 6 17.500 22v14c0 16-8 24-17.500 24s-17.500-8-17.500-24z" fill="#e6b5a8"/><ellipse cx="76" cy="30.6" rx="10" ry="8" fill="#efc4b6"/><path d="M58.5 49.6c1 8 3 10 7 11c3-3 7-4 10.500-4s7.500 1 10.500 4c4-1 6-3 7-11l0.500 10c0 16-8 22-18 22s-18-6-18-22z" fill="#86604f"/><ellipse cx="76" cy="72.6" rx="9" ry="7" fill="#7a5544"/><ellipse cx="76" cy="62.1" rx="5" ry="1.600" fill="#c4958a"/><path d="M76 45.6l-2.500 9h5.500z" fill="#dca595"/><ellipse cx="68" cy="42.1" rx="4.200" ry="1.600" fill="#5e4038"/><ellipse cx="84" cy="42.1" rx="4.200" ry="1.600" fill="#5e4038"/><path d="M63.5 38.6h8M80.5 38.6h8" stroke="#8a6252" stroke-width="1.200"/><path d="M58 40.6c-2-10-2-20 4-26 5-6 22-7 28-1 6 6 6 16 4 27l-2.500-9c-1-5-3-8-6-9-6 2-14 2-20 0-3 1-4 4-5 9z" fill="url(#wh1)"/></g></g></svg><svg style="position:absolute;left:964px;top:1220.3px" width="60" height="16" viewBox="0 0 60 16"><text x="58.500" y="13.300" text-anchor="end" font-family="Liberation Sans, sans-serif" font-size="12.200" font-style="italic" font-weight="bold" fill="#fff" stroke="#000" stroke-width="1.200" stroke-linejoin="round" paint-order="stroke" letter-spacing="-0.150">00:05:57</text></svg></div></div></div>
<div style="left:0;top:1235px;width:1024px;height:576px;overflow:hidden;"><div class="fb" style="left:0;top:-1235px;width:1024px;height:1811px;"><div style="left:-6px;top:1229px;width:1036px;height:588px;background:#ececec;"></div><div class="fr" style="left:0;top:0;width:1024px;height:1811px;overflow:hidden;"><div style="left:0px;top:1235px;width:1024px;height:576px;background:#ececec;"></div><div style="left:0px;top:1235px;width:1024px;height:14px;background:#f7cbbf;"></div><div style="left:0px;top:1248.2px;width:1024px;height:1.1px;background:#a8806f;"></div><div style="left:0px;top:1235px;width:1024px;height:0.8px;background:#8f7466;"></div><svg style="position:absolute;left:13px;top:1236.6px" width="9" height="10" viewBox="0 0 18 20"><path fill="#2a1d1a" d="M12.2 0.3c0.1 1.2-0.4 2.3-1.1 3.1-0.8 0.9-1.9 1.5-3 1.4-0.1-1.1 0.4-2.3 1.1-3C10 0.9 11.200 0.400 12.2 0.3zM16 6.8c-1.300 0.800-2 2-2 3.400 0 1.700 1 3.100 2.500 3.700-0.400 1.200-1 2.300-1.700 3.300-0.900 1.300-1.800 2.500-3.200 2.500-1.300 0-1.700-0.800-3.300-0.800-1.500 0-2 0.800-3.300 0.800-1.300 0-2.300-1.200-3.200-2.500C0.100 14.600-0.600 10.800 0.900 8.300c1-1.700 2.600-2.700 4.300-2.700 1.400 0 2.500 0.900 3.400 0.900 0.900 0 2.200-1 3.900-0.900 1.300 0.100 2.600 0.600 3.500 1.200z"/></svg><span class="t" style="left:33px;top:1237.05px;font-size:8.3px;color:#3a2019;font-weight:bold;letter-spacing:0.18px;">Android Studio</span><span class="t" style="left:107.5px;top:1237.05px;font-size:8.3px;color:#3a2019;letter-spacing:-0.09px;">File</span><span class="t" style="left:132px;top:1237.05px;font-size:8.3px;color:#3a2019;letter-spacing:0.17px;">Edit</span><span class="t" style="left:158.5px;top:1237.05px;font-size:8.3px;color:#3a2019;letter-spacing:0.29px;">View</span><span class="t" style="left:189px;top:1237.05px;font-size:8.3px;color:#3a2019;letter-spacing:0.16px;">Navigate</span><span class="t" style="left:234.5px;top:1237.05px;font-size:8.3px;color:#3a2019;letter-spacing:0.29px;">Code</span><span class="t" style="left:267px;top:1237.05px;font-size:8.3px;color:#3a2019;letter-spacing:0.21px;">Analyze</span><span class="t" style="left:308.5px;top:1237.05px;font-size:8.3px;color:#3a2019;letter-spacing:0.27px;">Refactor</span><span class="t" style="left:353px;top:1237.05px;font-size:8.3px;color:#3a2019;letter-spacing:0.21px;">Build</span><span class="t" style="left:384px;top:1237.05px;font-size:8.3px;color:#3a2019;letter-spacing:0.09px;">Run</span><span class="t" style="left:411px;top:1237.05px;font-size:8.3px;color:#3a2019;letter-spacing:0.42px;">Tools</span><span class="t" style="left:443.5px;top:1237.05px;font-size:8.3px;color:#3a2019;letter-spacing:-0.02px;">VCS</span><span class="t" style="left:472px;top:1237.05px;font-size:8.3px;color:#3a2019;letter-spacing:0.08px;">Window</span><span class="t" style="left:514px;top:1237.05px;font-size:8.3px;color:#3a2019;letter-spacing:0.23px;">Help</span><svg style="position:absolute;left:904.5px;top:1238px" width="11" height="8" viewBox="0 0 11 8"><rect x="0.5" y="0.6" width="7.4" height="6.600" rx="0.8" fill="none" stroke="#3a2420" stroke-width="0.9"/><circle cx="4.2" cy="3.900" r="1.4" fill="#3a2420"/><path d="M8.2 3.900L10.5 1.800V6Z" fill="none" stroke="#3a2420" stroke-width="0.8"/></svg><svg style="position:absolute;left:925px;top:1237.7px" width="9" height="9" viewBox="0 0 9 9"><circle cx="3.600" cy="3.600" r="2.700" fill="none" stroke="#3a2420" stroke-width="1"/><path d="M5.600 5.600L8.400 8.400" stroke="#3a2420" stroke-width="1.2"/></svg><svg style="position:absolute;left:945.5px;top:1238px" width="8" height="8" viewBox="0 0 8 8"><path d="M4 1.200L7.400 5H0.600Z M0.600 6H7.400V7.200H0.600Z" fill="#3a2420"/></svg><div style="left:963.6px;top:1241.1px;width:2px;height:2px;background:#3a2420;border-radius:50%;"></div><div style="left:967.1px;top:1241.1px;width:2px;height:2px;background:#3a2420;border-radius:50%;"></div><div style="left:970.6px;top:1241.1px;width:2px;height:2px;background:#3a2420;border-radius:50%;"></div><div style="left:981.8px;top:1237.4px;width:9.2px;height:9.2px;background:radial-gradient(circle at 50% 75%,#a78cc0 0,#5c2f7c 45%,#24102f 100%);border-radius:50%;"></div><div style="left:998px;top:1239px;width:11px;height:1px;background:#dcbab2;"></div><div style="left:998px;top:1241.5px;width:11px;height:1px;background:#dcbab2;"></div><div style="left:998px;top:1244px;width:11px;height:1px;background:#dcbab2;"></div><div style="left:0px;top:1249px;width:1024px;height:14px;background:linear-gradient(#ebebeb,#dcdcdc);"></div><div style="left:0px;top:1262.5px;width:1024px;height:0.8px;background:#c4c4c4;"></div><div style="left:5.2px;top:1252px;width:8px;height:8px;background:#ee4f5d;border-radius:50%;"></div><div style="left:17.2px;top:1252px;width:8px;height:8px;background:#f6b83f;border-radius:50%;"></div><div style="left:29.2px;top:1252px;width:8px;height:8px;background:#3fc84f;border-radius:50%;"></div><div style="left:375px;top:1251.6px;width:5.6px;height:7.4px;background:#fdfdfd;border-radius:0.6px;box-shadow:0 0 0.6px #999;"></div><span class="t" style="left:382px;top:1250.89px;font-size:7.6px;color:#4a4a4a;letter-spacing:0.38px;">MainActivity.kt - Smack - [~/Desktop/Smack] - Android Studio 3.0 Beta 2</span><div style="left:0px;top:1263.3px;width:1024px;height:15px;background:#ececec;"></div><svg style="position:absolute;left:7.4px;top:1266.8px" width="9.2" height="8.6" viewBox="0 0 9.2 8.6"><path d="M0.3 1.2h3.4l0.9 1h4.1v5.300h-8.4z" fill="#a9b4bc"/><rect x="5.6" y="5" width="3.4" height="3.400" fill="#40b6e0"/></svg><span class="t" style="left:18px;top:1266.54px;font-size:7.2px;color:#2e2e2e;font-weight:bold;letter-spacing:-0.44px;">Smack</span><svg style="position:absolute;left:42.2px;top:1265px" width="4" height="12" viewBox="0 0 4 12"><path d="M0.500 0.500l3 5.500-3 5.500" fill="none" stroke="#a8a8a8" stroke-width="0.700"/></svg><svg style="position:absolute;left:48.4px;top:1266.8px" width="9.2" height="8.6" viewBox="0 0 9.2 8.6"><path d="M0.3 1.2h3.4l0.9 1h4.1v5.300h-8.4z" fill="#a9b4bc"/><rect x="5.6" y="5" width="3.4" height="3.400" fill="#40b6e0"/></svg><span class="t" style="left:59px;top:1266.54px;font-size:7.2px;color:#2e2e2e;font-weight:bold;letter-spacing:-0.27px;">app</span><svg style="position:absolute;left:74.2px;top:1265px" width="4" height="12" viewBox="0 0 4 12"><path d="M0.500 0.500l3 5.500-3 5.500" fill="none" stroke="#a8a8a8" stroke-width="0.700"/></svg><svg style="position:absolute;left:80.4px;top:1266.8px" width="9.2" height="8.6" viewBox="0 0 9.2 8.6"><path d="M0.3 1.2h3.4l0.9 1h4.1v5.300h-8.4z" fill="#a9b4bc"/></svg><span class="t" style="left:91px;top:1266.54px;font-size:7.2px;color:#2e2e2e;letter-spacing:-0.2px;text-decoration:underline wavy #e0606a 0.6px;text-underline-offset:0.8px;">src</span><svg style="position:absolute;left:103.2px;top:1265px" width="4" height="12" viewBox="0 0 4 12"><path d="M0.500 0.500l3 5.500-3 5.500" fill="none" stroke="#a8a8a8" stroke-width="0.700"/></svg><svg style="position:absolute;left:108.9px;top:1266.8px" width="9.2" height="8.6" viewBox="0 0 9.2 8.6"><path d="M0.3 1.2h3.4l0.9 1h4.1v5.300h-8.4z" fill="#a9b4bc"/></svg><span class="t" style="left:119.5px;top:1266.54px;font-size:7.2px;color:#2e2e2e;letter-spacing:-0.03px;text-decoration:underline wavy #e0606a 0.6px;text-underline-offset:0.8px;">main</span><svg style="position:absolute;left:138.2px;top:1265px" width="4" height="12" viewBox="0 0 4 12"><path d="M0.500 0.500l3 5.500-3 5.500" fill="none" stroke="#a8a8a8" stroke-width="0.700"/></svg><svg style="position:absolute;left:143.4px;top:1266.8px" width="9.2" height="8.6" viewBox="0 0 9.2 8.6"><path d="M0.3 1.2h3.4l0.9 1h4.1v5.300h-8.4z" fill="#7ec3e6"/></svg><span class="t" style="left:154px;top:1266.54px;font-size:7.2px;color:#2e2e2e;letter-spacing:-0.05px;text-decoration:underline wavy #e0606a 0.6px;text-underline-offset:0.8px;">java</span><svg style="position:absolute;left:170.2px;top:1265px" width="4" height="12" viewBox="0 0 4 12"><path d="M0.500 0.500l3 5.500-3 5.500" fill="none" stroke="#a8a8a8" stroke-width="0.700"/></svg><svg style="position:absolute;left:176.4px;top:1266.8px" width="9.2" height="8.6" viewBox="0 0 9.2 8.6"><path d="M0.3 1.2h3.4l0.9 1h4.1v5.300h-8.4z" fill="#b7bcc0"/><rect x="1.4" y="3.6" width="2.6" height="2.4" fill="#eef0f1"/></svg><span class="t" style="left:187px;top:1266.54px;font-size:7.2px;color:#2e2e2e;letter-spacing:-0.2px;text-decoration:underline wavy #e0606a 0.6px;text-underline-offset:0.8px;">com</span><svg style="position:absolute;left:203.2px;top:1265px" width="4" height="12" viewBox="0 0 4 12"><path d="M0.500 0.500l3 5.500-3 5.500" fill="none" stroke="#a8a8a8" stroke-width="0.700"/></svg><svg style="position:absolute;left:208.9px;top:1266.8px" width="9.2" height="8.6" viewBox="0 0 9.2 8.6"><path d="M0.3 1.2h3.4l0.9 1h4.1v5.300h-8.4z" fill="#b7bcc0"/><rect x="1.4" y="3.6" width="2.6" height="2.4" fill="#eef0f1"/></svg><span class="t" style="left:219.5px;top:1266.54px;font-size:7.2px;color:#2e2e2e;letter-spacing:-0.03px;text-decoration:underline wavy #e0606a 0.6px;text-underline-offset:0.8px;">example</span><svg style="position:absolute;left:249.7px;top:1265px" width="4" height="12" viewBox="0 0 4 12"><path d="M0.500 0.500l3 5.500-3 5.500" fill="none" stroke="#a8a8a8" stroke-width="0.700"/></svg><svg style="position:absolute;left:254.8px;top:1266.8px" width="9.2" height="8.6" viewBox="0 0 9.2 8.6"><path d="M0.3 1.2h3.4l0.9 1h4.1v5.300h-8.4z" fill="#b7bcc0"/><rect x="1.4" y="3.6" width="2.6" height="2.4" fill="#eef0f1"/></svg><span class="t" style="left:265.4px;top:1266.54px;font-size:7.2px;color:#2e2e2e;letter-spacing:-0.02px;text-decoration:underline wavy #e0606a 0.6px;text-underline-offset:0.8px;">jonnyb</span><svg style="position:absolute;left:289.7px;top:1265px" width="4" height="12" viewBox="0 0 4 12"><path d="M0.500 0.500l3 5.500-3 5.500" fill="none" stroke="#a8a8a8" stroke-width="0.700"/></svg><svg style="position:absolute;left:295.8px;top:1266.8px" width="9.2" height="8.6" viewBox="0 0 9.2 8.6"><path d="M0.3 1.2h3.4l0.9 1h4.1v5.300h-8.4z" fill="#b7bcc0"/><rect x="1.4" y="3.6" width="2.6" height="2.4" fill="#eef0f1"/></svg><span class="t" style="left:306.4px;top:1266.54px;font-size:7.2px;color:#2e2e2e;letter-spacing:-0.04px;text-decoration:underline wavy #e0606a 0.6px;text-underline-offset:0.8px;">smack</span><svg style="position:absolute;left:330.2px;top:1265px" width="4" height="12" viewBox="0 0 4 12"><path d="M0.500 0.500l3 5.500-3 5.500" fill="none" stroke="#a8a8a8" stroke-width="0.700"/></svg><svg style="position:absolute;left:336px;top:1266.8px" width="9.2" height="8.6" viewBox="0 0 9.2 8.6"><path d="M0.3 1.2h3.4l0.9 1h4.1v5.300h-8.4z" fill="#b7bcc0"/><rect x="1.4" y="3.6" width="2.6" height="2.4" fill="#eef0f1"/></svg><span class="t" style="left:346.6px;top:1266.54px;font-size:7.2px;color:#2e2e2e;letter-spacing:-0.11px;text-decoration:underline wavy #e0606a 0.6px;text-underline-offset:0.8px;">Controller</span><svg style="position:absolute;left:379.9px;top:1265px" width="4" height="12" viewBox="0 0 4 12"><path d="M0.500 0.500l3 5.500-3 5.500" fill="none" stroke="#a8a8a8" stroke-width="0.700"/></svg><svg style="position:absolute;left:385.8px;top:1266.4px" width="9.2" height="10" viewBox="0 0 9.2 10"><circle cx="4.2" cy="4.2" r="3.500" fill="#58a9c6"/><path d="M5.5 3.100a1.800 1.800 0 1 0 0 2.300" stroke="#fff" stroke-width="1" fill="none"/><path d="M5 6h3.600v3.400h-3.600z" fill="#5b8fd0"/><path d="M5 9.400l3.600-3.400h-3.600z" fill="#7fb3e0"/></svg><span class="t" style="left:396.4px;top:1266.54px;font-size:7.2px;color:#2e2e2e;letter-spacing:0.08px;text-decoration:underline wavy #e0606a 0.6px;text-underline-offset:0.8px;">MainActivity.kt</span><svg style="position:absolute;left:446.2px;top:1265px" width="4" height="12" viewBox="0 0 4 12"><path d="M0.500 0.500l3 5.500-3 5.500" fill="none" stroke="#a8a8a8" stroke-width="0.700"/></svg><svg style="position:absolute;left:710px;top:1265.1px" width="10" height="10" viewBox="0 0 10 10"><path d="M1 2.500l3-2 3 2.200-1.200 1.300-1.300-0.800z" fill="#4c9e4c"/><path d="M4.600 4l4.400 5" stroke="#4c9e4c" stroke-width="1.500"/></svg><div style="left:727px;top:1264.5px;width:35px;height:11.2px;background:#fafafa;border-radius:2px;box-shadow:0 0 0.5px #aaa;"></div><svg style="position:absolute;left:730px;top:1266.5px" width="9" height="8" viewBox="0 0 9 8"><rect x="0.500" y="1" width="7.500" height="5.500" fill="none" stroke="#b9a24a" stroke-width="1"/><rect x="5" y="4" width="3.500" height="3.500" fill="#9bc53d"/></svg><span class="t" style="left:740.6px;top:1265.76px;font-size:7px;color:#333;letter-spacing:-0.06px;">app</span><svg style="position:absolute;left:754px;top:1268.6px" width="5" height="4" viewBox="0 0 5 4"><path d="M0.300 0.500h4.400l-2.200 3z" fill="#777"/></svg><svg style="position:absolute;left:768.5px;top:1265.1px" width="9" height="10" viewBox="0 0 9 10"><path d="M0.800 0.600v8.800l7.600-4.400z" fill="#3aa544"/></svg><svg style="position:absolute;left:785px;top:1265.6px" width="6" height="9" viewBox="0 0 6 9"><path d="M3.500 0.300l-3 4.700h2.200l-0.700 3.700 3.300-5h-2.300z" fill="#c5c5c5"/></svg><svg style="position:absolute;left:798.5px;top:1265.1px" width="9" height="10" viewBox="0 0 9 10"><ellipse cx="4.500" cy="5.800" rx="3" ry="3.600" fill="#5a9a50"/><circle cx="4.500" cy="2.200" r="1.700" fill="#5a9a50"/><path d="M0.500 4h8M0.500 7h8" stroke="#5a9a50" stroke-width="0.800"/></svg><svg style="position:absolute;left:813.5px;top:1265.1px" width="9" height="10" viewBox="0 0 9 10"><rect x="1" y="5" width="2" height="4.500" fill="#c2c2c2"/><rect x="3.800" y="1" width="2" height="8.500" fill="#c2c2c2"/><rect x="6.500" y="4" width="2" height="5.500" fill="#d2d2d2"/></svg><svg style="position:absolute;left:829.5px;top:1265.1px" width="9" height="10" viewBox="0 0 9 10"><rect x="1" y="0.600" width="5.500" height="8.800" rx="0.800" fill="none" stroke="#777" stroke-width="1"/><path d="M4.500 4v5.500l4.200-2.700z" fill="#3aa544"/></svg><div style="left:845.4px;top:1266.5px;width:7.2px;height:7.2px;background:#bdbdbd;"></div><div style="left:858px;top:1264.6px;width:0.8px;height:11px;background:#c9c9c9;"></div><div style="left:923px;top:1264.6px;width:0.8px;height:11px;background:#c9c9c9;"></div><div style="left:971px;top:1264.6px;width:0.8px;height:11px;background:#c9c9c9;"></div><span class="t" style="left:861px;top:1264.65px;font-size:4.6px;color:#555;font-weight:bold;letter-spacing:0.18px;">VCS</span><svg style="position:absolute;left:862.5px;top:1269.6px" width="7" height="6" viewBox="0 0 7 6"><path d="M2.500 0h2v2.500h2l-3 3.200-3-3.200h2z" fill="#3b82c4"/></svg><span class="t" style="left:878px;top:1264.65px;font-size:4.6px;color:#555;font-weight:bold;letter-spacing:0.18px;">VCS</span><svg style="position:absolute;left:879.5px;top:1269.6px" width="7" height="6" viewBox="0 0 7 6"><path d="M2.500 5.700h2v-2.500h2l-3-3.200-3 3.200h2z" fill="#4c9e4c"/></svg><svg style="position:absolute;left:893px;top:1265.1px" width="10" height="10" viewBox="0 0 10 10"><rect x="0.600" y="1" width="7" height="5.500" fill="none" stroke="#555" stroke-width="1"/><rect x="5" y="4.500" width="4.500" height="4.500" fill="#5a9a50"/></svg><svg style="position:absolute;left:908px;top:1265.6px" width="10" height="9" viewBox="0 0 10 9"><path d="M2.500 3h4a2.400 2.400 0 0 1 0 4.800h-4.500" fill="none" stroke="#6a4aa6" stroke-width="1.500"/><path d="M3.500 0.500l-3 2.500 3 2.500z" fill="#6a4aa6"/></svg><svg style="position:absolute;left:927.5px;top:1265.6px" width="11" height="9" viewBox="0 0 11 9"><path d="M1 8a4.500 4.500 0 0 1 9 0" fill="none" stroke="#3b82c4" stroke-width="1.400"/><path d="M5.500 8l2.500-4" stroke="#4c9e4c" stroke-width="1.200"/></svg><svg style="position:absolute;left:943.5px;top:1265.1px" width="9" height="10" viewBox="0 0 9 10"><path d="M3.500 0.500h2v4.500h2l-3 3-3-3h2z" fill="#3b82c4"/><rect x="0.500" y="8.300" width="8" height="1.400" fill="#4c9e4c"/></svg><svg style="position:absolute;left:957.5px;top:1265.1px" width="9" height="10" viewBox="0 0 9 10"><rect x="1.500" y="0.500" width="5.500" height="9" fill="#9a8fc0"/><rect x="4.500" y="5" width="4" height="4.500" fill="#e09a4a"/><rect x="2.500" y="2" width="3.500" height="1" fill="#fff"/></svg><svg style="position:absolute;left:975.5px;top:1265.6px" width="11" height="9" viewBox="0 0 11 9"><path d="M0.500 1h4l1 1.200h5v6.300h-10z" fill="none" stroke="#3b78b4" stroke-width="1.200"/><rect x="5.500" y="4.500" width="3.500" height="3" fill="#3b78b4"/></svg><svg style="position:absolute;left:995px;top:1265.06px" width="10.08" height="10.08" viewBox="0 0 9.6 9.6"><circle cx="3.800" cy="3.800" r="2.800" fill="none" stroke="#666" stroke-width="1.100"/><path d="M5.900 5.900L9 9" stroke="#666" stroke-width="1.300"/></svg><svg style="position:absolute;left:1010px;top:1264.6px" width="10" height="11" viewBox="0 0 10 11"><rect x="0" y="0" width="10" height="11" fill="#c6c6c6"/><circle cx="5" cy="4" r="2.300" fill="#f2f2f2"/><path d="M1 11a4 4 0 0 1 8 0z" fill="#f2f2f2"/></svg><div style="left:14.3px;top:1278.3px;width:215.7px;height:14.8px;background:#e4e4e4;"></div><div style="left:14.3px;top:1292.6px;width:215.7px;height:0.7px;background:#c8c8c8;"></div><svg style="position:absolute;left:18.5px;top:1281.44px" width="9.5" height="9.12" viewBox="0 0 10 9.6"><path d="M1.800 3.600a3.200 3.200 0 0 1 6.400 0z" fill="#9bc53d"/><rect x="1.800" y="4.100" width="6.400" height="4.600" rx="0.700" fill="#9bc53d"/><rect x="0.300" y="4.100" width="1.100" height="3.600" rx="0.500" fill="#9bc53d"/><rect x="8.600" y="4.100" width="1.100" height="3.600" rx="0.500" fill="#9bc53d"/></svg><span class="t" style="left:31px;top:1281.54px;font-size:7.2px;color:#6a6a6a;letter-spacing:-0.19px;">Android</span><svg style="position:absolute;left:121.5px;top:1284.7px" width="5" height="4" viewBox="0 0 5 4"><path d="M0.300 0.300h4.400l-2.200 3z" fill="#666"/></svg><svg style="position:absolute;left:170px;top:1281.8px" width="8.5" height="8.5" viewBox="0 0 8.5 8.5"><circle cx="4.200" cy="4.200" r="3.400" fill="none" stroke="#777" stroke-width="1"/><path d="M2.700 2.700l3 3M5.700 2.700l-3 3" stroke="#777" stroke-width="0.900"/></svg><svg style="position:absolute;left:183.5px;top:1282px" width="8" height="8" viewBox="0 0 8 8"><path d="M4 0.500v7M0.500 4h7" stroke="#888" stroke-width="0.900"/><path d="M4 0l1.300 1.800h-2.600zM4 8l1.300-1.800h-2.600z" fill="#888"/></svg><div style="left:196px;top:1281.5px;width:0.8px;height:9px;background:#c9c9c9;"></div><svg style="position:absolute;left:201px;top:1281.5px" width="13" height="9" viewBox="0 0 13 9"><circle cx="4.500" cy="4.500" r="2.500" fill="none" stroke="#5a5a5a" stroke-width="1.800" stroke-dasharray="1.300 0.660"/><circle cx="4.500" cy="4.500" r="1.700" fill="none" stroke="#5a5a5a" stroke-width="1.200"/><path d="M10 4l1.500 1.600 1.500-1.600z" fill="#5a5a5a"/></svg><svg style="position:absolute;left:218px;top:1281.5px" width="9" height="9" viewBox="0 0 9 9"><path d="M1.500 0.800v7.400" stroke="#5a5a5a" stroke-width="1.200"/><path d="M3 4.500h4.500M3 4.500l2-1.800M3 4.500l2 1.800" stroke="#5a5a5a" stroke-width="0.900" fill="none"/></svg><div style="left:230px;top:1278.3px;width:780px;height:15px;background:#e6e6e6;"></div><div style="left:230px;top:1278.3px;width:738px;height:15px;background:#d6d6d6;"></div><div style="left:230px;top:1292.8px;width:780px;height:0.7px;background:#bdbdbd;"></div><div style="left:311.6px;top:1279.5px;width:0.6px;height:12.5px;background:#c2c2c2;"></div><svg style="position:absolute;left:236.5px;top:1281.9px" width="9.2" height="10" viewBox="0 0 9.2 10"><circle cx="4.2" cy="4.2" r="3.500" fill="#58a9c6"/><path d="M5.5 3.100a1.800 1.800 0 1 0 0 2.300" stroke="#fff" stroke-width="1" fill="none"/><path d="M5 6h3.600v3.400h-3.600z" fill="#5b8fd0"/><path d="M5 9.400l3.600-3.400h-3.600z" fill="#7fb3e0"/></svg><span class="t" style="left:247px;top:1282.22px;font-size:6.9px;color:#3a3a3a;letter-spacing:0.22px;">LoginActivity.kt</span><svg style="position:absolute;left:301px;top:1284.3px" width="5" height="5" viewBox="0 0 5 5"><path d="M0.600 0.600l3.800 3.800M4.400 0.600l-3.800 3.800" stroke="#aaa" stroke-width="0.800"/></svg><div style="left:417.6px;top:1279.5px;width:0.6px;height:12.5px;background:#c2c2c2;"></div><svg style="position:absolute;left:316px;top:1281.7px" width="8.8" height="9.2" viewBox="0 0 8.8 9.2"><path d="M1.800 0.300h3.800l1.800 1.800v3.400h-5.600z" fill="#c3c6cb"/><rect x="0.400" y="5" width="7.600" height="3.500" rx="0.500" fill="#e8a040"/><path d="M2.900 5.700l-1.200 1 1.200 1M5.500 5.700l1.200 1-1.200 1" stroke="#7a4a12" stroke-width="0.700" fill="none"/></svg><span class="t" style="left:326.5px;top:1282.22px;font-size:6.9px;color:#4f8f4f;letter-spacing:0.05px;">add_channel_dialog.xml</span><svg style="position:absolute;left:407px;top:1284.3px" width="5" height="5" viewBox="0 0 5 5"><path d="M0.600 0.600l3.800 3.800M4.400 0.600l-3.800 3.800" stroke="#aaa" stroke-width="0.800"/></svg><div style="left:523.1px;top:1279.5px;width:0.6px;height:12.5px;background:#c2c2c2;"></div><svg style="position:absolute;left:422px;top:1281.7px" width="8.8" height="9.2" viewBox="0 0 8.8 9.2"><path d="M1.800 0.300h3.800l1.800 1.800v3.400h-5.600z" fill="#c3c6cb"/><rect x="0.400" y="5" width="7.600" height="3.500" rx="0.500" fill="#e8a040"/><path d="M2.900 5.700l-1.200 1 1.200 1M5.500 5.700l1.200 1-1.200 1" stroke="#7a4a12" stroke-width="0.700" fill="none"/></svg><span class="t" style="left:432.5px;top:1282.22px;font-size:6.9px;color:#3a3a3a;letter-spacing:0.06px;">activity_create_user.xml</span><svg style="position:absolute;left:512.5px;top:1284.3px" width="5" height="5" viewBox="0 0 5 5"><path d="M0.600 0.600l3.800 3.800M4.400 0.600l-3.800 3.800" stroke="#aaa" stroke-width="0.800"/></svg><div style="left:620.6px;top:1279.5px;width:0.6px;height:12.5px;background:#c2c2c2;"></div><svg style="position:absolute;left:527.5px;top:1281.9px" width="9.2" height="10" viewBox="0 0 9.2 10"><circle cx="4.2" cy="4.2" r="3.500" fill="#58a9c6"/><path d="M5.5 3.100a1.800 1.800 0 1 0 0 2.300" stroke="#fff" stroke-width="1" fill="none"/><path d="M5 6h3.600v3.400h-3.600z" fill="#5b8fd0"/><path d="M5 9.400l3.600-3.400h-3.600z" fill="#7fb3e0"/></svg><span class="t" style="left:538px;top:1282.22px;font-size:6.9px;color:#3a3a3a;letter-spacing:0.15px;">CreateUserActivity.kt</span><svg style="position:absolute;left:610px;top:1284.3px" width="5" height="5" viewBox="0 0 5 5"><path d="M0.600 0.600l3.800 3.800M4.400 0.600l-3.800 3.800" stroke="#aaa" stroke-width="0.800"/></svg><div style="left:718.6px;top:1279.5px;width:0.6px;height:12.5px;background:#c2c2c2;"></div><svg style="position:absolute;left:624.5px;top:1281.7px" width="8.8" height="9.2" viewBox="0 0 8.8 9.2"><path d="M1.800 0.300h3.800l1.800 1.800v3.400h-5.600z" fill="#c3c6cb"/><rect x="0.400" y="5" width="7.600" height="3.500" rx="0.500" fill="#e8a040"/><path d="M2.900 5.700l-1.200 1 1.200 1M5.500 5.700l1.200 1-1.200 1" stroke="#7a4a12" stroke-width="0.700" fill="none"/></svg><span class="t" style="left:635px;top:1282.22px;font-size:6.9px;color:#3a3a3a;letter-spacing:0.01px;">nav_header_main.xml</span><svg style="position:absolute;left:708px;top:1284.3px" width="5" height="5" viewBox="0 0 5 5"><path d="M0.600 0.600l3.800 3.800M4.400 0.600l-3.800 3.800" stroke="#aaa" stroke-width="0.800"/></svg><div style="left:717px;top:1278.3px;width:80px;height:15.2px;background:#f7f7f7;"></div><svg style="position:absolute;left:722.5px;top:1281.9px" width="9.2" height="10" viewBox="0 0 9.2 10"><circle cx="4.2" cy="4.2" r="3.500" fill="#58a9c6"/><path d="M5.5 3.100a1.800 1.800 0 1 0 0 2.300" stroke="#fff" stroke-width="1" fill="none"/><path d="M5 6h3.600v3.400h-3.600z" fill="#5b8fd0"/><path d="M5 9.400l3.600-3.400h-3.600z" fill="#7fb3e0"/></svg><span class="t" style="left:733px;top:1282.22px;font-size:6.9px;color:#1d1d8a;letter-spacing:0.29px;text-decoration:underline wavy #e0606a 0.6px;text-underline-offset:0.8px;">MainActivity.kt</span><svg style="position:absolute;left:786px;top:1284.3px" width="5" height="5" viewBox="0 0 5 5"><path d="M0.600 0.600l3.800 3.800M4.400 0.600l-3.800 3.800" stroke="#888" stroke-width="0.800"/></svg><div style="left:891.6px;top:1279.5px;width:0.6px;height:12.5px;background:#c2c2c2;"></div><svg style="position:absolute;left:800.5px;top:1281.7px" width="8.8" height="9.2" viewBox="0 0 8.8 9.2"><path d="M1.800 0.300h3.800l1.800 1.800v3.400h-5.600z" fill="#c3c6cb"/><rect x="0.400" y="5" width="7.600" height="3.500" rx="0.500" fill="#e8a040"/><path d="M2.900 5.700l-1.200 1 1.200 1M5.500 5.700l1.200 1-1.200 1" stroke="#7a4a12" stroke-width="0.700" fill="none"/></svg><span class="t" style="left:811px;top:1282.22px;font-size:6.9px;color:#3a3a3a;letter-spacing:0.13px;">AndroidManifest.xml</span><svg style="position:absolute;left:881px;top:1284.3px" width="5" height="5" viewBox="0 0 5 5"><path d="M0.600 0.600l3.800 3.800M4.400 0.600l-3.800 3.800" stroke="#aaa" stroke-width="0.800"/></svg><div style="left:967.6px;top:1279.5px;width:0.6px;height:12.5px;background:#c2c2c2;"></div><svg style="position:absolute;left:895.5px;top:1281.9px" width="9.2" height="10" viewBox="0 0 9.2 10"><circle cx="4.2" cy="4.2" r="3.500" fill="#58a9c6"/><path d="M5.5 3.100a1.800 1.800 0 1 0 0 2.300" stroke="#fff" stroke-width="1" fill="none"/><path d="M5 6h3.600v3.400h-3.600z" fill="#5b8fd0"/><path d="M5 9.400l3.600-3.400h-3.600z" fill="#7fb3e0"/></svg><span class="t" style="left:906px;top:1282.22px;font-size:6.9px;color:#3a3a3a;letter-spacing:0.11px;">AuthService.kt</span><svg style="position:absolute;left:957px;top:1284.3px" width="5" height="5" viewBox="0 0 5 5"><path d="M0.600 0.600l3.800 3.800M4.400 0.600l-3.800 3.800" stroke="#aaa" stroke-width="0.800"/></svg><span class="t" style="left:992.5px;top:1282.28px;font-size:6px;color:#555;">‣≡ 2</span><div style="left:14px;top:1293px;width:216px;height:491px;background:#fff;"></div><svg style="position:absolute;left:14.6px;top:1296.1px" width="6.6" height="6.6" viewBox="0 0 6.6 6.6"><path d="M0.600 1.500h5.400l-2.700 3.900z" fill="#a0a0a0"/></svg><svg style="position:absolute;left:27px;top:1295.2px" width="9.2" height="8.6" viewBox="0 0 9.2 8.6"><path d="M0.3 1.2h3.4l0.9 1h4.1v5.300h-8.4z" fill="#a9b4bc"/><rect x="5.6" y="5" width="3.4" height="3.400" fill="#40b6e0"/></svg><span class="t" style="left:37.8px;top:1294.5px;font-size:7.9px;color:#262626;font-weight:bold;letter-spacing:0.39px;text-decoration:underline wavy #e0606a 0.6px;text-underline-offset:0.8px;">app</span><svg style="position:absolute;left:26.8px;top:1307.67px" width="6.6" height="6.6" viewBox="0 0 6.6 6.6"><path d="M1.500 0.600v5.400l3.900-2.700z" fill="#a0a0a0"/></svg><svg style="position:absolute;left:39.2px;top:1306.77px" width="9.2" height="8.6" viewBox="0 0 9.2 8.6"><path d="M0.3 1.2h3.4l0.9 1h4.1v5.300h-8.4z" fill="#7ec3e6"/></svg><span class="t" style="left:50px;top:1306.07px;font-size:7.9px;color:#262626;letter-spacing:0.31px;">manifests</span><svg style="position:absolute;left:26.8px;top:1319.23px" width="6.6" height="6.6" viewBox="0 0 6.6 6.6"><path d="M0.600 1.500h5.400l-2.700 3.900z" fill="#a0a0a0"/></svg><svg style="position:absolute;left:39.2px;top:1318.33px" width="9.2" height="8.6" viewBox="0 0 9.2 8.6"><path d="M0.3 1.2h3.4l0.9 1h4.1v5.300h-8.4z" fill="#7ec3e6"/></svg><span class="t" style="left:50px;top:1317.63px;font-size:7.9px;color:#262626;letter-spacing:0.3px;text-decoration:underline wavy #e0606a 0.6px;text-underline-offset:0.8px;">java</span><svg style="position:absolute;left:39px;top:1330.8px" width="6.6" height="6.6" viewBox="0 0 6.6 6.6"><path d="M0.600 1.500h5.400l-2.700 3.900z" fill="#a0a0a0"/></svg><svg style="position:absolute;left:51.4px;top:1329.89px" width="9.2" height="8.6" viewBox="0 0 9.2 8.6"><path d="M0.3 1.2h3.4l0.9 1h4.1v5.300h-8.4z" fill="#b7bcc0"/><rect x="1.4" y="3.6" width="2.6" height="2.4" fill="#eef0f1"/></svg><span class="t" style="left:62.2px;top:1329.2px;font-size:7.9px;color:#262626;letter-spacing:0.33px;text-decoration:underline wavy #e0606a 0.6px;text-underline-offset:0.8px;">com.example.jonnyb.smack</span><svg style="position:absolute;left:51.2px;top:1342.36px" width="6.6" height="6.6" viewBox="0 0 6.6 6.6"><path d="M0.600 1.500h5.400l-2.700 3.900z" fill="#a0a0a0"/></svg><svg style="position:absolute;left:63.6px;top:1341.46px" width="9.2" height="8.6" viewBox="0 0 9.2 8.6"><path d="M0.3 1.2h3.4l0.9 1h4.1v5.300h-8.4z" fill="#b7bcc0"/><rect x="1.4" y="3.6" width="2.6" height="2.4" fill="#eef0f1"/></svg><span class="t" style="left:74.4px;top:1340.76px;font-size:7.9px;color:#262626;letter-spacing:0.28px;text-decoration:underline wavy #e0606a 0.6px;text-underline-offset:0.8px;">Controller</span><svg style="position:absolute;left:76.5px;top:1352.63px" width="9.2" height="10" viewBox="0 0 9.2 10"><circle cx="4.2" cy="4.2" r="3.500" fill="#58a9c6"/><path d="M5.5 3.100a1.800 1.800 0 1 0 0 2.300" stroke="#fff" stroke-width="1" fill="none"/><path d="M5 6h3.600v3.400h-3.600z" fill="#5b8fd0"/><path d="M5 9.400l3.600-3.400h-3.600z" fill="#7fb3e0"/></svg><div style="left:88px;top:1355.93px;width:3.6px;height:3px;background:#c4dca8;border-radius:1px;"></div><span class="t" style="left:96px;top:1352.33px;font-size:7.9px;color:#262626;letter-spacing:0.3px;">CreateUserActivity</span><svg style="position:absolute;left:76.5px;top:1364.19px" width="9.2" height="10" viewBox="0 0 9.2 10"><circle cx="4.2" cy="4.2" r="3.500" fill="#58a9c6"/><path d="M5.5 3.100a1.800 1.800 0 1 0 0 2.300" stroke="#fff" stroke-width="1" fill="none"/><path d="M5 6h3.600v3.400h-3.600z" fill="#5b8fd0"/><path d="M5 9.400l3.600-3.400h-3.600z" fill="#7fb3e0"/></svg><div style="left:88px;top:1367.49px;width:3.6px;height:3px;background:#c4dca8;border-radius:1px;"></div><span class="t" style="left:96px;top:1363.89px;font-size:7.9px;color:#262626;letter-spacing:0.28px;">LoginActivity</span><div style="left:14px;top:1374.57px;width:216px;height:11.56px;background:#d5d5d5;"></div><svg style="position:absolute;left:76.5px;top:1375.76px" width="9.2" height="10" viewBox="0 0 9.2 10"><circle cx="4.2" cy="4.2" r="3.500" fill="#58a9c6"/><path d="M5.5 3.100a1.800 1.800 0 1 0 0 2.300" stroke="#fff" stroke-width="1" fill="none"/><path d="M5 6h3.600v3.400h-3.600z" fill="#5b8fd0"/><path d="M5 9.400l3.600-3.400h-3.600z" fill="#7fb3e0"/></svg><div style="left:88px;top:1379.06px;width:3.6px;height:3px;background:#c4dca8;border-radius:1px;"></div><span class="t" style="left:96px;top:1375.46px;font-size:7.9px;color:#262626;letter-spacing:0.29px;text-decoration:underline wavy #e0606a 0.6px;text-underline-offset:0.8px;">MainActivity</span><svg style="position:absolute;left:51.2px;top:1388.62px" width="6.6" height="6.6" viewBox="0 0 6.6 6.6"><path d="M1.500 0.600v5.400l3.900-2.700z" fill="#a0a0a0"/></svg><svg style="position:absolute;left:63.6px;top:1387.72px" width="9.2" height="8.6" viewBox="0 0 9.2 8.6"><path d="M0.3 1.2h3.4l0.9 1h4.1v5.300h-8.4z" fill="#b7bcc0"/><rect x="1.4" y="3.6" width="2.6" height="2.4" fill="#eef0f1"/></svg><span class="t" style="left:74.4px;top:1387.02px;font-size:7.9px;color:#262626;letter-spacing:0.31px;">Services</span><svg style="position:absolute;left:51.2px;top:1400.19px" width="6.6" height="6.6" viewBox="0 0 6.6 6.6"><path d="M1.500 0.600v5.400l3.900-2.700z" fill="#a0a0a0"/></svg><svg style="position:absolute;left:63.6px;top:1399.29px" width="9.2" height="8.6" viewBox="0 0 9.2 8.6"><path d="M0.3 1.2h3.4l0.9 1h4.1v5.300h-8.4z" fill="#b7bcc0"/><rect x="1.4" y="3.6" width="2.6" height="2.4" fill="#eef0f1"/></svg><span class="t" style="left:74.4px;top:1398.59px;font-size:7.9px;color:#262626;letter-spacing:0.23px;">Utilities</span><div style="left:14px;top:1409.27px;width:216px;height:11.56px;background:#eff8e8;"></div><svg style="position:absolute;left:39px;top:1411.75px" width="6.6" height="6.6" viewBox="0 0 6.6 6.6"><path d="M1.500 0.600v5.400l3.900-2.700z" fill="#a0a0a0"/></svg><svg style="position:absolute;left:51.4px;top:1410.85px" width="9.2" height="8.6" viewBox="0 0 9.2 8.6"><path d="M0.3 1.2h3.4l0.9 1h4.1v5.300h-8.4z" fill="#b7bcc0"/><rect x="1.4" y="3.6" width="2.6" height="2.4" fill="#eef0f1"/></svg><span class="t" style="left:62.2px;top:1410.15px;font-size:7.9px;color:#262626;letter-spacing:0.33px;">com.example.jonnyb.smack</span><span class="t" style="left:170.29px;top:1410.15px;font-size:7.9px;color:#868686;letter-spacing:0.29px;">(androidTest)</span><div style="left:14px;top:1420.83px;width:216px;height:11.56px;background:#eff8e8;"></div><svg style="position:absolute;left:39px;top:1423.32px" width="6.6" height="6.6" viewBox="0 0 6.6 6.6"><path d="M1.500 0.600v5.400l3.900-2.700z" fill="#a0a0a0"/></svg><svg style="position:absolute;left:51.4px;top:1422.41px" width="9.2" height="8.6" viewBox="0 0 9.2 8.6"><path d="M0.3 1.2h3.4l0.9 1h4.1v5.300h-8.4z" fill="#b7bcc0"/><rect x="1.4" y="3.6" width="2.6" height="2.4" fill="#eef0f1"/></svg><span class="t" style="left:62.2px;top:1421.72px;font-size:7.9px;color:#262626;letter-spacing:0.33px;">com.example.jonnyb.smack</span><span class="t" style="left:170.29px;top:1421.72px;font-size:7.9px;color:#868686;letter-spacing:0.25px;">(test)</span><svg style="position:absolute;left:26.8px;top:1434.88px" width="6.6" height="6.6" viewBox="0 0 6.6 6.6"><path d="M0.600 1.500h5.400l-2.700 3.900z" fill="#a0a0a0"/></svg><svg style="position:absolute;left:39.2px;top:1433.98px" width="9.2" height="8.6" viewBox="0 0 9.2 8.6"><path d="M0.3 1.2h3.4l0.9 1h4.1v5.300h-8.4z" fill="#b9b3a8"/><rect x="5.6" y="5" width="3.4" height="3.400" fill="#e8a33d"/></svg><span class="t" style="left:50px;top:1433.28px;font-size:7.9px;color:#262626;letter-spacing:0.3px;">res</span><svg style="position:absolute;left:39px;top:1446.45px" width="6.6" height="6.6" viewBox="0 0 6.6 6.6"><path d="M1.500 0.600v5.400l3.900-2.700z" fill="#a0a0a0"/></svg><svg style="position:absolute;left:51.4px;top:1445.55px" width="9.2" height="8.6" viewBox="0 0 9.2 8.6"><path d="M0.3 1.2h3.4l0.9 1h4.1v5.300h-8.4z" fill="#b7bcc0"/><rect x="1.4" y="3.6" width="2.6" height="2.4" fill="#eef0f1"/></svg><span class="t" style="left:62.2px;top:1444.85px;font-size:7.9px;color:#262626;letter-spacing:0.33px;">drawable</span><svg style="position:absolute;left:39px;top:1458.01px" width="6.6" height="6.6" viewBox="0 0 6.6 6.6"><path d="M0.600 1.500h5.400l-2.700 3.900z" fill="#a0a0a0"/></svg><svg style="position:absolute;left:51.4px;top:1457.11px" width="9.2" height="8.6" viewBox="0 0 9.2 8.6"><path d="M0.3 1.2h3.4l0.9 1h4.1v5.300h-8.4z" fill="#b7bcc0"/><rect x="1.4" y="3.6" width="2.6" height="2.4" fill="#eef0f1"/></svg><span class="t" style="left:62.2px;top:1456.41px;font-size:7.9px;color:#262626;letter-spacing:0.29px;">layout</span><svg style="position:absolute;left:64.5px;top:1468.08px" width="8.8" height="9.2" viewBox="0 0 8.8 9.2"><path d="M1.800 0.300h3.800l1.800 1.800v3.400h-5.600z" fill="#c3c6cb"/><rect x="0.400" y="5" width="7.600" height="3.500" rx="0.500" fill="#e8a040"/><path d="M2.900 5.700l-1.200 1 1.200 1M5.500 5.700l1.200 1-1.200 1" stroke="#7a4a12" stroke-width="0.700" fill="none"/></svg><span class="t" style="left:74px;top:1467.98px;font-size:7.9px;color:#262626;letter-spacing:0.29px;">activity_create_user.xml</span><svg style="position:absolute;left:64.5px;top:1479.64px" width="8.8" height="9.2" viewBox="0 0 8.8 9.2"><path d="M1.800 0.300h3.800l1.800 1.800v3.400h-5.600z" fill="#c3c6cb"/><rect x="0.400" y="5" width="7.600" height="3.500" rx="0.500" fill="#e8a040"/><path d="M2.900 5.700l-1.200 1 1.200 1M5.500 5.700l1.200 1-1.200 1" stroke="#7a4a12" stroke-width="0.700" fill="none"/></svg><span class="t" style="left:74px;top:1479.54px;font-size:7.9px;color:#262626;letter-spacing:0.27px;">activity_login.xml</span><svg style="position:absolute;left:64.5px;top:1491.21px" width="8.8" height="9.2" viewBox="0 0 8.8 9.2"><path d="M1.800 0.300h3.800l1.800 1.800v3.400h-5.600z" fill="#c3c6cb"/><rect x="0.400" y="5" width="7.600" height="3.500" rx="0.500" fill="#e8a040"/><path d="M2.900 5.700l-1.200 1 1.200 1M5.500 5.700l1.200 1-1.200 1" stroke="#7a4a12" stroke-width="0.700" fill="none"/></svg><span class="t" style="left:74px;top:1491.11px;font-size:7.9px;color:#262626;letter-spacing:0.29px;">activity_main.xml</span><svg style="position:absolute;left:64.5px;top:1502.77px" width="8.8" height="9.2" viewBox="0 0 8.8 9.2"><path d="M1.800 0.300h3.800l1.800 1.800v3.400h-5.600z" fill="#c3c6cb"/><rect x="0.400" y="5" width="7.600" height="3.500" rx="0.500" fill="#e8a040"/><path d="M2.900 5.700l-1.200 1 1.200 1M5.500 5.700l1.200 1-1.200 1" stroke="#7a4a12" stroke-width="0.700" fill="none"/></svg><span class="t" style="left:74px;top:1502.67px;font-size:7.9px;color:#3d8a3d;letter-spacing:0.32px;">add_channel_dialog.xml</span><svg style="position:absolute;left:64.5px;top:1514.34px" width="8.8" height="9.2" viewBox="0 0 8.8 9.2"><path d="M1.800 0.300h3.800l1.800 1.800v3.400h-5.600z" fill="#c3c6cb"/><rect x="0.400" y="5" width="7.600" height="3.500" rx="0.500" fill="#e8a040"/><path d="M2.900 5.700l-1.200 1 1.200 1M5.500 5.700l1.200 1-1.200 1" stroke="#7a4a12" stroke-width="0.700" fill="none"/></svg><span class="t" style="left:74px;top:1514.24px;font-size:7.9px;color:#262626;letter-spacing:0.33px;">app_bar_main.xml</span><svg style="position:absolute;left:64.5px;top:1525.9px" width="8.8" height="9.2" viewBox="0 0 8.8 9.2"><path d="M1.800 0.300h3.800l1.800 1.800v3.400h-5.600z" fill="#c3c6cb"/><rect x="0.400" y="5" width="7.600" height="3.500" rx="0.500" fill="#e8a040"/><path d="M2.900 5.700l-1.200 1 1.200 1M5.500 5.700l1.200 1-1.200 1" stroke="#7a4a12" stroke-width="0.700" fill="none"/></svg><span class="t" style="left:74px;top:1525.8px;font-size:7.9px;color:#262626;letter-spacing:0.32px;">content_main.xml</span><svg style="position:absolute;left:64.5px;top:1537.47px" width="8.8" height="9.2" viewBox="0 0 8.8 9.2"><path d="M1.800 0.300h3.800l1.800 1.800v3.400h-5.600z" fill="#c3c6cb"/><rect x="0.400" y="5" width="7.600" height="3.500" rx="0.500" fill="#e8a040"/><path d="M2.900 5.700l-1.200 1 1.200 1M5.500 5.700l1.200 1-1.200 1" stroke="#7a4a12" stroke-width="0.700" fill="none"/></svg><span class="t" style="left:74px;top:1537.37px;font-size:7.9px;color:#262626;letter-spacing:0.34px;">nav_header_main.xml</span><svg style="position:absolute;left:39px;top:1550.53px" width="6.6" height="6.6" viewBox="0 0 6.6 6.6"><path d="M1.500 0.600v5.400l3.900-2.700z" fill="#a0a0a0"/></svg><svg style="position:absolute;left:51.4px;top:1549.63px" width="9.2" height="8.6" viewBox="0 0 9.2 8.6"><path d="M0.3 1.2h3.4l0.9 1h4.1v5.300h-8.4z" fill="#b7bcc0"/><rect x="1.4" y="3.6" width="2.6" height="2.4" fill="#eef0f1"/></svg><span class="t" style="left:62.2px;top:1548.93px;font-size:7.9px;color:#262626;letter-spacing:0.39px;">mipmap</span><svg style="position:absolute;left:39px;top:1562.1px" width="6.6" height="6.6" viewBox="0 0 6.6 6.6"><path d="M1.500 0.600v5.400l3.900-2.700z" fill="#a0a0a0"/></svg><svg style="position:absolute;left:51.4px;top:1561.19px" width="9.2" height="8.6" viewBox="0 0 9.2 8.6"><path d="M0.3 1.2h3.4l0.9 1h4.1v5.300h-8.4z" fill="#b7bcc0"/><rect x="1.4" y="3.6" width="2.6" height="2.4" fill="#eef0f1"/></svg><span class="t" style="left:62.2px;top:1560.5px;font-size:7.9px;color:#262626;letter-spacing:0.31px;">values</span><svg style="position:absolute;left:14.6px;top:1573.66px" width="6.6" height="6.6" viewBox="0 0 6.6 6.6"><path d="M0.600 1.500h5.400l-2.700 3.900z" fill="#a0a0a0"/></svg><svg style="position:absolute;left:27px;top:1572.56px" width="8.8" height="8.8" viewBox="0 0 8.8 8.8"><circle cx="4.4" cy="4.4" r="3.600" fill="#fff" stroke="#3fae49" stroke-width="1.300"/><path d="M3 2.600v3.600l3.200-1.800z" fill="#3fae49"/></svg><span class="t" style="left:37.8px;top:1572.06px;font-size:7.9px;color:#262626;letter-spacing:0.29px;">Gradle Scripts</span><svg style="position:absolute;left:39.5px;top:1584.12px" width="8.8" height="8.8" viewBox="0 0 8.8 8.8"><circle cx="4.4" cy="4.4" r="3.600" fill="#fff" stroke="#3fae49" stroke-width="1.300"/><path d="M3 2.600v3.600l3.200-1.800z" fill="#3fae49"/></svg><span class="t" style="left:50px;top:1583.63px;font-size:7.9px;color:#262626;letter-spacing:0.28px;">build.gradle</span><span class="t" style="left:96.81px;top:1583.63px;font-size:7.9px;color:#868686;letter-spacing:0.3px;">(Project: Smack)</span><svg style="position:absolute;left:39.5px;top:1595.69px" width="8.8" height="8.8" viewBox="0 0 8.8 8.8"><circle cx="4.4" cy="4.4" r="3.600" fill="#fff" stroke="#3fae49" stroke-width="1.300"/><path d="M3 2.600v3.600l3.200-1.800z" fill="#3fae49"/></svg><span class="t" style="left:50px;top:1595.19px;font-size:7.9px;color:#262626;letter-spacing:0.28px;">build.gradle</span><span class="t" style="left:96.81px;top:1595.19px;font-size:7.9px;color:#868686;letter-spacing:0.31px;">(Module: app)</span><svg style="position:absolute;left:39.5px;top:1607.06px" width="8.8" height="9.2" viewBox="0 0 8.8 9.2"><path d="M1.400 0.300h4.400l2 2v6.300h-6.400z" fill="#c5c8cc"/><rect x="0.300" y="5" width="2" height="3.800" fill="#e8a33d"/><rect x="2.800" y="3.600" width="2" height="5.200" fill="#8fb84e"/><rect x="5.300" y="5.600" width="2" height="3.200" fill="#e8a33d"/></svg><span class="t" style="left:50px;top:1606.76px;font-size:7.9px;color:#262626;letter-spacing:0.3px;">gradle-wrapper.properties</span><span class="t" style="left:150.03px;top:1606.76px;font-size:7.9px;color:#868686;letter-spacing:0.3px;">(Gradle Version)</span><svg style="position:absolute;left:39.5px;top:1618.62px" width="8.8" height="9.2" viewBox="0 0 8.8 9.2"><path d="M1.400 0.300h4.400l2 2v6.300h-6.400z" fill="#b9bcc0"/><rect x="2.400" y="3.400" width="4.200" height="0.900" fill="#6d7074"/><rect x="2.400" y="5" width="4.200" height="0.900" fill="#6d7074"/><rect x="2.400" y="6.600" width="4.200" height="0.900" fill="#6d7074"/></svg><span class="t" style="left:50px;top:1618.32px;font-size:7.9px;color:#262626;letter-spacing:0.3px;">proguard-rules.pro</span><span class="t" style="left:122.94px;top:1618.32px;font-size:7.9px;color:#868686;letter-spacing:0.3px;">(ProGuard Rules for app)</span><svg style="position:absolute;left:39.5px;top:1630.19px" width="8.8" height="9.2" viewBox="0 0 8.8 9.2"><path d="M1.400 0.300h4.400l2 2v6.300h-6.400z" fill="#c5c8cc"/><rect x="0.300" y="5" width="2" height="3.800" fill="#e8a33d"/><rect x="2.800" y="3.600" width="2" height="5.200" fill="#8fb84e"/><rect x="5.300" y="5.600" width="2" height="3.200" fill="#e8a33d"/></svg><span class="t" style="left:50px;top:1629.89px;font-size:7.9px;color:#262626;letter-spacing:0.29px;">gradle.properties</span><span class="t" style="left:116.76px;top:1629.89px;font-size:7.9px;color:#868686;letter-spacing:0.28px;">(Project Properties)</span><svg style="position:absolute;left:39.5px;top:1641.95px" width="8.8" height="8.8" viewBox="0 0 8.8 8.8"><circle cx="4.4" cy="4.4" r="3.600" fill="#fff" stroke="#3fae49" stroke-width="1.300"/><path d="M3 2.600v3.600l3.200-1.800z" fill="#3fae49"/></svg><span class="t" style="left:50px;top:1641.45px;font-size:7.9px;color:#262626;letter-spacing:0.28px;">settings.gradle</span><span class="t" style="left:108.21px;top:1641.45px;font-size:7.9px;color:#868686;letter-spacing:0.28px;">(Project Settings)</span><svg style="position:absolute;left:39.5px;top:1653.32px" width="8.8" height="9.2" viewBox="0 0 8.8 9.2"><path d="M1.400 0.300h4.400l2 2v6.300h-6.400z" fill="#c5c8cc"/><rect x="0.300" y="5" width="2" height="3.800" fill="#e8a33d"/><rect x="2.800" y="3.600" width="2" height="5.200" fill="#8fb84e"/><rect x="5.300" y="5.600" width="2" height="3.200" fill="#e8a33d"/></svg><span class="t" style="left:50px;top:1653.02px;font-size:7.9px;color:#262626;letter-spacing:0.28px;">local.properties</span><span class="t" style="left:110.58px;top:1653.02px;font-size:7.9px;color:#868686;letter-spacing:0.31px;">(SDK Location)</span><div style="left:230px;top:1293.5px;width:780px;height:491px;background:#fff;"></div><div style="left:230px;top:1293.5px;width:780px;height:19.5px;background:#f2f2f2;"></div><div style="left:230px;top:1312.8px;width:780px;height:0.6px;background:#d9d9d9;"></div><div style="left:273.2px;top:1297.2px;width:85.44px;height:14.6px;background:#f7f7f7;border:0.8px solid #b4b4b4;box-sizing:border-box;border-radius:1.5px;"></div><span class="t m c" style="left:275.6px;top:1297.5px;color:#1a1a1a;font-size:11.16px;">MainActivity</span><div style="left:362.14px;top:1297.2px;width:132.48px;height:14.6px;background:#f7f7f7;border:0.8px solid #b4b4b4;box-sizing:border-box;border-radius:1.5px;"></div><span class="t m c" style="left:364.54px;top:1297.5px;color:#1a1a1a;font-size:11.16px;">addChannelClicked()</span><div style="left:498.12px;top:1297.2px;width:145.92px;height:14.6px;background:#f7f7f7;border:0.8px solid #b4b4b4;box-sizing:border-box;border-radius:1.5px;"></div><span class="t m c" style="left:500.52px;top:1297.5px;color:#1a1a1a;font-size:11.16px;">if (AuthService.isL…)</span><div style="left:647.54px;top:1297.2px;width:206.4px;height:14.6px;background:#fffce0;border:0.8px solid #b4b4b4;box-sizing:border-box;border-radius:1.5px;"></div><span class="t m c" style="left:649.94px;top:1297.5px;color:#1a1a1a;font-size:11.16px;">….setPositiveButton("Add") {…}</span><div style="left:230px;top:1313.5px;width:42.3px;height:471px;background:#f0f0f0;"></div><div style="left:230px;top:1293.5px;width:0.8px;height:491px;background:#c9c9c9;"></div><div style="left:272px;top:1313.5px;width:0.6px;height:471px;background:#dedede;"></div><div style="left:946px;top:1313.5px;width:0.6px;height:471px;background:#e4e4e4;"></div><div style="left:230px;top:1625.8px;width:772px;height:13.4px;background:#fffce4;"></div><div style="left:230px;top:1625.8px;width:42px;height:13.4px;background:#f9f6dc;"></div><div style="left:267px;top:1545.4px;width:5.4px;height:40.2px;background:#bcd6ab;"></div><div style="left:267px;top:1599px;width:5.4px;height:67px;background:#bcd6ab;"></div><span class="t m ln" style="left:233.200px;top:1317.3px;">61</span><span class="t m c" style="left:303.2px;top:1317.3px;color:#141470;font-weight:bold;">fun</span><span class="t m c" style="left:329.9px;top:1317.3px;">loginBtnNavClicked(</span><span class="t m c" style="left:456.72px;top:1317.3px;color:#787878;">view</span><span class="t m c" style="left:483.42px;top:1317.3px;">: View) {</span><span class="t m ln" style="left:233.200px;top:1330.7px;">62</span><span class="t m ln" style="left:233.200px;top:1344.1px;">63</span><span class="t m c" style="left:329.9px;top:1344.1px;color:#141470;font-weight:bold;">if</span><span class="t m c" style="left:349.93px;top:1344.1px;">(AuthService.</span><span class="t m c" style="left:436.7px;top:1344.1px;color:#5e2276;font-weight:bold;text-decoration:underline;">isLoggedIn</span><span class="t m c" style="left:503.45px;top:1344.1px;">) {</span><span class="t m ln" style="left:233.200px;top:1357.5px;">64</span><span class="t m c" style="left:356.6px;top:1357.5px;">UserDataService.logout()</span><span class="t m ln" style="left:233.200px;top:1370.9px;">65</span><span class="t m c" style="left:356.6px;top:1370.9px;color:#5e2276;font-style:italic;">userNameNavHeader</span><span class="t m c" style="left:470.08px;top:1370.9px;">.</span><span class="t m c" style="left:476.75px;top:1370.9px;color:#5e2276;font-style:italic;text-decoration:underline;">text</span><span class="t m c" style="left:510.13px;top:1370.9px;">= </span><span class="t m c" style="left:523.48px;top:1370.9px;color:#167a16;font-weight:bold;">""</span><span class="t m ln" style="left:233.200px;top:1384.3px;">66</span><span class="t m c" style="left:356.6px;top:1384.3px;color:#5e2276;font-style:italic;">userEmailNavHeader</span><span class="t m c" style="left:476.75px;top:1384.3px;">.</span><span class="t m c" style="left:483.43px;top:1384.3px;color:#5e2276;font-style:italic;text-decoration:underline;">text</span><span class="t m c" style="left:516.8px;top:1384.3px;">= </span><span class="t m c" style="left:530.15px;top:1384.3px;color:#167a16;font-weight:bold;">""</span><span class="t m ln" style="left:233.200px;top:1397.7px;">67</span><span class="t m c" style="left:356.6px;top:1397.7px;color:#5e2276;font-style:italic;">userImageNavHeader</span><span class="t m c" style="left:476.75px;top:1397.7px;">.setImageResource(R.drawable.</span><span class="t m c" style="left:670.33px;top:1397.7px;color:#5e2276;font-style:italic;">profiledefault</span><span class="t m c" style="left:763.78px;top:1397.7px;">)</span><span class="t m ln" style="left:233.200px;top:1411.1px;">68</span><span class="t m c" style="left:356.6px;top:1411.1px;color:#5e2276;font-style:italic;">userImageNavHeader</span><span class="t m c" style="left:476.75px;top:1411.1px;">.setBackgroundColor(Color.</span><span class="t m c" style="left:650.3px;top:1411.1px;color:#5e2276;font-style:italic;">TRANSPARENT</span><span class="t m c" style="left:723.72px;top:1411.1px;">)</span><span class="t m ln" style="left:233.200px;top:1424.5px;">69</span><span class="t m c" style="left:356.6px;top:1424.5px;color:#5e2276;font-style:italic;">loginBtnNavHeader</span><span class="t m c" style="left:470.08px;top:1424.5px;">.</span><span class="t m c" style="left:476.75px;top:1424.5px;color:#5e2276;font-style:italic;text-decoration:underline;">text</span><span class="t m c" style="left:510.13px;top:1424.5px;">= </span><span class="t m c" style="left:523.48px;top:1424.5px;color:#167a16;font-weight:bold;">"</span><span class="t m c" style="left:530.15px;top:1424.5px;background:#e6f2c4;color:#167a16;font-weight:bold;">Login</span><span class="t m c" style="left:563.52px;top:1424.5px;color:#167a16;font-weight:bold;">"</span><span class="t m ln" style="left:233.200px;top:1437.9px;">70</span><span class="t m ln" style="left:233.200px;top:1451.3px;">71</span><span class="t m c" style="left:329.9px;top:1451.3px;">} </span><span class="t m c" style="left:343.25px;top:1451.3px;color:#141470;font-weight:bold;">else</span><span class="t m c" style="left:376.62px;top:1451.3px;">{</span><span class="t m ln" style="left:233.200px;top:1464.7px;">72</span><span class="t m c" style="left:356.6px;top:1464.7px;color:#141470;font-weight:bold;">val</span><span class="t m c" style="left:383.3px;top:1464.7px;">loginIntent = Intent(</span><span class="t m c" style="left:523.48px;top:1464.7px;color:#141470;font-weight:bold;">this</span><span class="t m c" style="left:550.18px;top:1464.7px;">, LoginActivity::</span><span class="t m c" style="left:663.65px;top:1464.7px;color:#141470;font-weight:bold;">class</span><span class="t m c" style="left:697.03px;top:1464.7px;">.</span><span class="t m c" style="left:703.7px;top:1464.7px;font-style:italic;">java</span><span class="t m c" style="left:730.4px;top:1464.7px;">)</span><span class="t m ln" style="left:233.200px;top:1478.1px;">73</span><span class="t m c" style="left:356.6px;top:1478.1px;">startActivity(loginIntent)</span><span class="t m ln" style="left:233.200px;top:1491.5px;">74</span><span class="t m c" style="left:329.9px;top:1491.5px;">}</span><span class="t m ln" style="left:233.200px;top:1504.9px;">75</span><span class="t m c" style="left:303.2px;top:1504.9px;">}</span><span class="t m ln" style="left:233.200px;top:1518.3px;">76</span><span class="t m ln" style="left:233.200px;top:1531.7px;">77</span><span class="t m c" style="left:303.2px;top:1531.7px;color:#141470;font-weight:bold;">fun</span><span class="t m c" style="left:329.9px;top:1531.7px;">addChannelClicked(</span><span class="t m c" style="left:450.05px;top:1531.7px;color:#787878;">view</span><span class="t m c" style="left:476.75px;top:1531.7px;">: View) {</span><span class="t m ln" style="left:233.200px;top:1545.1px;">78</span><span class="t m c" style="left:329.9px;top:1545.1px;color:#141470;font-weight:bold;">if</span><span class="t m c" style="left:349.93px;top:1545.1px;">(AuthService.</span><span class="t m c" style="left:436.7px;top:1545.1px;color:#5e2276;font-weight:bold;text-decoration:underline;">isLoggedIn</span><span class="t m c" style="left:503.45px;top:1545.1px;">) {</span><span class="t m ln" style="left:233.200px;top:1558.5px;">79</span><span class="t m c" style="left:356.6px;top:1558.5px;color:#141470;font-weight:bold;">val</span><span class="t m c" style="left:383.3px;top:1558.5px;">builder = AlertDialog.Builder(</span><span class="t hint" style="left:587.75px;top:1560.1px;width:41.5px;letter-spacing:1.1px;">context:</span><span class="t m c" style="left:633.75px;top:1558.5px;color:#141470;font-weight:bold;">this</span><span class="t m c" style="left:660.45px;top:1558.5px;">)</span><span class="t m ln" style="left:233.200px;top:1571.9px;">80</span><span class="t m c" style="left:356.6px;top:1571.9px;color:#141470;font-weight:bold;">val</span><span class="t m c" style="left:383.3px;top:1571.9px;">dialogView = </span><span class="t m c" style="left:470.07px;top:1571.9px;color:#5e2276;font-style:italic;">layoutInflater</span><span class="t m c" style="left:563.52px;top:1571.9px;">.inflate(R.layout.</span><span class="t m c" style="left:683.67px;top:1571.9px;color:#5e2276;font-style:italic;">add_channel_dialog</span><span class="t m c" style="left:803.82px;top:1571.9px;">, </span><span class="t hint" style="left:820.77px;top:1573.5px;width:26.5px;letter-spacing:1.22px;">root:</span><span class="t m c" style="left:849.77px;top:1571.9px;color:#141470;font-weight:bold;background:#fbf6d2;">null</span><span class="t m c" style="left:876.48px;top:1571.9px;">)</span><span class="t m ln" style="left:233.200px;top:1585.3px;">81</span><span class="t m ln" style="left:233.200px;top:1598.7px;">82</span><span class="t m c" style="left:356.6px;top:1598.7px;">builder.setView(dialogView)</span><span class="t m ln" style="left:233.200px;top:1612.1px;">83</span><span class="t m c" style="left:410px;top:1612.1px;">.setPositiveButton(</span><span class="t m c" style="left:536.83px;top:1612.1px;color:#167a16;font-weight:bold;">"Add"</span><span class="t m c" style="left:570.2px;top:1612.1px;">) </span><span class="t m c" style="left:583.55px;top:1612.1px;font-weight:bold;">{</span><span class="t m ln" style="left:233.200px;top:1625.5px;">84</span><span class="t m ln" style="left:233.200px;top:1638.9px;">85</span><span class="t m c" style="left:410px;top:1638.9px;font-weight:bold;">}</span><span class="t m ln" style="left:233.200px;top:1652.3px;">86</span><span class="t m c" style="left:329.9px;top:1652.3px;">}</span><span class="t m ln" style="left:233.200px;top:1665.7px;">87</span><span class="t m c" style="left:303.2px;top:1665.7px;">}</span><span class="t m ln" style="left:233.200px;top:1679.1px;">88</span><span class="t m ln" style="left:233.200px;top:1692.5px;">89</span><span class="t m c" style="left:303.2px;top:1692.5px;color:#141470;font-weight:bold;">fun</span><span class="t m c" style="left:329.9px;top:1692.5px;">sendMsgBtnClicked(</span><span class="t m c" style="left:450.05px;top:1692.5px;color:#787878;">view</span><span class="t m c" style="left:476.75px;top:1692.5px;">: View) {</span><span class="t m ln" style="left:233.200px;top:1705.9px;">90</span><span class="t m ln" style="left:233.200px;top:1719.3px;">91</span><span class="t m c" style="left:303.2px;top:1719.3px;">}</span><span class="t m ln" style="left:233.200px;top:1732.7px;">92</span><span class="t m c" style="left:276.5px;top:1732.7px;">}</span><span class="t m ln" style="left:233.200px;top:1746.1px;">93</span><div style="left:269.4px;top:1321.7px;width:5.2px;height:5.2px;background:#fff;border:0.600px solid #d2d2d2;box-sizing:border-box;border-radius:1.500px;"></div><div style="left:269.4px;top:1348.5px;width:5.2px;height:5.2px;background:#fff;border:0.600px solid #d2d2d2;box-sizing:border-box;border-radius:1.500px;"></div><div style="left:269.4px;top:1455.7px;width:5.2px;height:5.2px;background:#fff;border:0.600px solid #d2d2d2;box-sizing:border-box;border-radius:1.500px;"></div><div style="left:269.4px;top:1495.9px;width:5.2px;height:5.2px;background:#fff;border:0.600px solid #d2d2d2;box-sizing:border-box;border-radius:1.500px;"></div><div style="left:269.4px;top:1509.3px;width:5.2px;height:5.2px;background:#fff;border:0.600px solid #d2d2d2;box-sizing:border-box;border-radius:1.500px;"></div><div style="left:269.4px;top:1536.1px;width:5.2px;height:5.2px;background:#fff;border:0.600px solid #d2d2d2;box-sizing:border-box;border-radius:1.500px;"></div><div style="left:269.4px;top:1549.5px;width:5.2px;height:5.2px;background:#fff;border:0.600px solid #d2d2d2;box-sizing:border-box;border-radius:1.500px;"></div><div style="left:269.4px;top:1616.5px;width:5.2px;height:5.2px;background:#fff;border:0.600px solid #d2d2d2;box-sizing:border-box;border-radius:1.500px;"></div><div style="left:269.4px;top:1643.3px;width:5.2px;height:5.2px;background:#fff;border:0.600px solid #d2d2d2;box-sizing:border-box;border-radius:1.500px;"></div><div style="left:269.4px;top:1656.7px;width:5.2px;height:5.2px;background:#fff;border:0.600px solid #d2d2d2;box-sizing:border-box;border-radius:1.500px;"></div><div style="left:269.4px;top:1670.1px;width:5.2px;height:5.2px;background:#fff;border:0.600px solid #d2d2d2;box-sizing:border-box;border-radius:1.500px;"></div><div style="left:269.4px;top:1696.9px;width:5.2px;height:5.2px;background:#fff;border:0.600px solid #d2d2d2;box-sizing:border-box;border-radius:1.500px;"></div><div style="left:269.4px;top:1723.7px;width:5.2px;height:5.2px;background:#fff;border:0.600px solid #d2d2d2;box-sizing:border-box;border-radius:1.500px;"></div><div style="left:269.4px;top:1737.1px;width:5.2px;height:5.2px;background:#fff;border:0.600px solid #d2d2d2;box-sizing:border-box;border-radius:1.500px;"></div><div style="left:253px;top:1401.7px;width:6px;height:6px;background:#f4f4f4;border:0.800px solid #c9c9c9;box-sizing:border-box;border-radius:50%;"></div><div style="left:281.5px;top:1614.6px;width:5.4px;height:6px;background:#f2c04a;border-radius:50% 50% 40% 40%;"></div><div style="left:283px;top:1620.6px;width:2.6px;height:2px;background:#8a7a5a;"></div><div style="left:1003.3px;top:1315.5px;width:5.6px;height:5.6px;background:#c8455a;border-radius:50%;"></div><div style="left:1005.7px;top:1316.7px;width:0.9px;height:3.2px;background:#fff;"></div><div style="left:1001px;top:1545px;width:8.5px;height:1px;background:#b7c24a;"></div><div style="left:1001px;top:1606.5px;width:8.5px;height:1px;background:#b7c24a;"></div><div style="left:1001px;top:1644px;width:8.5px;height:1px;background:#b7c24a;"></div><div style="left:1001px;top:1682px;width:8.5px;height:1px;background:#b7c24a;"></div><div style="left:1001px;top:1696px;width:8.5px;height:1px;background:#b7c24a;"></div><div style="left:1001px;top:1710px;width:8.5px;height:1px;background:#c0504d;"></div><div style="left:1001px;top:1737.8px;width:8.5px;height:1px;background:#b7c24a;"></div><div style="left:1004.5px;top:1606.5px;width:3.6px;height:161.5px;background:#c4c4c4;border-radius:2px;"></div><svg style="position:absolute;left:617.5px;top:1614px" width="4" height="9" viewBox="0 0 4 9"><path d="M0.500 0.500h3M0.500 8.500h3M2 0.500v8" stroke="#333" stroke-width="0.700" fill="none"/></svg><div style="left:0px;top:1278px;width:14.2px;height:533px;background:#e6e6e6;"></div><div style="left:13.6px;top:1278px;width:0.7px;height:533px;background:#cfcfcf;"></div><div style="left:0px;top:1278.5px;width:13.6px;height:51px;background:#bcbcbc;"></div><span class="t" style="left:-9.35px;top:1294.18px;width:33.5px;height:8.43px;font-size:6.8px;line-height:8.43px;color:#333;transform:rotate(-90deg);text-align:center;letter-spacing:0.08px;">1: Project</span><div style="left:4.4px;top:1316px;width:6px;height:6.5px;background:#8db33a;border-radius:1px;"></div><span class="t" style="left:-12.85px;top:1350.18px;width:40.5px;height:8.43px;font-size:6.8px;line-height:8.43px;color:#444;transform:rotate(-90deg);text-align:center;letter-spacing:0.08px;">Z: Structure</span><svg style="position:absolute;left:3.4px;top:1374.5px" width="8" height="8" viewBox="0 0 8 8"><path d="M1 4l5-3M1 4l5 3" stroke="#888" stroke-width="0.900"/><circle cx="1.500" cy="4" r="1.200" fill="#d66"/><circle cx="6.200" cy="1.200" r="1.200" fill="#888"/><circle cx="6.200" cy="6.800" r="1.200" fill="#888"/></svg><span class="t" style="left:-8.6px;top:1405.98px;width:32px;height:8.43px;font-size:6.8px;line-height:8.43px;color:#444;transform:rotate(-90deg);text-align:center;letter-spacing:0.05px;">Captures</span><div style="left:4px;top:1427px;width:6.8px;height:6.8px;background:#9aa3ab;border-radius:50%;"></div><span class="t" style="left:-16.1px;top:1680.78px;width:47px;height:8.43px;font-size:6.8px;line-height:8.43px;color:#444;transform:rotate(-90deg);text-align:center;letter-spacing:0.11px;">Build Variants</span><svg style="position:absolute;left:3.1px;top:1708.42px" width="8.5" height="8.16" viewBox="0 0 10 9.6"><path d="M1.800 3.600a3.200 3.200 0 0 1 6.400 0z" fill="#9bc53d"/><rect x="1.800" y="4.100" width="6.400" height="4.600" rx="0.700" fill="#9bc53d"/><rect x="0.300" y="4.100" width="1.100" height="3.600" rx="0.500" fill="#9bc53d"/><rect x="8.600" y="4.100" width="1.100" height="3.600" rx="0.500" fill="#9bc53d"/></svg><div style="left:0px;top:1249px;width:1.2px;height:562px;background:#3c3c3c;"></div><div style="left:1009.8px;top:1278px;width:14.2px;height:533px;background:#e6e6e6;"></div><div style="left:1009.6px;top:1278px;width:0.7px;height:520px;background:#cfcfcf;"></div><svg style="position:absolute;left:1012.8px;top:1285.1px" width="8.8" height="8.8" viewBox="0 0 8.8 8.8"><circle cx="4.4" cy="4.4" r="3.600" fill="#fff" stroke="#3fae49" stroke-width="1.300"/><path d="M3 2.600v3.600l3.200-1.800z" fill="#3fae49"/></svg><span class="t" style="left:1005.2px;top:1302.28px;width:24px;height:8.43px;font-size:6.8px;line-height:8.43px;color:#333;transform:rotate(90deg);text-align:center;letter-spacing:-0.07px;">Gradle</span><div style="left:1013.8px;top:1708.5px;width:6px;height:7px;background:#f4f4f4;border:0.700px solid #888;box-sizing:border-box;border-radius:1px;"></div><span class="t" style="left:984.45px;top:1743.08px;width:65.5px;height:8.43px;font-size:6.8px;line-height:8.43px;color:#333;transform:rotate(90deg);text-align:center;letter-spacing:0.03px;">Device File Explorer</span><div style="left:1022.6px;top:1249px;width:1.4px;height:562px;background:#4a4a4a;"></div><div style="left:0px;top:1784.5px;width:1024px;height:26.5px;background:#ececec;"></div><div style="left:0px;top:1784.5px;width:1024px;height:0.7px;background:#cfcfcf;"></div><span class="t" style="left:149.4px;top:1787.91px;font-size:6.6px;color:#333;letter-spacing:0.14px;">Profiler</span><svg style="position:absolute;left:186.9px;top:1788px" width="7" height="8" viewBox="0 0 7 8"><path d="M1.500 0.500v7M5.500 0.500c0 3-4 3-4 5" fill="none" stroke="#777" stroke-width="0.900"/></svg><span class="t" style="left:196.4px;top:1787.91px;font-size:6.6px;color:#333;letter-spacing:0.16px;">9: Version Control</span><div style="left:266.5px;top:1788.5px;width:7.5px;height:7px;background:#6b6b6b;border-radius:0.800px;"></div><div style="left:268px;top:1791px;width:3px;height:1.2px;background:#eee;"></div><span class="t" style="left:277px;top:1787.91px;font-size:6.6px;color:#333;letter-spacing:0.17px;">Terminal</span><svg style="position:absolute;left:891.5px;top:1788px" width="9" height="9" viewBox="0 0 9 9"><circle cx="4.500" cy="4" r="3.400" fill="none" stroke="#999" stroke-width="0.900"/></svg><span class="t" style="left:902.5px;top:1787.91px;font-size:6.6px;color:#333;letter-spacing:0.09px;">Event Log</span><div style="left:948px;top:1788.5px;width:7px;height:7px;background:#e8f0ee;border:0.800px solid #7a9a9a;box-sizing:border-box;"></div><span class="t" style="left:958px;top:1787.91px;font-size:6.6px;color:#333;letter-spacing:0.08px;">Gradle Console</span><span class="t" style="left:149px;top:1800.53px;font-size:6.4px;color:#333;letter-spacing:0.24px;">hed state) (6 minutes ago)</span><span class="t" style="left:771px;top:1800.53px;font-size:6.4px;color:#333;">84:25</span><span class="t" style="left:795px;top:1800.53px;font-size:6.4px;color:#333;">LF∶</span><span class="t" style="left:812.7px;top:1800.53px;font-size:6.4px;color:#333;">UTF-8∶</span><span class="t" style="left:842.4px;top:1800.53px;font-size:6.4px;color:#333;">Git: lesson-17 ∶</span><span class="t" style="left:898.7px;top:1800.53px;font-size:6.4px;color:#9a9a9a;letter-spacing:0.26px;">Context: &lt;no context&gt;</span><svg style="position:absolute;left:1px;top:1720.5px" width="147" height="91" viewBox="0 0 148 90" preserveAspectRatio="none"><defs><filter id="wb2" x="-10%" y="-10%" width="120%" height="120%"><feGaussianBlur stdDeviation="0.9"/></filter><linearGradient id="wd2" x1="0" x2="1" y1="0" y2="0"><stop offset="0" stop-color="#d6d3cc"/><stop offset="0.14" stop-color="#ececeb"/><stop offset="1" stop-color="#e5e4e1"/></linearGradient><linearGradient id="wh2" x1="0" x2="0" y1="0" y2="1"><stop offset="0" stop-color="#8e604b"/><stop offset="1" stop-color="#6e4838"/></linearGradient></defs><rect x="0" y="0" width="148" height="90" fill="#d4d1ca"/><g filter="url(#wb2)"><g transform="translate(0 0) scale(1)"><rect x="-12" y="-8" width="100" height="110" fill="#d5d2cb"/><rect x="79" y="-8" width="49" height="110" fill="url(#wd2)"/><rect x="127" y="-8" width="40" height="110" fill="#ccc8be"/><rect x="124.500" y="-8" width="3" height="110" fill="#f3f2ef"/><rect x="11.500" y="-8" width="53" height="22.500" fill="#efede8"/><rect x="15" y="-8" width="46.500" height="19.500" fill="#4a4c4f"/><path d="M19 8l8-4 26 1 6 4z" fill="#8d9196"/><rect x="30" y="8" width="22" height="1.500" fill="#7a4a4a"/><rect x="5.500" y="-8" width="2.200" height="24" fill="#3a3532"/><rect x="-12" y="-8" width="12.500" height="20" fill="#2e2c2b"/><rect x="-12" y="33" width="21.500" height="70" fill="#2a2423"/><rect x="-12" y="40" width="16" height="10" fill="#4a4745"/><rect x="-12" y="70" width="16" height="14" fill="#6b2a2c"/><rect x="17.500" y="28.500" width="11.500" height="3" fill="#eee8e2"/><rect x="20.500" y="31.500" width="6.500" height="17" fill="#7a3038"/><rect x="2" y="48" width="26.500" height="55" rx="2" fill="#dfe0e5"/><path d="M26 102V25q0-8 8-8h58q8 0 8 8V102z" fill="#282c35"/><path d="M31 102V30q0-7 6-8v80z" fill="#1f222a"/></g><g transform="rotate(0 73 49.2) translate(73 9.2) scale(0.96 1) translate(-73 -9.2)"><path d="M22 95c1-20 8-26 26-30l10-4h24l10 4c18 4 26 10 30 30z" fill="#88c4b0"/><path d="M29 95c4-14 10-20 22-24" fill="none" stroke="#79b3a0" stroke-width="1.500"/><path d="M55 60c0 24 6 31 18 31s18-7 18-31z" fill="#263049"/><path d="M59.5 58c0 20 5 25 13.500 25s13.500-5 13.500-25z" fill="#d9a797"/><ellipse cx="55" cy="43.2" rx="2.200" ry="4.500" fill="#dba594"/><ellipse cx="91" cy="43.2" rx="2.200" ry="4.500" fill="#dba594"/><path d="M55.5 35.2c0-16 8-22 17.500-22s17.500 6 17.500 22v14c0 16-8 24-17.500 24s-17.500-8-17.500-24z" fill="#e6b5a8"/><ellipse cx="73" cy="30.2" rx="10" ry="8" fill="#efc4b6"/><path d="M55.5 49.2c1 8 3 10 7 11c3-3 7-4 10.500-4s7.500 1 10.500 4c4-1 6-3 7-11l0.500 10c0 16-8 22-18 22s-18-6-18-22z" fill="#86604f"/><ellipse cx="73" cy="72.2" rx="9" ry="7" fill="#7a5544"/><ellipse cx="73" cy="61.7" rx="5" ry="1.600" fill="#c4958a"/><path d="M73 45.2l-2.500 9h5.500z" fill="#dca595"/><ellipse cx="65" cy="40.2" rx="4.200" ry="1.600" fill="#5e4038"/><ellipse cx="81" cy="40.2" rx="4.200" ry="1.600" fill="#5e4038"/><path d="M60.5 36.7h8M77.5 36.7h8" stroke="#8a6252" stroke-width="1.200"/><path d="M55 40.2c-2-10-2-20 4-26 5-6 22-7 28-1 6 6 6 16 4 27l-2.500-9c-1-5-3-8-6-9-6 2-14 2-20 0-3 1-4 4-5 9z" fill="url(#wh2)"/></g></g></svg><svg style="position:absolute;left:964px;top:1796.3px" width="60" height="16" viewBox="0 0 60 16"><text x="58.500" y="13.300" text-anchor="end" font-family="Liberation Sans, sans-serif" font-size="12.200" font-style="italic" font-weight="bold" fill="#fff" stroke="#000" stroke-width="1.200" stroke-linejoin="round" paint-order="stroke" letter-spacing="-0.150">00:09:04</text></svg></div></div></div>
<div style="left:0;top:1811px;width:1024px;height:576px;overflow:hidden;"><div class="fb" style="left:0;top:-1811px;width:1024px;height:2387px;"><div style="left:-6px;top:1805px;width:1036px;height:588px;background:#ececec;"></div><div class="fr" style="left:0;top:0;width:1024px;height:2387px;overflow:hidden;"><div style="left:0px;top:1811px;width:1024px;height:576px;background:#ececec;"></div><div style="left:0px;top:1811px;width:1024px;height:14px;background:#f7cbbf;"></div><div style="left:0px;top:1824.2px;width:1024px;height:1.1px;background:#a8806f;"></div><div style="left:0px;top:1811px;width:1024px;height:0.8px;background:#8f7466;"></div><svg style="position:absolute;left:13px;top:1812.6px" width="9" height="10" viewBox="0 0 18 20"><path fill="#2a1d1a" d="M12.2 0.3c0.1 1.2-0.4 2.3-1.1 3.1-0.8 0.9-1.9 1.5-3 1.4-0.1-1.1 0.4-2.3 1.1-3C10 0.9 11.200 0.400 12.2 0.3zM16 6.8c-1.300 0.800-2 2-2 3.400 0 1.700 1 3.100 2.500 3.700-0.400 1.200-1 2.300-1.700 3.300-0.900 1.300-1.800 2.500-3.200 2.500-1.300 0-1.700-0.800-3.300-0.800-1.500 0-2 0.800-3.300 0.800-1.300 0-2.300-1.200-3.200-2.500C0.100 14.600-0.600 10.800 0.900 8.300c1-1.700 2.600-2.700 4.300-2.700 1.400 0 2.500 0.900 3.400 0.900 0.900 0 2.200-1 3.900-0.900 1.300 0.100 2.600 0.600 3.500 1.200z"/></svg><span class="t" style="left:33px;top:1813.05px;font-size:8.3px;color:#3a2019;font-weight:bold;letter-spacing:0.18px;">Android Studio</span><span class="t" style="left:107.5px;top:1813.05px;font-size:8.3px;color:#3a2019;letter-spacing:-0.09px;">File</span><span class="t" style="left:132px;top:1813.05px;font-size:8.3px;color:#3a2019;letter-spacing:0.17px;">Edit</span><span class="t" style="left:158.5px;top:1813.05px;font-size:8.3px;color:#3a2019;letter-spacing:0.29px;">View</span><span class="t" style="left:189px;top:1813.05px;font-size:8.3px;color:#3a2019;letter-spacing:0.16px;">Navigate</span><span class="t" style="left:234.5px;top:1813.05px;font-size:8.3px;color:#3a2019;letter-spacing:0.29px;">Code</span><span class="t" style="left:267px;top:1813.05px;font-size:8.3px;color:#3a2019;letter-spacing:0.21px;">Analyze</span><span class="t" style="left:308.5px;top:1813.05px;font-size:8.3px;color:#3a2019;letter-spacing:0.27px;">Refactor</span><span class="t" style="left:353px;top:1813.05px;font-size:8.3px;color:#3a2019;letter-spacing:0.21px;">Build</span><span class="t" style="left:384px;top:1813.05px;font-size:8.3px;color:#3a2019;letter-spacing:0.09px;">Run</span><span class="t" style="left:411px;top:1813.05px;font-size:8.3px;color:#3a2019;letter-spacing:0.42px;">Tools</span><span class="t" style="left:443.5px;top:1813.05px;font-size:8.3px;color:#3a2019;letter-spacing:-0.02px;">VCS</span><span class="t" style="left:472px;top:1813.05px;font-size:8.3px;color:#3a2019;letter-spacing:0.08px;">Window</span><span class="t" style="left:514px;top:1813.05px;font-size:8.3px;color:#3a2019;letter-spacing:0.23px;">Help</span><svg style="position:absolute;left:904.5px;top:1814px" width="11" height="8" viewBox="0 0 11 8"><rect x="0.5" y="0.6" width="7.4" height="6.600" rx="0.8" fill="none" stroke="#3a2420" stroke-width="0.9"/><circle cx="4.2" cy="3.900" r="1.4" fill="#3a2420"/><path d="M8.2 3.900L10.5 1.800V6Z" fill="none" stroke="#3a2420" stroke-width="0.8"/></svg><svg style="position:absolute;left:925px;top:1813.7px" width="9" height="9" viewBox="0 0 9 9"><circle cx="3.600" cy="3.600" r="2.700" fill="none" stroke="#3a2420" stroke-width="1"/><path d="M5.600 5.600L8.400 8.400" stroke="#3a2420" stroke-width="1.2"/></svg><svg style="position:absolute;left:945.5px;top:1814px" width="8" height="8" viewBox="0 0 8 8"><path d="M4 1.200L7.400 5H0.600Z M0.600 6H7.400V7.200H0.600Z" fill="#3a2420"/></svg><div style="left:963.6px;top:1817.1px;width:2px;height:2px;background:#3a2420;border-radius:50%;"></div><div style="left:967.1px;top:1817.1px;width:2px;height:2px;background:#3a2420;border-radius:50%;"></div><div style="left:970.6px;top:1817.1px;width:2px;height:2px;background:#3a2420;border-radius:50%;"></div><div style="left:981.8px;top:1813.4px;width:9.2px;height:9.2px;background:radial-gradient(circle at 50% 75%,#a78cc0 0,#5c2f7c 45%,#24102f 100%);border-radius:50%;"></div><div style="left:998px;top:1815px;width:11px;height:1px;background:#dcbab2;"></div><div style="left:998px;top:1817.5px;width:11px;height:1px;background:#dcbab2;"></div><div style="left:998px;top:1820px;width:11px;height:1px;background:#dcbab2;"></div><div style="left:0px;top:1825px;width:1024px;height:14px;background:linear-gradient(#ebebeb,#dcdcdc);"></div><div style="left:0px;top:1838.5px;width:1024px;height:0.8px;background:#c4c4c4;"></div><div style="left:5.2px;top:1828px;width:8px;height:8px;background:#ee4f5d;border-radius:50%;"></div><div style="left:17.2px;top:1828px;width:8px;height:8px;background:#f6b83f;border-radius:50%;"></div><div style="left:29.2px;top:1828px;width:8px;height:8px;background:#3fc84f;border-radius:50%;"></div><div style="left:375px;top:1827.6px;width:5.6px;height:7.4px;background:#fdfdfd;border-radius:0.6px;box-shadow:0 0 0.6px #999;"></div><span class="t" style="left:382px;top:1826.89px;font-size:7.6px;color:#4a4a4a;letter-spacing:0.38px;">MainActivity.kt - Smack - [~/Desktop/Smack] - Android Studio 3.0 Beta 2</span><div style="left:0px;top:1839.3px;width:1024px;height:15px;background:#ececec;"></div><svg style="position:absolute;left:7.4px;top:1842.8px" width="9.2" height="8.6" viewBox="0 0 9.2 8.6"><path d="M0.3 1.2h3.4l0.9 1h4.1v5.300h-8.4z" fill="#a9b4bc"/><rect x="5.6" y="5" width="3.4" height="3.400" fill="#40b6e0"/></svg><span class="t" style="left:18px;top:1842.54px;font-size:7.2px;color:#2e2e2e;font-weight:bold;letter-spacing:-0.44px;">Smack</span><svg style="position:absolute;left:42.2px;top:1841px" width="4" height="12" viewBox="0 0 4 12"><path d="M0.500 0.500l3 5.500-3 5.500" fill="none" stroke="#a8a8a8" stroke-width="0.700"/></svg><svg style="position:absolute;left:48.4px;top:1842.8px" width="9.2" height="8.6" viewBox="0 0 9.2 8.6"><path d="M0.3 1.2h3.4l0.9 1h4.1v5.300h-8.4z" fill="#a9b4bc"/><rect x="5.6" y="5" width="3.4" height="3.400" fill="#40b6e0"/></svg><span class="t" style="left:59px;top:1842.54px;font-size:7.2px;color:#2e2e2e;font-weight:bold;letter-spacing:-0.27px;">app</span><svg style="position:absolute;left:74.2px;top:1841px" width="4" height="12" viewBox="0 0 4 12"><path d="M0.500 0.500l3 5.500-3 5.500" fill="none" stroke="#a8a8a8" stroke-width="0.700"/></svg><svg style="position:absolute;left:80.4px;top:1842.8px" width="9.2" height="8.6" viewBox="0 0 9.2 8.6"><path d="M0.3 1.2h3.4l0.9 1h4.1v5.300h-8.4z" fill="#a9b4bc"/></svg><span class="t" style="left:91px;top:1842.54px;font-size:7.2px;color:#2e2e2e;letter-spacing:-0.2px;text-decoration:underline wavy #e0606a 0.6px;text-underline-offset:0.8px;">src</span><svg style="position:absolute;left:103.2px;top:1841px" width="4" height="12" viewBox="0 0 4 12"><path d="M0.500 0.500l3 5.500-3 5.500" fill="none" stroke="#a8a8a8" stroke-width="0.700"/></svg><svg style="position:absolute;left:108.9px;top:1842.8px" width="9.2" height="8.6" viewBox="0 0 9.2 8.6"><path d="M0.3 1.2h3.4l0.9 1h4.1v5.300h-8.4z" fill="#a9b4bc"/></svg><span class="t" style="left:119.5px;top:1842.54px;font-size:7.2px;color:#2e2e2e;letter-spacing:-0.03px;text-decoration:underline wavy #e0606a 0.6px;text-underline-offset:0.8px;">main</span><svg style="position:absolute;left:138.2px;top:1841px" width="4" height="12" viewBox="0 0 4 12"><path d="M0.500 0.500l3 5.500-3 5.500" fill="none" stroke="#a8a8a8" stroke-width="0.700"/></svg><svg style="position:absolute;left:143.4px;top:1842.8px" width="9.2" height="8.6" viewBox="0 0 9.2 8.6"><path d="M0.3 1.2h3.4l0.9 1h4.1v5.300h-8.4z" fill="#7ec3e6"/></svg><span class="t" style="left:154px;top:1842.54px;font-size:7.2px;color:#2e2e2e;letter-spacing:-0.05px;text-decoration:underline wavy #e0606a 0.6px;text-underline-offset:0.8px;">java</span><svg style="position:absolute;left:170.2px;top:1841px" width="4" height="12" viewBox="0 0 4 12"><path d="M0.500 0.500l3 5.500-3 5.500" fill="none" stroke="#a8a8a8" stroke-width="0.700"/></svg><svg style="position:absolute;left:176.4px;top:1842.8px" width="9.2" height="8.6" viewBox="0 0 9.2 8.6"><path d="M0.3 1.2h3.4l0.9 1h4.1v5.300h-8.4z" fill="#b7bcc0"/><rect x="1.4" y="3.6" width="2.6" height="2.4" fill="#eef0f1"/></svg><span class="t" style="left:187px;top:1842.54px;font-size:7.2px;color:#2e2e2e;letter-spacing:-0.2px;text-decoration:underline wavy #e0606a 0.6px;text-underline-offset:0.8px;">com</span><svg style="position:absolute;left:203.2px;top:1841px" width="4" height="12" viewBox="0 0 4 12"><path d="M0.500 0.500l3 5.500-3 5.500" fill="none" stroke="#a8a8a8" stroke-width="0.700"/></svg><svg style="position:absolute;left:208.9px;top:1842.8px" width="9.2" height="8.6" viewBox="0 0 9.2 8.6"><path d="M0.3 1.2h3.4l0.9 1h4.1v5.300h-8.4z" fill="#b7bcc0"/><rect x="1.4" y="3.6" width="2.6" height="2.4" fill="#eef0f1"/></svg><span class="t" style="left:219.5px;top:1842.54px;font-size:7.2px;color:#2e2e2e;letter-spacing:-0.03px;text-decoration:underline wavy #e0606a 0.6px;text-underline-offset:0.8px;">example</span><svg style="position:absolute;left:249.7px;top:1841px" width="4" height="12" viewBox="0 0 4 12"><path d="M0.500 0.500l3 5.500-3 5.500" fill="none" stroke="#a8a8a8" stroke-width="0.700"/></svg><svg style="position:absolute;left:254.8px;top:1842.8px" width="9.2" height="8.6" viewBox="0 0 9.2 8.6"><path d="M0.3 1.2h3.4l0.9 1h4.1v5.300h-8.4z" fill="#b7bcc0"/><rect x="1.4" y="3.6" width="2.6" height="2.4" fill="#eef0f1"/></svg><span class="t" style="left:265.4px;top:1842.54px;font-size:7.2px;color:#2e2e2e;letter-spacing:-0.02px;text-decoration:underline wavy #e0606a 0.6px;text-underline-offset:0.8px;">jonnyb</span><svg style="position:absolute;left:289.7px;top:1841px" width="4" height="12" viewBox="0 0 4 12"><path d="M0.500 0.500l3 5.500-3 5.500" fill="none" stroke="#a8a8a8" stroke-width="0.700"/></svg><svg style="position:absolute;left:295.8px;top:1842.8px" width="9.2" height="8.6" viewBox="0 0 9.2 8.6"><path d="M0.3 1.2h3.4l0.9 1h4.1v5.300h-8.4z" fill="#b7bcc0"/><rect x="1.4" y="3.6" width="2.6" height="2.4" fill="#eef0f1"/></svg><span class="t" style="left:306.4px;top:1842.54px;font-size:7.2px;color:#2e2e2e;letter-spacing:-0.04px;text-decoration:underline wavy #e0606a 0.6px;text-underline-offset:0.8px;">smack</span><svg style="position:absolute;left:330.2px;top:1841px" width="4" height="12" viewBox="0 0 4 12"><path d="M0.500 0.500l3 5.500-3 5.500" fill="none" stroke="#a8a8a8" stroke-width="0.700"/></svg><svg style="position:absolute;left:336px;top:1842.8px" width="9.2" height="8.6" viewBox="0 0 9.2 8.6"><path d="M0.3 1.2h3.4l0.9 1h4.1v5.300h-8.4z" fill="#b7bcc0"/><rect x="1.4" y="3.6" width="2.6" height="2.4" fill="#eef0f1"/></svg><span class="t" style="left:346.6px;top:1842.54px;font-size:7.2px;color:#2e2e2e;letter-spacing:-0.11px;text-decoration:underline wavy #e0606a 0.6px;text-underline-offset:0.8px;">Controller</span><svg style="position:absolute;left:379.9px;top:1841px" width="4" height="12" viewBox="0 0 4 12"><path d="M0.500 0.500l3 5.500-3 5.500" fill="none" stroke="#a8a8a8" stroke-width="0.700"/></svg><svg style="position:absolute;left:385.8px;top:1842.4px" width="9.2" height="10" viewBox="0 0 9.2 10"><circle cx="4.2" cy="4.2" r="3.500" fill="#58a9c6"/><path d="M5.5 3.100a1.800 1.800 0 1 0 0 2.300" stroke="#fff" stroke-width="1" fill="none"/><path d="M5 6h3.600v3.400h-3.600z" fill="#5b8fd0"/><path d="M5 9.400l3.600-3.400h-3.600z" fill="#7fb3e0"/></svg><span class="t" style="left:396.4px;top:1842.54px;font-size:7.2px;color:#2e2e2e;letter-spacing:0.08px;text-decoration:underline wavy #e0606a 0.6px;text-underline-offset:0.8px;">MainActivity.kt</span><svg style="position:absolute;left:446.2px;top:1841px" width="4" height="12" viewBox="0 0 4 12"><path d="M0.500 0.500l3 5.500-3 5.500" fill="none" stroke="#a8a8a8" stroke-width="0.700"/></svg><svg style="position:absolute;left:710px;top:1841.1px" width="10" height="10" viewBox="0 0 10 10"><path d="M1 2.500l3-2 3 2.200-1.200 1.300-1.300-0.800z" fill="#4c9e4c"/><path d="M4.600 4l4.400 5" stroke="#4c9e4c" stroke-width="1.500"/></svg><div style="left:727px;top:1840.5px;width:35px;height:11.2px;background:#fafafa;border-radius:2px;box-shadow:0 0 0.5px #aaa;"></div><svg style="position:absolute;left:730px;top:1842.5px" width="9" height="8" viewBox="0 0 9 8"><rect x="0.500" y="1" width="7.500" height="5.500" fill="none" stroke="#b9a24a" stroke-width="1"/><rect x="5" y="4" width="3.500" height="3.500" fill="#9bc53d"/></svg><span class="t" style="left:740.6px;top:1841.76px;font-size:7px;color:#333;letter-spacing:-0.06px;">app</span><svg style="position:absolute;left:754px;top:1844.6px" width="5" height="4" viewBox="0 0 5 4"><path d="M0.300 0.500h4.400l-2.200 3z" fill="#777"/></svg><svg style="position:absolute;left:768.5px;top:1841.1px" width="9" height="10" viewBox="0 0 9 10"><path d="M0.800 0.600v8.800l7.600-4.400z" fill="#3aa544"/></svg><svg style="position:absolute;left:785px;top:1841.6px" width="6" height="9" viewBox="0 0 6 9"><path d="M3.500 0.300l-3 4.700h2.200l-0.700 3.700 3.300-5h-2.300z" fill="#e8b93a"/></svg><div style="left:774.5px;top:1847.6px;width:3.6px;height:3.6px;background:#3aa544;border-radius:50%;border:0.5px solid #ececec;"></div><svg style="position:absolute;left:798.5px;top:1841.1px" width="9" height="10" viewBox="0 0 9 10"><ellipse cx="4.500" cy="5.800" rx="3" ry="3.600" fill="#5a9a50"/><circle cx="4.500" cy="2.200" r="1.700" fill="#5a9a50"/><path d="M0.500 4h8M0.500 7h8" stroke="#5a9a50" stroke-width="0.800"/></svg><svg style="position:absolute;left:813.5px;top:1841.1px" width="9" height="10" viewBox="0 0 9 10"><rect x="1" y="5" width="2" height="4.500" fill="#c2c2c2"/><rect x="3.800" y="1" width="2" height="8.500" fill="#c2c2c2"/><rect x="6.500" y="4" width="2" height="5.500" fill="#d2d2d2"/></svg><svg style="position:absolute;left:829.5px;top:1841.1px" width="9" height="10" viewBox="0 0 9 10"><rect x="1" y="0.600" width="5.500" height="8.800" rx="0.800" fill="none" stroke="#777" stroke-width="1"/><path d="M4.500 4v5.500l4.200-2.700z" fill="#3aa544"/></svg><div style="left:845.4px;top:1842.5px;width:7.2px;height:7.2px;background:#d0485a;"></div><div style="left:858px;top:1840.6px;width:0.8px;height:11px;background:#c9c9c9;"></div><div style="left:923px;top:1840.6px;width:0.8px;height:11px;background:#c9c9c9;"></div><div style="left:971px;top:1840.6px;width:0.8px;height:11px;background:#c9c9c9;"></div><span class="t" style="left:861px;top:1840.65px;font-size:4.6px;color:#555;font-weight:bold;letter-spacing:0.18px;">VCS</span><svg style="position:absolute;left:862.5px;top:1845.6px" width="7" height="6" viewBox="0 0 7 6"><path d="M2.500 0h2v2.500h2l-3 3.200-3-3.200h2z" fill="#3b82c4"/></svg><span class="t" style="left:878px;top:1840.65px;font-size:4.6px;color:#555;font-weight:bold;letter-spacing:0.18px;">VCS</span><svg style="position:absolute;left:879.5px;top:1845.6px" width="7" height="6" viewBox="0 0 7 6"><path d="M2.500 5.700h2v-2.500h2l-3-3.200-3 3.200h2z" fill="#4c9e4c"/></svg><svg style="position:absolute;left:893px;top:1841.1px" width="10" height="10" viewBox="0 0 10 10"><rect x="0.600" y="1" width="7" height="5.500" fill="none" stroke="#555" stroke-width="1"/><rect x="5" y="4.500" width="4.500" height="4.500" fill="#5a9a50"/></svg><svg style="position:absolute;left:908px;top:1841.6px" width="10" height="9" viewBox="0 0 10 9"><path d="M2.500 3h4a2.400 2.400 0 0 1 0 4.800h-4.500" fill="none" stroke="#6a4aa6" stroke-width="1.500"/><path d="M3.500 0.500l-3 2.500 3 2.500z" fill="#6a4aa6"/></svg><svg style="position:absolute;left:927.5px;top:1841.6px" width="11" height="9" viewBox="0 0 11 9"><path d="M1 8a4.500 4.500 0 0 1 9 0" fill="none" stroke="#3b82c4" stroke-width="1.400"/><path d="M5.500 8l2.500-4" stroke="#4c9e4c" stroke-width="1.200"/></svg><svg style="position:absolute;left:943.5px;top:1841.1px" width="9" height="10" viewBox="0 0 9 10"><path d="M3.500 0.500h2v4.500h2l-3 3-3-3h2z" fill="#3b82c4"/><rect x="0.500" y="8.300" width="8" height="1.400" fill="#4c9e4c"/></svg><svg style="position:absolute;left:957.5px;top:1841.1px" width="9" height="10" viewBox="0 0 9 10"><rect x="1.500" y="0.500" width="5.500" height="9" fill="#9a8fc0"/><rect x="4.500" y="5" width="4" height="4.500" fill="#e09a4a"/><rect x="2.500" y="2" width="3.500" height="1" fill="#fff"/></svg><svg style="position:absolute;left:975.5px;top:1841.6px" width="11" height="9" viewBox="0 0 11 9"><path d="M0.500 1h4l1 1.200h5v6.300h-10z" fill="none" stroke="#3b78b4" stroke-width="1.200"/><rect x="5.500" y="4.500" width="3.500" height="3" fill="#3b78b4"/></svg><svg style="position:absolute;left:995px;top:1841.06px" width="10.08" height="10.08" viewBox="0 0 9.6 9.6"><circle cx="3.800" cy="3.800" r="2.800" fill="none" stroke="#666" stroke-width="1.100"/><path d="M5.900 5.900L9 9" stroke="#666" stroke-width="1.300"/></svg><svg style="position:absolute;left:1010px;top:1840.6px" width="10" height="11" viewBox="0 0 10 11"><rect x="0" y="0" width="10" height="11" fill="#c6c6c6"/><circle cx="5" cy="4" r="2.300" fill="#f2f2f2"/><path d="M1 11a4 4 0 0 1 8 0z" fill="#f2f2f2"/></svg><div style="left:14.3px;top:1854.3px;width:215.7px;height:14.8px;background:#e4e4e4;"></div><div style="left:14.3px;top:1868.6px;width:215.7px;height:0.7px;background:#c8c8c8;"></div><svg style="position:absolute;left:18.5px;top:1857.44px" width="9.5" height="9.12" viewBox="0 0 10 9.6"><path d="M1.800 3.600a3.200 3.200 0 0 1 6.400 0z" fill="#9bc53d"/><rect x="1.800" y="4.100" width="6.400" height="4.600" rx="0.700" fill="#9bc53d"/><rect x="0.300" y="4.100" width="1.100" height="3.600" rx="0.500" fill="#9bc53d"/><rect x="8.600" y="4.100" width="1.100" height="3.600" rx="0.500" fill="#9bc53d"/></svg><span class="t" style="left:31px;top:1857.54px;font-size:7.2px;color:#6a6a6a;letter-spacing:-0.19px;">Android</span><svg style="position:absolute;left:121.5px;top:1860.7px" width="5" height="4" viewBox="0 0 5 4"><path d="M0.300 0.300h4.400l-2.200 3z" fill="#666"/></svg><svg style="position:absolute;left:170px;top:1857.8px" width="8.5" height="8.5" viewBox="0 0 8.5 8.5"><circle cx="4.200" cy="4.200" r="3.400" fill="none" stroke="#777" stroke-width="1"/><path d="M2.700 2.700l3 3M5.700 2.700l-3 3" stroke="#777" stroke-width="0.900"/></svg><svg style="position:absolute;left:183.5px;top:1858px" width="8" height="8" viewBox="0 0 8 8"><path d="M4 0.500v7M0.500 4h7" stroke="#888" stroke-width="0.900"/><path d="M4 0l1.300 1.800h-2.600zM4 8l1.300-1.800h-2.600z" fill="#888"/></svg><div style="left:196px;top:1857.5px;width:0.8px;height:9px;background:#c9c9c9;"></div><svg style="position:absolute;left:201px;top:1857.5px" width="13" height="9" viewBox="0 0 13 9"><circle cx="4.500" cy="4.500" r="2.500" fill="none" stroke="#5a5a5a" stroke-width="1.800" stroke-dasharray="1.300 0.660"/><circle cx="4.500" cy="4.500" r="1.700" fill="none" stroke="#5a5a5a" stroke-width="1.200"/><path d="M10 4l1.500 1.600 1.500-1.600z" fill="#5a5a5a"/></svg><svg style="position:absolute;left:218px;top:1857.5px" width="9" height="9" viewBox="0 0 9 9"><path d="M1.500 0.800v7.400" stroke="#5a5a5a" stroke-width="1.200"/><path d="M3 4.500h4.500M3 4.500l2-1.800M3 4.500l2 1.800" stroke="#5a5a5a" stroke-width="0.900" fill="none"/></svg><div style="left:230px;top:1854.3px;width:780px;height:15px;background:#e6e6e6;"></div><div style="left:230px;top:1854.3px;width:738px;height:15px;background:#d6d6d6;"></div><div style="left:230px;top:1868.8px;width:780px;height:0.7px;background:#bdbdbd;"></div><div style="left:311.6px;top:1855.5px;width:0.6px;height:12.5px;background:#c2c2c2;"></div><svg style="position:absolute;left:236.5px;top:1857.9px" width="9.2" height="10" viewBox="0 0 9.2 10"><circle cx="4.2" cy="4.2" r="3.500" fill="#58a9c6"/><path d="M5.5 3.100a1.800 1.800 0 1 0 0 2.300" stroke="#fff" stroke-width="1" fill="none"/><path d="M5 6h3.600v3.400h-3.600z" fill="#5b8fd0"/><path d="M5 9.400l3.600-3.400h-3.600z" fill="#7fb3e0"/></svg><span class="t" style="left:247px;top:1858.22px;font-size:6.9px;color:#3a3a3a;letter-spacing:0.22px;">LoginActivity.kt</span><svg style="position:absolute;left:301px;top:1860.3px" width="5" height="5" viewBox="0 0 5 5"><path d="M0.600 0.600l3.800 3.800M4.400 0.600l-3.800 3.800" stroke="#aaa" stroke-width="0.800"/></svg><div style="left:417.6px;top:1855.5px;width:0.6px;height:12.5px;background:#c2c2c2;"></div><svg style="position:absolute;left:316px;top:1857.7px" width="8.8" height="9.2" viewBox="0 0 8.8 9.2"><path d="M1.800 0.300h3.800l1.800 1.800v3.400h-5.600z" fill="#c3c6cb"/><rect x="0.400" y="5" width="7.600" height="3.500" rx="0.500" fill="#e8a040"/><path d="M2.900 5.700l-1.200 1 1.200 1M5.500 5.700l1.200 1-1.200 1" stroke="#7a4a12" stroke-width="0.700" fill="none"/></svg><span class="t" style="left:326.5px;top:1858.22px;font-size:6.9px;color:#4f8f4f;letter-spacing:0.05px;">add_channel_dialog.xml</span><svg style="position:absolute;left:407px;top:1860.3px" width="5" height="5" viewBox="0 0 5 5"><path d="M0.600 0.600l3.800 3.800M4.400 0.600l-3.800 3.800" stroke="#aaa" stroke-width="0.800"/></svg><div style="left:523.1px;top:1855.5px;width:0.6px;height:12.5px;background:#c2c2c2;"></div><svg style="position:absolute;left:422px;top:1857.7px" width="8.8" height="9.2" viewBox="0 0 8.8 9.2"><path d="M1.800 0.300h3.800l1.800 1.800v3.400h-5.600z" fill="#c3c6cb"/><rect x="0.400" y="5" width="7.600" height="3.500" rx="0.500" fill="#e8a040"/><path d="M2.900 5.700l-1.200 1 1.200 1M5.500 5.700l1.200 1-1.200 1" stroke="#7a4a12" stroke-width="0.700" fill="none"/></svg><span class="t" style="left:432.5px;top:1858.22px;font-size:6.9px;color:#3a3a3a;letter-spacing:0.06px;">activity_create_user.xml</span><svg style="position:absolute;left:512.5px;top:1860.3px" width="5" height="5" viewBox="0 0 5 5"><path d="M0.600 0.600l3.800 3.800M4.400 0.600l-3.800 3.800" stroke="#aaa" stroke-width="0.800"/></svg><div style="left:620.6px;top:1855.5px;width:0.6px;height:12.5px;background:#c2c2c2;"></div><svg style="position:absolute;left:527.5px;top:1857.9px" width="9.2" height="10" viewBox="0 0 9.2 10"><circle cx="4.2" cy="4.2" r="3.500" fill="#58a9c6"/><path d="M5.5 3.100a1.800 1.800 0 1 0 0 2.300" stroke="#fff" stroke-width="1" fill="none"/><path d="M5 6h3.600v3.400h-3.600z" fill="#5b8fd0"/><path d="M5 9.400l3.600-3.400h-3.600z" fill="#7fb3e0"/></svg><span class="t" style="left:538px;top:1858.22px;font-size:6.9px;color:#3a3a3a;letter-spacing:0.15px;">CreateUserActivity.kt</span><svg style="position:absolute;left:610px;top:1860.3px" width="5" height="5" viewBox="0 0 5 5"><path d="M0.600 0.600l3.800 3.800M4.400 0.600l-3.800 3.800" stroke="#aaa" stroke-width="0.800"/></svg><div style="left:718.6px;top:1855.5px;width:0.6px;height:12.5px;background:#c2c2c2;"></div><svg style="position:absolute;left:624.5px;top:1857.7px" width="8.8" height="9.2" viewBox="0 0 8.8 9.2"><path d="M1.800 0.300h3.800l1.800 1.800v3.400h-5.600z" fill="#c3c6cb"/><rect x="0.400" y="5" width="7.600" height="3.500" rx="0.500" fill="#e8a040"/><path d="M2.900 5.700l-1.200 1 1.200 1M5.500 5.700l1.200 1-1.200 1" stroke="#7a4a12" stroke-width="0.700" fill="none"/></svg><span class="t" style="left:635px;top:1858.22px;font-size:6.9px;color:#3a3a3a;letter-spacing:0.01px;">nav_header_main.xml</span><svg style="position:absolute;left:708px;top:1860.3px" width="5" height="5" viewBox="0 0 5 5"><path d="M0.600 0.600l3.800 3.800M4.400 0.600l-3.800 3.800" stroke="#aaa" stroke-width="0.800"/></svg><div style="left:717px;top:1854.3px;width:80px;height:15.2px;background:#f7f7f7;"></div><svg style="position:absolute;left:722.5px;top:1857.9px" width="9.2" height="10" viewBox="0 0 9.2 10"><circle cx="4.2" cy="4.2" r="3.500" fill="#58a9c6"/><path d="M5.5 3.100a1.800 1.800 0 1 0 0 2.300" stroke="#fff" stroke-width="1" fill="none"/><path d="M5 6h3.600v3.400h-3.600z" fill="#5b8fd0"/><path d="M5 9.400l3.600-3.400h-3.600z" fill="#7fb3e0"/></svg><span class="t" style="left:733px;top:1858.22px;font-size:6.9px;color:#1d1d8a;letter-spacing:0.29px;text-decoration:underline wavy #e0606a 0.6px;text-underline-offset:0.8px;">MainActivity.kt</span><svg style="position:absolute;left:786px;top:1860.3px" width="5" height="5" viewBox="0 0 5 5"><path d="M0.600 0.600l3.800 3.800M4.400 0.600l-3.800 3.800" stroke="#888" stroke-width="0.800"/></svg><div style="left:891.6px;top:1855.5px;width:0.6px;height:12.5px;background:#c2c2c2;"></div><svg style="position:absolute;left:800.5px;top:1857.7px" width="8.8" height="9.2" viewBox="0 0 8.8 9.2"><path d="M1.800 0.300h3.800l1.800 1.800v3.400h-5.600z" fill="#c3c6cb"/><rect x="0.400" y="5" width="7.600" height="3.500" rx="0.500" fill="#e8a040"/><path d="M2.900 5.700l-1.200 1 1.200 1M5.500 5.700l1.200 1-1.200 1" stroke="#7a4a12" stroke-width="0.700" fill="none"/></svg><span class="t" style="left:811px;top:1858.22px;font-size:6.9px;color:#3a3a3a;letter-spacing:0.13px;">AndroidManifest.xml</span><svg style="position:absolute;left:881px;top:1860.3px" width="5" height="5" viewBox="0 0 5 5"><path d="M0.600 0.600l3.800 3.800M4.400 0.600l-3.800 3.800" stroke="#aaa" stroke-width="0.800"/></svg><div style="left:967.6px;top:1855.5px;width:0.6px;height:12.5px;background:#c2c2c2;"></div><svg style="position:absolute;left:895.5px;top:1857.9px" width="9.2" height="10" viewBox="0 0 9.2 10"><circle cx="4.2" cy="4.2" r="3.500" fill="#58a9c6"/><path d="M5.5 3.100a1.800 1.800 0 1 0 0 2.300" stroke="#fff" stroke-width="1" fill="none"/><path d="M5 6h3.600v3.400h-3.600z" fill="#5b8fd0"/><path d="M5 9.400l3.600-3.400h-3.600z" fill="#7fb3e0"/></svg><span class="t" style="left:906px;top:1858.22px;font-size:6.9px;color:#3a3a3a;letter-spacing:0.11px;">AuthService.kt</span><svg style="position:absolute;left:957px;top:1860.3px" width="5" height="5" viewBox="0 0 5 5"><path d="M0.600 0.600l3.800 3.800M4.400 0.600l-3.800 3.800" stroke="#aaa" stroke-width="0.800"/></svg><span class="t" style="left:992.5px;top:1858.28px;font-size:6px;color:#555;">‣≡ 2</span><div style="left:14px;top:1869px;width:216px;height:491px;background:#fff;"></div><svg style="position:absolute;left:14.6px;top:1872.1px" width="6.6" height="6.6" viewBox="0 0 6.6 6.6"><path d="M0.600 1.500h5.400l-2.700 3.900z" fill="#a0a0a0"/></svg><svg style="position:absolute;left:27px;top:1871.2px" width="9.2" height="8.6" viewBox="0 0 9.2 8.6"><path d="M0.3 1.2h3.4l0.9 1h4.1v5.300h-8.4z" fill="#a9b4bc"/><rect x="5.6" y="5" width="3.4" height="3.400" fill="#40b6e0"/></svg><span class="t" style="left:37.8px;top:1870.5px;font-size:7.9px;color:#262626;font-weight:bold;letter-spacing:0.39px;text-decoration:underline wavy #e0606a 0.6px;text-underline-offset:0.8px;">app</span><svg style="position:absolute;left:26.8px;top:1883.67px" width="6.6" height="6.6" viewBox="0 0 6.6 6.6"><path d="M1.500 0.600v5.400l3.900-2.700z" fill="#a0a0a0"/></svg><svg style="position:absolute;left:39.2px;top:1882.77px" width="9.2" height="8.6" viewBox="0 0 9.2 8.6"><path d="M0.3 1.2h3.4l0.9 1h4.1v5.300h-8.4z" fill="#7ec3e6"/></svg><span class="t" style="left:50px;top:1882.07px;font-size:7.9px;color:#262626;letter-spacing:0.31px;">manifests</span><svg style="position:absolute;left:26.8px;top:1895.23px" width="6.6" height="6.6" viewBox="0 0 6.6 6.6"><path d="M0.600 1.500h5.400l-2.700 3.900z" fill="#a0a0a0"/></svg><svg style="position:absolute;left:39.2px;top:1894.33px" width="9.2" height="8.6" viewBox="0 0 9.2 8.6"><path d="M0.3 1.2h3.4l0.9 1h4.1v5.300h-8.4z" fill="#7ec3e6"/></svg><span class="t" style="left:50px;top:1893.63px;font-size:7.9px;color:#262626;letter-spacing:0.3px;text-decoration:underline wavy #e0606a 0.6px;text-underline-offset:0.8px;">java</span><svg style="position:absolute;left:39px;top:1906.8px" width="6.6" height="6.6" viewBox="0 0 6.6 6.6"><path d="M0.600 1.500h5.400l-2.700 3.900z" fill="#a0a0a0"/></svg><svg style="position:absolute;left:51.4px;top:1905.89px" width="9.2" height="8.6" viewBox="0 0 9.2 8.6"><path d="M0.3 1.2h3.4l0.9 1h4.1v5.300h-8.4z" fill="#b7bcc0"/><rect x="1.4" y="3.6" width="2.6" height="2.4" fill="#eef0f1"/></svg><span class="t" style="left:62.2px;top:1905.2px;font-size:7.9px;color:#262626;letter-spacing:0.33px;text-decoration:underline wavy #e0606a 0.6px;text-underline-offset:0.8px;">com.example.jonnyb.smack</span><svg style="position:absolute;left:51.2px;top:1918.36px" width="6.6" height="6.6" viewBox="0 0 6.6 6.6"><path d="M0.600 1.500h5.400l-2.700 3.900z" fill="#a0a0a0"/></svg><svg style="position:absolute;left:63.6px;top:1917.46px" width="9.2" height="8.6" viewBox="0 0 9.2 8.6"><path d="M0.3 1.2h3.4l0.9 1h4.1v5.300h-8.4z" fill="#b7bcc0"/><rect x="1.4" y="3.6" width="2.6" height="2.4" fill="#eef0f1"/></svg><span class="t" style="left:74.4px;top:1916.76px;font-size:7.9px;color:#262626;letter-spacing:0.28px;text-decoration:underline wavy #e0606a 0.6px;text-underline-offset:0.8px;">Controller</span><svg style="position:absolute;left:76.5px;top:1928.63px" width="9.2" height="10" viewBox="0 0 9.2 10"><circle cx="4.2" cy="4.2" r="3.500" fill="#58a9c6"/><path d="M5.5 3.100a1.800 1.800 0 1 0 0 2.300" stroke="#fff" stroke-width="1" fill="none"/><path d="M5 6h3.600v3.400h-3.600z" fill="#5b8fd0"/><path d="M5 9.400l3.600-3.400h-3.600z" fill="#7fb3e0"/></svg><div style="left:88px;top:1931.93px;width:3.6px;height:3px;background:#c4dca8;border-radius:1px;"></div><span class="t" style="left:96px;top:1928.33px;font-size:7.9px;color:#262626;letter-spacing:0.3px;">CreateUserActivity</span><svg style="position:absolute;left:76.5px;top:1940.19px" width="9.2" height="10" viewBox="0 0 9.2 10"><circle cx="4.2" cy="4.2" r="3.500" fill="#58a9c6"/><path d="M5.5 3.100a1.800 1.800 0 1 0 0 2.300" stroke="#fff" stroke-width="1" fill="none"/><path d="M5 6h3.600v3.400h-3.600z" fill="#5b8fd0"/><path d="M5 9.400l3.600-3.400h-3.600z" fill="#7fb3e0"/></svg><div style="left:88px;top:1943.49px;width:3.6px;height:3px;background:#c4dca8;border-radius:1px;"></div><span class="t" style="left:96px;top:1939.89px;font-size:7.9px;color:#262626;letter-spacing:0.28px;">LoginActivity</span><div style="left:14px;top:1950.57px;width:216px;height:11.56px;background:#d5d5d5;"></div><svg style="position:absolute;left:76.5px;top:1951.76px" width="9.2" height="10" viewBox="0 0 9.2 10"><circle cx="4.2" cy="4.2" r="3.500" fill="#58a9c6"/><path d="M5.5 3.100a1.800 1.800 0 1 0 0 2.300" stroke="#fff" stroke-width="1" fill="none"/><path d="M5 6h3.600v3.400h-3.600z" fill="#5b8fd0"/><path d="M5 9.400l3.600-3.400h-3.600z" fill="#7fb3e0"/></svg><div style="left:88px;top:1955.06px;width:3.6px;height:3px;background:#c4dca8;border-radius:1px;"></div><span class="t" style="left:96px;top:1951.46px;font-size:7.9px;color:#262626;letter-spacing:0.29px;text-decoration:underline wavy #e0606a 0.6px;text-underline-offset:0.8px;">MainActivity</span><svg style="position:absolute;left:51.2px;top:1964.62px" width="6.6" height="6.6" viewBox="0 0 6.6 6.6"><path d="M1.500 0.600v5.400l3.900-2.700z" fill="#a0a0a0"/></svg><svg style="position:absolute;left:63.6px;top:1963.72px" width="9.2" height="8.6" viewBox="0 0 9.2 8.6"><path d="M0.3 1.2h3.4l0.9 1h4.1v5.300h-8.4z" fill="#b7bcc0"/><rect x="1.4" y="3.6" width="2.6" height="2.4" fill="#eef0f1"/></svg><span class="t" style="left:74.4px;top:1963.02px;font-size:7.9px;color:#262626;letter-spacing:0.31px;">Services</span><svg style="position:absolute;left:51.2px;top:1976.19px" width="6.6" height="6.6" viewBox="0 0 6.6 6.6"><path d="M1.500 0.600v5.400l3.900-2.700z" fill="#a0a0a0"/></svg><svg style="position:absolute;left:63.6px;top:1975.29px" width="9.2" height="8.6" viewBox="0 0 9.2 8.6"><path d="M0.3 1.2h3.4l0.9 1h4.1v5.300h-8.4z" fill="#b7bcc0"/><rect x="1.4" y="3.6" width="2.6" height="2.4" fill="#eef0f1"/></svg><span class="t" style="left:74.4px;top:1974.59px;font-size:7.9px;color:#262626;letter-spacing:0.23px;">Utilities</span><div style="left:14px;top:1985.27px;width:216px;height:11.56px;background:#eff8e8;"></div><svg style="position:absolute;left:39px;top:1987.75px" width="6.6" height="6.6" viewBox="0 0 6.6 6.6"><path d="M1.500 0.600v5.400l3.900-2.700z" fill="#a0a0a0"/></svg><svg style="position:absolute;left:51.4px;top:1986.85px" width="9.2" height="8.6" viewBox="0 0 9.2 8.6"><path d="M0.3 1.2h3.4l0.9 1h4.1v5.300h-8.4z" fill="#b7bcc0"/><rect x="1.4" y="3.6" width="2.6" height="2.4" fill="#eef0f1"/></svg><span class="t" style="left:62.2px;top:1986.15px;font-size:7.9px;color:#262626;letter-spacing:0.33px;">com.example.jonnyb.smack</span><span class="t" style="left:170.29px;top:1986.15px;font-size:7.9px;color:#868686;letter-spacing:0.29px;">(androidTest)</span><div style="left:14px;top:1996.83px;width:216px;height:11.56px;background:#eff8e8;"></div><svg style="position:absolute;left:39px;top:1999.32px" width="6.6" height="6.6" viewBox="0 0 6.6 6.6"><path d="M1.500 0.600v5.400l3.900-2.700z" fill="#a0a0a0"/></svg><svg style="position:absolute;left:51.4px;top:1998.41px" width="9.2" height="8.6" viewBox="0 0 9.2 8.6"><path d="M0.3 1.2h3.4l0.9 1h4.1v5.300h-8.4z" fill="#b7bcc0"/><rect x="1.4" y="3.6" width="2.6" height="2.4" fill="#eef0f1"/></svg><span class="t" style="left:62.2px;top:1997.72px;font-size:7.9px;color:#262626;letter-spacing:0.33px;">com.example.jonnyb.smack</span><span class="t" style="left:170.29px;top:1997.72px;font-size:7.9px;color:#868686;letter-spacing:0.25px;">(test)</span><svg style="position:absolute;left:26.8px;top:2010.88px" width="6.6" height="6.6" viewBox="0 0 6.6 6.6"><path d="M0.600 1.500h5.400l-2.700 3.900z" fill="#a0a0a0"/></svg><svg style="position:absolute;left:39.2px;top:2009.98px" width="9.2" height="8.6" viewBox="0 0 9.2 8.6"><path d="M0.3 1.2h3.4l0.9 1h4.1v5.300h-8.4z" fill="#b9b3a8"/><rect x="5.6" y="5" width="3.4" height="3.400" fill="#e8a33d"/></svg><span class="t" style="left:50px;top:2009.28px;font-size:7.9px;color:#262626;letter-spacing:0.3px;">res</span><svg style="position:absolute;left:39px;top:2022.45px" width="6.6" height="6.6" viewBox="0 0 6.6 6.6"><path d="M1.500 0.600v5.400l3.900-2.700z" fill="#a0a0a0"/></svg><svg style="position:absolute;left:51.4px;top:2021.55px" width="9.2" height="8.6" viewBox="0 0 9.2 8.6"><path d="M0.3 1.2h3.4l0.9 1h4.1v5.300h-8.4z" fill="#b7bcc0"/><rect x="1.4" y="3.6" width="2.6" height="2.4" fill="#eef0f1"/></svg><span class="t" style="left:62.2px;top:2020.85px;font-size:7.9px;color:#262626;letter-spacing:0.33px;">drawable</span><svg style="position:absolute;left:39px;top:2034.01px" width="6.6" height="6.6" viewBox="0 0 6.6 6.6"><path d="M0.600 1.500h5.400l-2.700 3.900z" fill="#a0a0a0"/></svg><svg style="position:absolute;left:51.4px;top:2033.11px" width="9.2" height="8.6" viewBox="0 0 9.2 8.6"><path d="M0.3 1.2h3.4l0.9 1h4.1v5.300h-8.4z" fill="#b7bcc0"/><rect x="1.4" y="3.6" width="2.6" height="2.4" fill="#eef0f1"/></svg><span class="t" style="left:62.2px;top:2032.41px;font-size:7.9px;color:#262626;letter-spacing:0.29px;">layout</span><svg style="position:absolute;left:64.5px;top:2044.08px" width="8.8" height="9.2" viewBox="0 0 8.8 9.2"><path d="M1.800 0.300h3.800l1.800 1.800v3.400h-5.600z" fill="#c3c6cb"/><rect x="0.400" y="5" width="7.600" height="3.500" rx="0.500" fill="#e8a040"/><path d="M2.900 5.700l-1.200 1 1.200 1M5.500 5.700l1.200 1-1.200 1" stroke="#7a4a12" stroke-width="0.700" fill="none"/></svg><span class="t" style="left:74px;top:2043.98px;font-size:7.9px;color:#262626;letter-spacing:0.29px;">activity_create_user.xml</span><svg style="position:absolute;left:64.5px;top:2055.64px" width="8.8" height="9.2" viewBox="0 0 8.8 9.2"><path d="M1.800 0.300h3.800l1.800 1.800v3.400h-5.600z" fill="#c3c6cb"/><rect x="0.400" y="5" width="7.600" height="3.500" rx="0.500" fill="#e8a040"/><path d="M2.900 5.700l-1.200 1 1.200 1M5.500 5.700l1.200 1-1.200 1" stroke="#7a4a12" stroke-width="0.700" fill="none"/></svg><span class="t" style="left:74px;top:2055.54px;font-size:7.9px;color:#262626;letter-spacing:0.27px;">activity_login.xml</span><svg style="position:absolute;left:64.5px;top:2067.2px" width="8.8" height="9.2" viewBox="0 0 8.8 9.2"><path d="M1.800 0.300h3.800l1.800 1.800v3.400h-5.600z" fill="#c3c6cb"/><rect x="0.400" y="5" width="7.600" height="3.500" rx="0.500" fill="#e8a040"/><path d="M2.900 5.700l-1.200 1 1.200 1M5.500 5.700l1.200 1-1.200 1" stroke="#7a4a12" stroke-width="0.700" fill="none"/></svg><span class="t" style="left:74px;top:2067.11px;font-size:7.9px;color:#262626;letter-spacing:0.29px;">activity_main.xml</span><svg style="position:absolute;left:64.5px;top:2078.77px" width="8.8" height="9.2" viewBox="0 0 8.8 9.2"><path d="M1.800 0.300h3.800l1.800 1.800v3.400h-5.600z" fill="#c3c6cb"/><rect x="0.400" y="5" width="7.600" height="3.500" rx="0.500" fill="#e8a040"/><path d="M2.900 5.700l-1.200 1 1.200 1M5.500 5.700l1.200 1-1.200 1" stroke="#7a4a12" stroke-width="0.700" fill="none"/></svg><span class="t" style="left:74px;top:2078.67px;font-size:7.9px;color:#3d8a3d;letter-spacing:0.32px;">add_channel_dialog.xml</span><svg style="position:absolute;left:64.5px;top:2090.34px" width="8.8" height="9.2" viewBox="0 0 8.8 9.2"><path d="M1.800 0.300h3.800l1.800 1.800v3.400h-5.600z" fill="#c3c6cb"/><rect x="0.400" y="5" width="7.600" height="3.500" rx="0.500" fill="#e8a040"/><path d="M2.900 5.700l-1.200 1 1.200 1M5.500 5.700l1.200 1-1.200 1" stroke="#7a4a12" stroke-width="0.700" fill="none"/></svg><span class="t" style="left:74px;top:2090.24px;font-size:7.9px;color:#262626;letter-spacing:0.33px;">app_bar_main.xml</span><svg style="position:absolute;left:64.5px;top:2101.9px" width="8.8" height="9.2" viewBox="0 0 8.8 9.2"><path d="M1.800 0.300h3.800l1.800 1.800v3.400h-5.600z" fill="#c3c6cb"/><rect x="0.400" y="5" width="7.600" height="3.500" rx="0.500" fill="#e8a040"/><path d="M2.900 5.700l-1.200 1 1.200 1M5.500 5.700l1.200 1-1.200 1" stroke="#7a4a12" stroke-width="0.700" fill="none"/></svg><span class="t" style="left:74px;top:2101.8px;font-size:7.9px;color:#262626;letter-spacing:0.32px;">content_main.xml</span><svg style="position:absolute;left:64.5px;top:2113.46px" width="8.8" height="9.2" viewBox="0 0 8.8 9.2"><path d="M1.800 0.300h3.800l1.800 1.800v3.400h-5.600z" fill="#c3c6cb"/><rect x="0.400" y="5" width="7.600" height="3.500" rx="0.500" fill="#e8a040"/><path d="M2.900 5.700l-1.200 1 1.200 1M5.500 5.700l1.200 1-1.200 1" stroke="#7a4a12" stroke-width="0.700" fill="none"/></svg><span class="t" style="left:74px;top:2113.37px;font-size:7.9px;color:#262626;letter-spacing:0.34px;">nav_header_main.xml</span><svg style="position:absolute;left:39px;top:2126.53px" width="6.6" height="6.6" viewBox="0 0 6.6 6.6"><path d="M1.500 0.600v5.400l3.900-2.700z" fill="#a0a0a0"/></svg><svg style="position:absolute;left:51.4px;top:2125.63px" width="9.2" height="8.6" viewBox="0 0 9.2 8.6"><path d="M0.3 1.2h3.4l0.9 1h4.1v5.300h-8.4z" fill="#b7bcc0"/><rect x="1.4" y="3.6" width="2.6" height="2.4" fill="#eef0f1"/></svg><span class="t" style="left:62.2px;top:2124.93px;font-size:7.9px;color:#262626;letter-spacing:0.39px;">mipmap</span><svg style="position:absolute;left:39px;top:2138.09px" width="6.6" height="6.6" viewBox="0 0 6.6 6.6"><path d="M1.500 0.600v5.400l3.900-2.700z" fill="#a0a0a0"/></svg><svg style="position:absolute;left:51.4px;top:2137.2px" width="9.2" height="8.6" viewBox="0 0 9.2 8.6"><path d="M0.3 1.2h3.4l0.9 1h4.1v5.300h-8.4z" fill="#b7bcc0"/><rect x="1.4" y="3.6" width="2.6" height="2.4" fill="#eef0f1"/></svg><span class="t" style="left:62.2px;top:2136.5px;font-size:7.9px;color:#262626;letter-spacing:0.31px;">values</span><svg style="position:absolute;left:14.6px;top:2149.66px" width="6.6" height="6.6" viewBox="0 0 6.6 6.6"><path d="M0.600 1.500h5.400l-2.700 3.900z" fill="#a0a0a0"/></svg><svg style="position:absolute;left:27px;top:2148.56px" width="8.8" height="8.8" viewBox="0 0 8.8 8.8"><circle cx="4.4" cy="4.4" r="3.600" fill="#fff" stroke="#3fae49" stroke-width="1.300"/><path d="M3 2.600v3.600l3.200-1.800z" fill="#3fae49"/></svg><span class="t" style="left:37.8px;top:2148.06px;font-size:7.9px;color:#262626;letter-spacing:0.29px;">Gradle Scripts</span><svg style="position:absolute;left:39.5px;top:2160.12px" width="8.8" height="8.8" viewBox="0 0 8.8 8.8"><circle cx="4.4" cy="4.4" r="3.600" fill="#fff" stroke="#3fae49" stroke-width="1.300"/><path d="M3 2.600v3.600l3.200-1.800z" fill="#3fae49"/></svg><span class="t" style="left:50px;top:2159.63px;font-size:7.9px;color:#262626;letter-spacing:0.28px;">build.gradle</span><span class="t" style="left:96.81px;top:2159.63px;font-size:7.9px;color:#868686;letter-spacing:0.3px;">(Project: Smack)</span><svg style="position:absolute;left:39.5px;top:2171.69px" width="8.8" height="8.8" viewBox="0 0 8.8 8.8"><circle cx="4.4" cy="4.4" r="3.600" fill="#fff" stroke="#3fae49" stroke-width="1.300"/><path d="M3 2.600v3.600l3.200-1.800z" fill="#3fae49"/></svg><span class="t" style="left:50px;top:2171.19px;font-size:7.9px;color:#262626;letter-spacing:0.28px;">build.gradle</span><span class="t" style="left:96.81px;top:2171.19px;font-size:7.9px;color:#868686;letter-spacing:0.31px;">(Module: app)</span><svg style="position:absolute;left:39.5px;top:2183.06px" width="8.8" height="9.2" viewBox="0 0 8.8 9.2"><path d="M1.400 0.300h4.400l2 2v6.300h-6.400z" fill="#c5c8cc"/><rect x="0.300" y="5" width="2" height="3.800" fill="#e8a33d"/><rect x="2.800" y="3.600" width="2" height="5.200" fill="#8fb84e"/><rect x="5.300" y="5.600" width="2" height="3.200" fill="#e8a33d"/></svg><span class="t" style="left:50px;top:2182.76px;font-size:7.9px;color:#262626;letter-spacing:0.3px;">gradle-wrapper.properties</span><span class="t" style="left:150.03px;top:2182.76px;font-size:7.9px;color:#868686;letter-spacing:0.3px;">(Gradle Version)</span><svg style="position:absolute;left:39.5px;top:2194.62px" width="8.8" height="9.2" viewBox="0 0 8.8 9.2"><path d="M1.400 0.300h4.400l2 2v6.300h-6.400z" fill="#b9bcc0"/><rect x="2.400" y="3.400" width="4.200" height="0.900" fill="#6d7074"/><rect x="2.400" y="5" width="4.200" height="0.900" fill="#6d7074"/><rect x="2.400" y="6.600" width="4.200" height="0.900" fill="#6d7074"/></svg><span class="t" style="left:50px;top:2194.32px;font-size:7.9px;color:#262626;letter-spacing:0.3px;">proguard-rules.pro</span><span class="t" style="left:122.94px;top:2194.32px;font-size:7.9px;color:#868686;letter-spacing:0.3px;">(ProGuard Rules for app)</span><svg style="position:absolute;left:39.5px;top:2206.18px" width="8.8" height="9.2" viewBox="0 0 8.8 9.2"><path d="M1.400 0.300h4.400l2 2v6.300h-6.400z" fill="#c5c8cc"/><rect x="0.300" y="5" width="2" height="3.800" fill="#e8a33d"/><rect x="2.800" y="3.600" width="2" height="5.200" fill="#8fb84e"/><rect x="5.300" y="5.600" width="2" height="3.200" fill="#e8a33d"/></svg><span class="t" style="left:50px;top:2205.89px;font-size:7.9px;color:#262626;letter-spacing:0.29px;">gradle.properties</span><span class="t" style="left:116.76px;top:2205.89px;font-size:7.9px;color:#868686;letter-spacing:0.28px;">(Project Properties)</span><svg style="position:absolute;left:39.5px;top:2217.95px" width="8.8" height="8.8" viewBox="0 0 8.8 8.8"><circle cx="4.4" cy="4.4" r="3.600" fill="#fff" stroke="#3fae49" stroke-width="1.300"/><path d="M3 2.600v3.600l3.200-1.800z" fill="#3fae49"/></svg><span class="t" style="left:50px;top:2217.45px;font-size:7.9px;color:#262626;letter-spacing:0.28px;">settings.gradle</span><span class="t" style="left:108.21px;top:2217.45px;font-size:7.9px;color:#868686;letter-spacing:0.28px;">(Project Settings)</span><svg style="position:absolute;left:39.5px;top:2229.32px" width="8.8" height="9.2" viewBox="0 0 8.8 9.2"><path d="M1.400 0.300h4.400l2 2v6.300h-6.400z" fill="#c5c8cc"/><rect x="0.300" y="5" width="2" height="3.800" fill="#e8a33d"/><rect x="2.800" y="3.600" width="2" height="5.200" fill="#8fb84e"/><rect x="5.300" y="5.600" width="2" height="3.200" fill="#e8a33d"/></svg><span class="t" style="left:50px;top:2229.02px;font-size:7.9px;color:#262626;letter-spacing:0.28px;">local.properties</span><span class="t" style="left:110.58px;top:2229.02px;font-size:7.9px;color:#868686;letter-spacing:0.31px;">(SDK Location)</span><div style="left:230px;top:1869.5px;width:780px;height:491px;background:#fff;"></div><div style="left:230px;top:1869.5px;width:780px;height:19.5px;background:#f2f2f2;"></div><div style="left:230px;top:1888.8px;width:780px;height:0.6px;background:#d9d9d9;"></div><div style="left:273.2px;top:1873.2px;width:85.44px;height:14.6px;background:#f7f7f7;border:0.8px solid #b4b4b4;box-sizing:border-box;border-radius:1.5px;"></div><span class="t m c" style="left:275.6px;top:1873.5px;color:#1a1a1a;font-size:11.16px;">MainActivity</span><div style="left:362.14px;top:1873.2px;width:132.48px;height:14.6px;background:#f7f7f7;border:0.8px solid #b4b4b4;box-sizing:border-box;border-radius:1.5px;"></div><span class="t m c" style="left:364.54px;top:1873.5px;color:#1a1a1a;font-size:11.16px;">addChannelClicked()</span><div style="left:498.12px;top:1873.2px;width:145.92px;height:14.6px;background:#f7f7f7;border:0.8px solid #b4b4b4;box-sizing:border-box;border-radius:1.5px;"></div><span class="t m c" style="left:500.52px;top:1873.5px;color:#1a1a1a;font-size:11.16px;">if (AuthService.isL…)</span><div style="left:647.54px;top:1873.2px;width:206.4px;height:14.6px;background:#fffce0;border:0.8px solid #b4b4b4;box-sizing:border-box;border-radius:1.5px;"></div><span class="t m c" style="left:649.94px;top:1873.5px;color:#1a1a1a;font-size:11.16px;">….setPositiveButton("Add") {…}</span><div style="left:230px;top:1889.5px;width:42.3px;height:471px;background:#f0f0f0;"></div><div style="left:230px;top:1869.5px;width:0.8px;height:491px;background:#c9c9c9;"></div><div style="left:272px;top:1889.5px;width:0.6px;height:471px;background:#dedede;"></div><div style="left:946px;top:1889.5px;width:0.6px;height:471px;background:#e4e4e4;"></div><div style="left:230px;top:2239.3px;width:772px;height:13.4px;background:#fffce4;"></div><div style="left:230px;top:2239.3px;width:42px;height:13.4px;background:#f9f6dc;"></div><div style="left:267px;top:2145.5px;width:5.4px;height:40.2px;background:#bcd6ab;"></div><div style="left:267px;top:2199.1px;width:5.4px;height:134px;background:#bcd6ab;"></div><span class="t m ln" style="left:233.200px;top:1890.6px;">60</span><span class="t m c" style="left:303.2px;top:1890.6px;">}</span><span class="t m ln" style="left:233.200px;top:1904px;">61</span><span class="t m ln" style="left:233.200px;top:1917.4px;">62</span><span class="t m c" style="left:303.2px;top:1917.4px;color:#141470;font-weight:bold;">fun</span><span class="t m c" style="left:329.9px;top:1917.4px;">loginBtnNavClicked(</span><span class="t m c" style="left:456.72px;top:1917.4px;color:#787878;">view</span><span class="t m c" style="left:483.42px;top:1917.4px;">: View) {</span><span class="t m ln" style="left:233.200px;top:1930.8px;">63</span><span class="t m ln" style="left:233.200px;top:1944.2px;">64</span><span class="t m c" style="left:329.9px;top:1944.2px;color:#141470;font-weight:bold;">if</span><span class="t m c" style="left:349.93px;top:1944.2px;">(AuthService.</span><span class="t m c" style="left:436.7px;top:1944.2px;color:#5e2276;font-weight:bold;text-decoration:underline;">isLoggedIn</span><span class="t m c" style="left:503.45px;top:1944.2px;">) {</span><span class="t m ln" style="left:233.200px;top:1957.6px;">65</span><span class="t m c" style="left:356.6px;top:1957.6px;">UserDataService.logout()</span><span class="t m ln" style="left:233.200px;top:1971px;">66</span><span class="t m c" style="left:356.6px;top:1971px;color:#5e2276;font-style:italic;">userNameNavHeader</span><span class="t m c" style="left:470.08px;top:1971px;">.</span><span class="t m c" style="left:476.75px;top:1971px;color:#5e2276;font-style:italic;text-decoration:underline;">text</span><span class="t m c" style="left:510.13px;top:1971px;">= </span><span class="t m c" style="left:523.48px;top:1971px;color:#167a16;font-weight:bold;">""</span><span class="t m ln" style="left:233.200px;top:1984.4px;">67</span><span class="t m c" style="left:356.6px;top:1984.4px;color:#5e2276;font-style:italic;">userEmailNavHeader</span><span class="t m c" style="left:476.75px;top:1984.4px;">.</span><span class="t m c" style="left:483.43px;top:1984.4px;color:#5e2276;font-style:italic;text-decoration:underline;">text</span><span class="t m c" style="left:516.8px;top:1984.4px;">= </span><span class="t m c" style="left:530.15px;top:1984.4px;color:#167a16;font-weight:bold;">""</span><span class="t m ln" style="left:233.200px;top:1997.8px;">68</span><span class="t m c" style="left:356.6px;top:1997.8px;color:#5e2276;font-style:italic;">userImageNavHeader</span><span class="t m c" style="left:476.75px;top:1997.8px;">.setImageResource(R.drawable.</span><span class="t m c" style="left:670.33px;top:1997.8px;color:#5e2276;font-style:italic;">profiledefault</span><span class="t m c" style="left:763.78px;top:1997.8px;">)</span><span class="t m ln" style="left:233.200px;top:2011.2px;">69</span><span class="t m c" style="left:356.6px;top:2011.2px;color:#5e2276;font-style:italic;">userImageNavHeader</span><span class="t m c" style="left:476.75px;top:2011.2px;">.setBackgroundColor(Color.</span><span class="t m c" style="left:650.3px;top:2011.2px;color:#5e2276;font-style:italic;">TRANSPARENT</span><span class="t m c" style="left:723.72px;top:2011.2px;">)</span><span class="t m ln" style="left:233.200px;top:2024.6px;">70</span><span class="t m c" style="left:356.6px;top:2024.6px;color:#5e2276;font-style:italic;">loginBtnNavHeader</span><span class="t m c" style="left:470.08px;top:2024.6px;">.</span><span class="t m c" style="left:476.75px;top:2024.6px;color:#5e2276;font-style:italic;text-decoration:underline;">text</span><span class="t m c" style="left:510.13px;top:2024.6px;">= </span><span class="t m c" style="left:523.48px;top:2024.6px;color:#167a16;font-weight:bold;">"</span><span class="t m c" style="left:530.15px;top:2024.6px;background:#e6f2c4;color:#167a16;font-weight:bold;">Login</span><span class="t m c" style="left:563.52px;top:2024.6px;color:#167a16;font-weight:bold;">"</span><span class="t m ln" style="left:233.200px;top:2038px;">71</span><span class="t m ln" style="left:233.200px;top:2051.4px;">72</span><span class="t m c" style="left:329.9px;top:2051.4px;">} </span><span class="t m c" style="left:343.25px;top:2051.4px;color:#141470;font-weight:bold;">else</span><span class="t m c" style="left:376.62px;top:2051.4px;">{</span><span class="t m ln" style="left:233.200px;top:2064.8px;">73</span><span class="t m c" style="left:356.6px;top:2064.8px;color:#141470;font-weight:bold;">val</span><span class="t m c" style="left:383.3px;top:2064.8px;">loginIntent = Intent(</span><span class="t m c" style="left:523.48px;top:2064.8px;color:#141470;font-weight:bold;">this</span><span class="t m c" style="left:550.18px;top:2064.8px;">, LoginActivity::</span><span class="t m c" style="left:663.65px;top:2064.8px;color:#141470;font-weight:bold;">class</span><span class="t m c" style="left:697.03px;top:2064.8px;">.</span><span class="t m c" style="left:703.7px;top:2064.8px;font-style:italic;">java</span><span class="t m c" style="left:730.4px;top:2064.8px;">)</span><span class="t m ln" style="left:233.200px;top:2078.2px;">74</span><span class="t m c" style="left:356.6px;top:2078.2px;">startActivity(loginIntent)</span><span class="t m ln" style="left:233.200px;top:2091.6px;">75</span><span class="t m c" style="left:329.9px;top:2091.6px;">}</span><span class="t m ln" style="left:233.200px;top:2105px;">76</span><span class="t m c" style="left:303.2px;top:2105px;">}</span><span class="t m ln" style="left:233.200px;top:2118.4px;">77</span><span class="t m ln" style="left:233.200px;top:2131.8px;">78</span><span class="t m c" style="left:303.2px;top:2131.8px;color:#141470;font-weight:bold;">fun</span><span class="t m c" style="left:329.9px;top:2131.8px;">addChannelClicked(</span><span class="t m c" style="left:450.05px;top:2131.8px;color:#787878;">view</span><span class="t m c" style="left:476.75px;top:2131.8px;">: View) {</span><span class="t m ln" style="left:233.200px;top:2145.2px;">79</span><span class="t m c" style="left:329.9px;top:2145.2px;color:#141470;font-weight:bold;">if</span><span class="t m c" style="left:349.93px;top:2145.2px;">(AuthService.</span><span class="t m c" style="left:436.7px;top:2145.2px;color:#5e2276;font-weight:bold;text-decoration:underline;">isLoggedIn</span><span class="t m c" style="left:503.45px;top:2145.2px;">) {</span><span class="t m ln" style="left:233.200px;top:2158.6px;">80</span><span class="t m c" style="left:356.6px;top:2158.6px;color:#141470;font-weight:bold;">val</span><span class="t m c" style="left:383.3px;top:2158.6px;">builder = AlertDialog.Builder(</span><span class="t hint" style="left:587.75px;top:2160.2px;width:41.5px;letter-spacing:1.1px;">context:</span><span class="t m c" style="left:633.75px;top:2158.6px;color:#141470;font-weight:bold;">this</span><span class="t m c" style="left:660.45px;top:2158.6px;">)</span><span class="t m ln" style="left:233.200px;top:2172px;">81</span><span class="t m c" style="left:356.6px;top:2172px;color:#141470;font-weight:bold;">val</span><span class="t m c" style="left:383.3px;top:2172px;">dialogView = </span><span class="t m c" style="left:470.07px;top:2172px;color:#5e2276;font-style:italic;">layoutInflater</span><span class="t m c" style="left:563.52px;top:2172px;">.inflate(R.layout.</span><span class="t m c" style="left:683.67px;top:2172px;color:#5e2276;font-style:italic;">add_channel_dialog</span><span class="t m c" style="left:803.82px;top:2172px;">, </span><span class="t hint" style="left:820.77px;top:2173.6px;width:26.5px;letter-spacing:1.22px;">root:</span><span class="t m c" style="left:849.77px;top:2172px;color:#141470;font-weight:bold;background:#fbf6d2;">null</span><span class="t m c" style="left:876.48px;top:2172px;">)</span><span class="t m ln" style="left:233.200px;top:2185.4px;">82</span><span class="t m ln" style="left:233.200px;top:2198.8px;">83</span><span class="t m c" style="left:356.6px;top:2198.8px;">builder.setView(dialogView)</span><span class="t m ln" style="left:233.200px;top:2212.2px;">84</span><span class="t m c" style="left:410px;top:2212.2px;">.setPositiveButton(</span><span class="t m c" style="left:536.83px;top:2212.2px;color:#167a16;font-weight:bold;">"Add"</span><span class="t m c" style="left:570.2px;top:2212.2px;">) </span><span class="t m c" style="left:583.55px;top:2212.2px;font-weight:bold;">{</span><span class="t m c" style="left:596.9px;top:2212.2px;text-decoration:underline dotted #888;">dialogInterface</span><span class="t m c" style="left:697.02px;top:2212.2px;">, </span><span class="t m c" style="left:710.38px;top:2212.2px;text-decoration:underline dotted #888;">i</span><span class="t m c" style="left:723.72px;top:2212.2px;font-weight:bold;">-&gt;</span><span class="t m ln" style="left:233.200px;top:2225.6px;">85</span><span class="t m c" style="left:436.7px;top:2225.6px;color:#808080;font-style:italic;">// perform some logic when clicked</span><span class="t m ln" style="left:233.200px;top:2239px;">86</span><span class="t m c" style="left:436.7px;top:2239px;color:#141470;font-weight:bold;">val</span><span class="t m c" style="left:463.4px;top:2239px;color:#808080;">nameTextField</span><span class="t m c" style="left:556.85px;top:2239px;">= dialogView.findViewById&lt;EditText&gt;(R)</span><span class="t m ln" style="left:233.200px;top:2252.4px;">87</span><span class="t m c" style="left:410px;top:2252.4px;font-weight:bold;">}</span><span class="t m ln" style="left:233.200px;top:2265.8px;">88</span><span class="t m c" style="left:410px;top:2265.8px;">.setNegativeButton(</span><span class="t m c" style="left:536.83px;top:2265.8px;color:#167a16;font-weight:bold;">"Cancel"</span><span class="t m c" style="left:590.23px;top:2265.8px;">) </span><span class="t m c" style="left:603.58px;top:2265.8px;font-weight:bold;">{</span><span class="t m c" style="left:616.92px;top:2265.8px;text-decoration:underline dotted #888;">dialogInterface</span><span class="t m c" style="left:717.05px;top:2265.8px;">, </span><span class="t m c" style="left:730.4px;top:2265.8px;text-decoration:underline dotted #888;">i</span><span class="t m c" style="left:743.75px;top:2265.8px;font-weight:bold;">-&gt;</span><span class="t m ln" style="left:233.200px;top:2279.2px;">89</span><span class="t m c" style="left:436.7px;top:2279.2px;color:#808080;font-style:italic;">// Cancel and close the dialog</span><span class="t m ln" style="left:233.200px;top:2292.6px;">90</span><span class="t m c" style="left:410px;top:2292.6px;font-weight:bold;">}</span><span class="t m ln" style="left:233.200px;top:2306px;">91</span><span class="t m c" style="left:410px;top:2306px;">.show()</span><span class="t m ln" style="left:233.200px;top:2319.4px;">92</span><span class="t m c" style="left:329.9px;top:2319.4px;">}</span><span class="t m ln" style="left:233.200px;top:2332.8px;">93</span><span class="t m c" style="left:303.2px;top:2332.8px;">}</span><span class="t m ln" style="left:233.200px;top:2346.2px;">94</span><div style="left:269.4px;top:1895px;width:5.2px;height:5.2px;background:#fff;border:0.600px solid #d2d2d2;box-sizing:border-box;border-radius:1.500px;"></div><div style="left:269.4px;top:1921.8px;width:5.2px;height:5.2px;background:#fff;border:0.600px solid #d2d2d2;box-sizing:border-box;border-radius:1.500px;"></div><div style="left:269.4px;top:1948.6px;width:5.2px;height:5.2px;background:#fff;border:0.600px solid #d2d2d2;box-sizing:border-box;border-radius:1.500px;"></div><div style="left:269.4px;top:2055.8px;width:5.2px;height:5.2px;background:#fff;border:0.600px solid #d2d2d2;box-sizing:border-box;border-radius:1.500px;"></div><div style="left:269.4px;top:2096px;width:5.2px;height:5.2px;background:#fff;border:0.600px solid #d2d2d2;box-sizing:border-box;border-radius:1.500px;"></div><div style="left:269.4px;top:2109.4px;width:5.2px;height:5.2px;background:#fff;border:0.600px solid #d2d2d2;box-sizing:border-box;border-radius:1.500px;"></div><div style="left:269.4px;top:2136.2px;width:5.2px;height:5.2px;background:#fff;border:0.600px solid #d2d2d2;box-sizing:border-box;border-radius:1.500px;"></div><div style="left:269.4px;top:2149.6px;width:5.2px;height:5.2px;background:#fff;border:0.600px solid #d2d2d2;box-sizing:border-box;border-radius:1.500px;"></div><div style="left:269.4px;top:2216.6px;width:5.2px;height:5.2px;background:#fff;border:0.600px solid #d2d2d2;box-sizing:border-box;border-radius:1.500px;"></div><div style="left:269.4px;top:2256.8px;width:5.2px;height:5.2px;background:#fff;border:0.600px solid #d2d2d2;box-sizing:border-box;border-radius:1.500px;"></div><div style="left:269.4px;top:2270.2px;width:5.2px;height:5.2px;background:#fff;border:0.600px solid #d2d2d2;box-sizing:border-box;border-radius:1.500px;"></div><div style="left:269.4px;top:2297px;width:5.2px;height:5.2px;background:#fff;border:0.600px solid #d2d2d2;box-sizing:border-box;border-radius:1.500px;"></div><div style="left:269.4px;top:2323.8px;width:5.2px;height:5.2px;background:#fff;border:0.600px solid #d2d2d2;box-sizing:border-box;border-radius:1.500px;"></div><div style="left:269.4px;top:2337.2px;width:5.2px;height:5.2px;background:#fff;border:0.600px solid #d2d2d2;box-sizing:border-box;border-radius:1.500px;"></div><div style="left:253px;top:2001.8px;width:6px;height:6px;background:#f4f4f4;border:0.800px solid #c9c9c9;box-sizing:border-box;border-radius:50%;"></div><svg style="position:absolute;left:1002.5px;top:1891.5px" width="7" height="5.5" viewBox="0 0 7 5.5"><ellipse cx="3.500" cy="2.700" rx="3" ry="2.100" fill="none" stroke="#777" stroke-width="0.700"/><circle cx="3.500" cy="2.700" r="1" fill="#777"/></svg><div style="left:1001px;top:2112.8px;width:8.5px;height:1px;background:#b7c24a;"></div><div style="left:1001px;top:2170.5px;width:8.5px;height:1px;background:#b7c24a;"></div><div style="left:1001px;top:2206px;width:8.5px;height:1px;background:#b7c24a;"></div><div style="left:1001px;top:2241.7px;width:8.5px;height:1px;background:#b7c24a;"></div><div style="left:1001px;top:2255px;width:8.5px;height:1px;background:#b7c24a;"></div><div style="left:1001px;top:2277px;width:8.5px;height:1px;background:#c0504d;"></div><div style="left:1001px;top:2317px;width:8.5px;height:1px;background:#b7c24a;"></div><div style="left:1004.5px;top:2164px;width:3.6px;height:150.6px;background:#c4c4c4;border-radius:2px;"></div><div style="left:0px;top:1854px;width:14.2px;height:533px;background:#e6e6e6;"></div><div style="left:13.6px;top:1854px;width:0.7px;height:533px;background:#cfcfcf;"></div><div style="left:0px;top:1854.5px;width:13.6px;height:51px;background:#bcbcbc;"></div><span class="t" style="left:-9.35px;top:1870.18px;width:33.5px;height:8.43px;font-size:6.8px;line-height:8.43px;color:#333;transform:rotate(-90deg);text-align:center;letter-spacing:0.08px;">1: Project</span><div style="left:4.4px;top:1892px;width:6px;height:6.5px;background:#8db33a;border-radius:1px;"></div><span class="t" style="left:-12.85px;top:1926.18px;width:40.5px;height:8.43px;font-size:6.8px;line-height:8.43px;color:#444;transform:rotate(-90deg);text-align:center;letter-spacing:0.08px;">Z: Structure</span><svg style="position:absolute;left:3.4px;top:1950.5px" width="8" height="8" viewBox="0 0 8 8"><path d="M1 4l5-3M1 4l5 3" stroke="#888" stroke-width="0.900"/><circle cx="1.500" cy="4" r="1.200" fill="#d66"/><circle cx="6.200" cy="1.200" r="1.200" fill="#888"/><circle cx="6.200" cy="6.800" r="1.200" fill="#888"/></svg><span class="t" style="left:-8.6px;top:1981.98px;width:32px;height:8.43px;font-size:6.8px;line-height:8.43px;color:#444;transform:rotate(-90deg);text-align:center;letter-spacing:0.05px;">Captures</span><div style="left:4px;top:2003px;width:6.8px;height:6.8px;background:#9aa3ab;border-radius:50%;"></div><span class="t" style="left:-16.1px;top:2256.78px;width:47px;height:8.43px;font-size:6.8px;line-height:8.43px;color:#444;transform:rotate(-90deg);text-align:center;letter-spacing:0.11px;">Build Variants</span><svg style="position:absolute;left:3.1px;top:2284.42px" width="8.5" height="8.16" viewBox="0 0 10 9.6"><path d="M1.800 3.600a3.200 3.200 0 0 1 6.400 0z" fill="#9bc53d"/><rect x="1.800" y="4.100" width="6.400" height="4.600" rx="0.700" fill="#9bc53d"/><rect x="0.300" y="4.100" width="1.100" height="3.600" rx="0.500" fill="#9bc53d"/><rect x="8.600" y="4.100" width="1.100" height="3.600" rx="0.500" fill="#9bc53d"/></svg><div style="left:0px;top:1825px;width:1.2px;height:562px;background:#3c3c3c;"></div><div style="left:1009.8px;top:1854px;width:14.2px;height:533px;background:#e6e6e6;"></div><div style="left:1009.6px;top:1854px;width:0.7px;height:520px;background:#cfcfcf;"></div><svg style="position:absolute;left:1012.8px;top:1861.1px" width="8.8" height="8.8" viewBox="0 0 8.8 8.8"><circle cx="4.4" cy="4.4" r="3.600" fill="#fff" stroke="#3fae49" stroke-width="1.300"/><path d="M3 2.600v3.600l3.200-1.800z" fill="#3fae49"/></svg><span class="t" style="left:1005.2px;top:1878.28px;width:24px;height:8.43px;font-size:6.8px;line-height:8.43px;color:#333;transform:rotate(90deg);text-align:center;letter-spacing:-0.07px;">Gradle</span><div style="left:1013.8px;top:2284.5px;width:6px;height:7px;background:#f4f4f4;border:0.700px solid #888;box-sizing:border-box;border-radius:1px;"></div><span class="t" style="left:984.45px;top:2319.08px;width:65.5px;height:8.43px;font-size:6.8px;line-height:8.43px;color:#333;transform:rotate(90deg);text-align:center;letter-spacing:0.03px;">Device File Explorer</span><div style="left:1022.6px;top:1825px;width:1.4px;height:562px;background:#4a4a4a;"></div><div style="left:0px;top:2360.5px;width:1024px;height:26.5px;background:#ececec;"></div><div style="left:0px;top:2360.5px;width:1024px;height:0.7px;background:#cfcfcf;"></div><svg style="position:absolute;left:153.7px;top:2364.5px" width="9" height="7" viewBox="0 0 9 7"><path d="M1 6.500a3.500 3.500 0 0 1 7 0" fill="none" stroke="#999" stroke-width="1"/></svg><span class="t" style="left:164.2px;top:2363.91px;font-size:6.6px;color:#333;letter-spacing:0.21px;">Android Profiler</span><svg style="position:absolute;left:228.5px;top:2364px" width="7" height="8" viewBox="0 0 7 8"><path d="M1.500 0.500v7M5.500 0.500c0 3-4 3-4 5" fill="none" stroke="#777" stroke-width="0.900"/></svg><span class="t" style="left:238px;top:2363.91px;font-size:6.6px;color:#333;letter-spacing:0.16px;">9: Version Control</span><div style="left:307.8px;top:2364.5px;width:7.5px;height:7px;background:#6b6b6b;border-radius:0.800px;"></div><div style="left:309.3px;top:2367px;width:3px;height:1.2px;background:#eee;"></div><span class="t" style="left:318.3px;top:2363.91px;font-size:6.6px;color:#333;letter-spacing:0.19px;">Terminal</span><div style="left:358.5px;top:2364.5px;width:7.5px;height:7px;background:#d9a24a;border-radius:0.800px;"></div><span class="t" style="left:369px;top:2363.91px;font-size:6.6px;color:#333;letter-spacing:0.23px;">0: Messages</span><svg style="position:absolute;left:891.5px;top:2364px" width="9" height="9" viewBox="0 0 9 9"><circle cx="4.500" cy="4" r="3.400" fill="none" stroke="#999" stroke-width="0.900"/></svg><span class="t" style="left:902.5px;top:2363.91px;font-size:6.6px;color:#333;letter-spacing:0.09px;">Event Log</span><div style="left:948px;top:2364.5px;width:7px;height:7px;background:#e8f0ee;border:0.800px solid #7a9a9a;box-sizing:border-box;"></div><span class="t" style="left:958px;top:2363.91px;font-size:6.6px;color:#333;letter-spacing:0.08px;">Gradle Console</span><span class="t" style="left:771px;top:2376.53px;font-size:6.4px;color:#333;">86:80</span><span class="t" style="left:795px;top:2376.53px;font-size:6.4px;color:#333;">LF∶</span><span class="t" style="left:812.7px;top:2376.53px;font-size:6.4px;color:#333;">UTF-8∶</span><span class="t" style="left:842.4px;top:2376.53px;font-size:6.4px;color:#333;">Git: lesson-17 ∶</span><span class="t" style="left:898.7px;top:2376.53px;font-size:6.4px;color:#9a9a9a;letter-spacing:0.26px;">Context: &lt;no context&gt;</span><svg style="position:absolute;left:1px;top:2296.5px" width="147" height="91" viewBox="0 0 148 90" preserveAspectRatio="none"><defs><filter id="wb3" x="-10%" y="-10%" width="120%" height="120%"><feGaussianBlur stdDeviation="0.9"/></filter><linearGradient id="wd3" x1="0" x2="1" y1="0" y2="0"><stop offset="0" stop-color="#d6d3cc"/><stop offset="0.14" stop-color="#ececeb"/><stop offset="1" stop-color="#e5e4e1"/></linearGradient><linearGradient id="wh3" x1="0" x2="0" y1="0" y2="1"><stop offset="0" stop-color="#8e604b"/><stop offset="1" stop-color="#6e4838"/></linearGradient></defs><rect x="0" y="0" width="148" height="90" fill="#d4d1ca"/><g filter="url(#wb3)"><g transform="translate(0 0) scale(1)"><rect x="-12" y="-8" width="100" height="110" fill="#d5d2cb"/><rect x="79" y="-8" width="49" height="110" fill="url(#wd3)"/><rect x="127" y="-8" width="40" height="110" fill="#ccc8be"/><rect x="124.500" y="-8" width="3" height="110" fill="#f3f2ef"/><rect x="11.500" y="-8" width="53" height="22.500" fill="#efede8"/><rect x="15" y="-8" width="46.500" height="19.500" fill="#4a4c4f"/><path d="M19 8l8-4 26 1 6 4z" fill="#8d9196"/><rect x="30" y="8" width="22" height="1.500" fill="#7a4a4a"/><rect x="5.500" y="-8" width="2.200" height="24" fill="#3a3532"/><rect x="-12" y="-8" width="12.500" height="20" fill="#2e2c2b"/><rect x="-12" y="33" width="21.500" height="70" fill="#2a2423"/><rect x="-12" y="40" width="16" height="10" fill="#4a4745"/><rect x="-12" y="70" width="16" height="14" fill="#6b2a2c"/><rect x="17.500" y="28.500" width="11.500" height="3" fill="#eee8e2"/><rect x="20.500" y="31.500" width="6.500" height="17" fill="#7a3038"/><rect x="2" y="48" width="26.500" height="55" rx="2" fill="#dfe0e5"/><path d="M26 102V25q0-8 8-8h58q8 0 8 8V102z" fill="#282c35"/><path d="M31 102V30q0-7 6-8v80z" fill="#1f222a"/></g><g transform="rotate(-2 82 51.8) translate(82 11.8) scale(0.96 1) translate(-82 -11.8)"><path d="M31 95c1-20 8-26 26-30l10-4h24l10 4c18 4 26 10 30 30z" fill="#88c4b0"/><path d="M38 95c4-14 10-20 22-24" fill="none" stroke="#79b3a0" stroke-width="1.500"/><path d="M64 60c0 24 6 31 18 31s18-7 18-31z" fill="#263049"/><path d="M68.5 58c0 20 5 25 13.500 25s13.500-5 13.500-25z" fill="#d9a797"/><ellipse cx="64" cy="45.8" rx="2.200" ry="4.500" fill="#dba594"/><ellipse cx="100" cy="45.8" rx="2.200" ry="4.500" fill="#dba594"/><path d="M64.5 37.8c0-16 8-22 17.500-22s17.500 6 17.500 22v14c0 16-8 24-17.500 24s-17.500-8-17.500-24z" fill="#e6b5a8"/><ellipse cx="82" cy="32.8" rx="10" ry="8" fill="#efc4b6"/><path d="M64.5 51.8c1 8 3 10 7 11c3-3 7-4 10.500-4s7.500 1 10.500 4c4-1 6-3 7-11l0.500 10c0 16-8 22-18 22s-18-6-18-22z" fill="#86604f"/><ellipse cx="82" cy="74.8" rx="9" ry="7" fill="#7a5544"/><ellipse cx="82" cy="64.3" rx="5" ry="1.600" fill="#c4958a"/><path d="M82 47.8l-2.500 9h5.500z" fill="#dca595"/><ellipse cx="74" cy="44.3" rx="4.200" ry="1.600" fill="#5e4038"/><ellipse cx="90" cy="44.3" rx="4.200" ry="1.600" fill="#5e4038"/><path d="M69.5 40.8h8M86.5 40.8h8" stroke="#8a6252" stroke-width="1.200"/><path d="M64 42.8c-2-10-2-20 4-26 5-6 22-7 28-1 6 6 6 16 4 27l-2.500-9c-1-5-3-8-6-9-6 2-14 2-20 0-3 1-4 4-5 9z" fill="url(#wh3)"/></g></g></svg><div style="left:0px;top:2386.2px;width:1024px;height:0.8px;background:#9a9a9a;"></div><svg style="position:absolute;left:964px;top:2372.3px" width="60" height="16" viewBox="0 0 60 16"><text x="58.500" y="13.300" text-anchor="end" font-family="Liberation Sans, sans-serif" font-size="12.200" font-style="italic" font-weight="bold" fill="#fff" stroke="#000" stroke-width="1.200" stroke-linejoin="round" paint-order="stroke" letter-spacing="-0.150">00:11:54</text></svg></div></div></div>
</div></body></html>
